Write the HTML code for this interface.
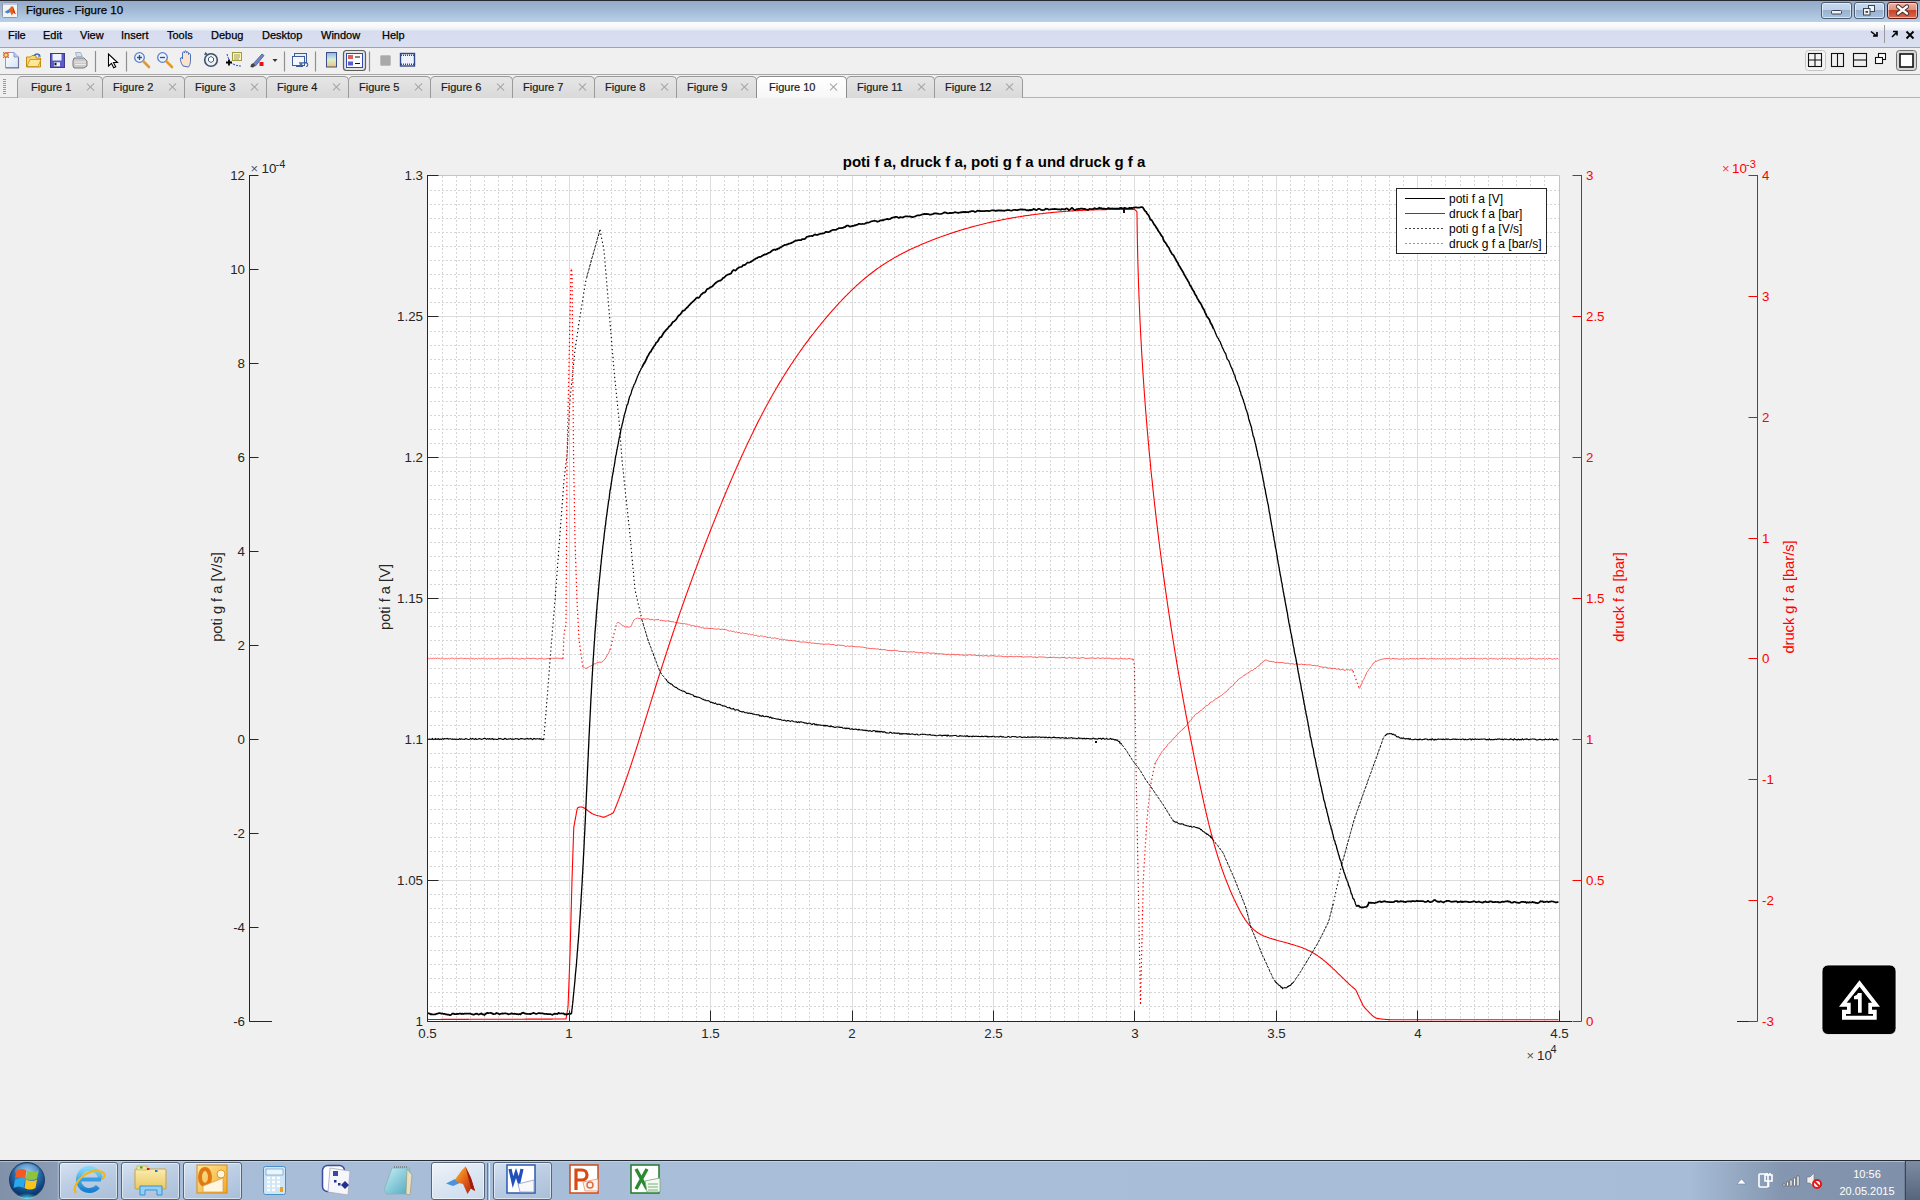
<!DOCTYPE html>
<html><head><meta charset="utf-8">
<style>
html,body{margin:0;padding:0}
body{width:1920px;height:1200px;overflow:hidden;background:#f0f0f0;position:relative;font-family:"Liberation Sans",sans-serif}
.abs{position:absolute}
#titlebar{left:0;top:0;width:1920px;height:22px;background:linear-gradient(#93abc9 0px,#a0b7d4 8px,#b2c9e4 17px,#bad1eb 22px);border-top:1px solid #252a30;box-sizing:border-box}
#menubar{left:0;top:22px;width:1920px;height:26px;background:linear-gradient(#fdfdfe 0px,#f5f7fb 5px,#e8ecf6 8px,#d6dcee 9px,#dbe0f1 25px);border-bottom:1px solid #a0a3ab;box-sizing:border-box}
#toolbar{left:0;top:48px;width:1920px;height:27px;background:#f0f0f0;border-bottom:1px solid #a7a7a7;box-sizing:border-box}
#tabbar{left:0;top:75px;width:1920px;height:23px;background:#f0f0f0;border-bottom:1px solid #b4b4b4;box-sizing:border-box}
.menu{position:absolute;top:7px;font-size:11px;color:#000;line-height:12px;-webkit-text-stroke:0.25px #000}
.tab{position:absolute;top:1px;height:22px;box-sizing:border-box;border:1px solid #9a9a9a;border-bottom:none;border-radius:5px 5px 0 0;background:linear-gradient(#e6e6e6,#d9d9d9);font-size:11px;color:#1a1a1a;line-height:12px;-webkit-text-stroke:0.2px #1a1a1a}
.tab.act{background:linear-gradient(#ffffff,#f7f7f7);top:1px;height:22px;z-index:2;border-color:#8d8d8d}
.tab span{position:absolute;top:4px;left:10px}
.tab.act span{top:4px;left:12px}
.tab b{position:absolute;top:6px;width:8px;height:8px}
.tab b:before,.tab b:after{content:"";position:absolute;left:3px;top:-1px;width:1.4px;height:10px;background:#a5a5a5;transform:rotate(45deg)}
.tab b:after{transform:rotate(-45deg)}
#taskbar{left:0;top:1160px;width:1920px;height:40px;background:linear-gradient(90deg,#8091a9 0px,#8a9bb3 57px,#a7bcd7 59px,#a9bfd9 900px,#a6bcd7 1690px,#8597b0 1780px,#7f91aa 1904px,#5b6a80 1905px);border-top:1px solid #262c36;box-sizing:border-box;box-shadow:inset 0 1px 0 rgba(210,225,240,.55)}
.tbtn{position:absolute;top:1px;height:38px;box-sizing:border-box;border:1px solid #56657b;border-radius:3px;background:linear-gradient(160deg,#d5e2f0 0%,#bccee4 45%,#a9bed8 100%);box-shadow:inset 0 0 0 1px rgba(255,255,255,.5)}
.tbtn.act{background:linear-gradient(160deg,#eef3f9 0%,#dbe6f2 50%,#cbdaeb 100%)}
.wbtn{position:absolute;top:2px;height:17px;box-sizing:border-box;border:1px solid #4d5b70;border-radius:3px;background:linear-gradient(#c7d9ee 0%,#bdd1e8 45%,#98b1cf 50%,#a9c2df 100%);box-shadow:inset 0 0 0 1px rgba(255,255,255,.55)}
</style></head><body>
<div id="titlebar" class="abs"></div>
<div class="abs" style="left:26px;top:3px;font-size:11.5px;color:#000;line-height:14px;-webkit-text-stroke:0.25px #000">Figures - Figure 10</div>
<div class="wbtn" style="left:1821px;width:31px"></div>
<div class="wbtn" style="left:1854px;width:31px"></div>
<div class="wbtn" style="left:1887px;width:31px;border-color:#5b1b1b;background:linear-gradient(#eab2a4 0%,#e0917c 45%,#c8432a 50%,#d9694f 100%)"></div>
<div id="menubar" class="abs">
<span class="menu" style="left:8px">File</span><span class="menu" style="left:43px">Edit</span><span class="menu" style="left:80px">View</span><span class="menu" style="left:121px">Insert</span><span class="menu" style="left:167px">Tools</span><span class="menu" style="left:211px">Debug</span><span class="menu" style="left:262px">Desktop</span><span class="menu" style="left:321px">Window</span><span class="menu" style="left:382px">Help</span>
</div>
<div id="toolbar" class="abs"></div>
<div id="tabbar" class="abs">
<div class="tab" style="left:17px;width:86px"><span style="left:13px">Figure 1</span><b style="left:69px"></b></div>
<div class="tab" style="left:102px;width:83px"><span>Figure 2</span><b style="left:66px"></b></div>
<div class="tab" style="left:184px;width:83px"><span>Figure 3</span><b style="left:66px"></b></div>
<div class="tab" style="left:266px;width:83px"><span>Figure 4</span><b style="left:66px"></b></div>
<div class="tab" style="left:348px;width:83px"><span>Figure 5</span><b style="left:66px"></b></div>
<div class="tab" style="left:430px;width:83px"><span>Figure 6</span><b style="left:66px"></b></div>
<div class="tab" style="left:512px;width:83px"><span>Figure 7</span><b style="left:66px"></b></div>
<div class="tab" style="left:594px;width:83px"><span>Figure 8</span><b style="left:66px"></b></div>
<div class="tab" style="left:676px;width:81px"><span>Figure 9</span><b style="left:64px"></b></div>
<div class="tab act" style="left:756px;width:91px"><span>Figure 10</span><b style="left:73px;top:6px"></b></div>
<div class="tab" style="left:846px;width:89px"><span>Figure 11</span><b style="left:71px"></b></div>
<div class="tab" style="left:934px;width:89px"><span>Figure 12</span><b style="left:71px"></b></div>
</div>
<svg class="abs" style="left:0;top:0" width="1920" height="100">
<defs>
<linearGradient id="mlg" x1="0" y1="0" x2="1" y2="1"><stop offset="0" stop-color="#3d7bd8"/><stop offset="0.5" stop-color="#e06a1c"/><stop offset="1" stop-color="#b32a10"/></linearGradient>
<linearGradient id="pg" x1="0" y1="0" x2="1" y2="1"><stop offset="0" stop-color="#ffffff"/><stop offset="1" stop-color="#d6e4f7"/></linearGradient>
<linearGradient id="cbg" x1="0" y1="0" x2="0" y2="1"><stop offset="0" stop-color="#8fb0f0"/><stop offset="0.5" stop-color="#d8f0d0"/><stop offset="1" stop-color="#f3c070"/></linearGradient>
</defs>
<!-- title icon -->
<rect x="2.5" y="2.5" width="15" height="15" rx="1" fill="#f4f4f4" stroke="#8a98ab"/>
<rect x="3" y="3" width="14" height="2" fill="#b9cbe2"/>
<path d="M4.5 12 L8.5 9.5 L10.5 12 L7.5 13.5 Z" fill="#3f86d6"/><path d="M8.5 9.8 L11.5 6.3 L13 6.6 L15.6 14.2 L13.6 12.8 L11.8 15.6 L10.2 12.2 Z" fill="#e3651c"/><path d="M13 6.6 L15.6 14.2 L13.6 12.8 Z" fill="#b82a12"/>
<!-- menu right -->
<path d="M1871 31.5 l5 4 M1877 32 v4 h-4" stroke="#000" stroke-width="1.6" fill="none"/>
<path d="M1884.5 25v18" stroke="#9a9a9a" stroke-width="1"/>
<path d="M1892 37 l5 -5 M1893 31.5 h4 v4" stroke="#000" stroke-width="1.6" fill="none"/>
<path d="M1906.5 31.5 l7 7 M1913.5 31.5 l-7 7" stroke="#000" stroke-width="1.8"/>
<!-- window buttons glyphs -->
<rect x="1831.5" y="10.5" width="10" height="3.5" rx="1" fill="#f2f2f2" stroke="#3b4454" stroke-width="1"/>
<rect x="1868.5" y="5.5" width="6" height="6" fill="#f2f2f2" stroke="#3b4454"/>
<rect x="1863.5" y="8.5" width="6.5" height="6.5" fill="#f2f2f2" stroke="#3b4454"/>
<rect x="1865.5" y="11" width="2.5" height="1.8" fill="#3b4454"/>
<path d="M1898 6.5 l9 7 M1907 6.5 l-9 7" stroke="#3a2a2a" stroke-width="4.2" stroke-linecap="round"/>
<path d="M1898 6.5 l9 7 M1907 6.5 l-9 7" stroke="#fafafa" stroke-width="2.4" stroke-linecap="round"/>
<!-- toolbar: new -->
<path d="M5.5 52.5 h8.5 l4.5 4.5 v10.5 h-13 z" fill="url(#pg)" stroke="#8c9ccc"/>
<path d="M18.5 57.5 v10.5 h-13" stroke="#6f7498" stroke-width="1.2" fill="none"/>
<path d="M14 52.5 v4.5 h4.5" fill="#b8c6ea" stroke="#8c9ccc"/>
<circle cx="6" cy="55" r="2.2" fill="#e8e070" stroke="#e0663a" stroke-width="1.3"/>
<path d="M3 52 l1 1 M9 52 l-1 1 M3 58 l1 -1 M9 58 l-1 -1" stroke="#e0663a" stroke-width="1"/>
<!-- open -->
<path d="M26.5 57 h4 l1.5 -1.5 h4 v2.5 h4.5 v9 h-14 z" fill="#f6d86e" stroke="#c48c12"/>
<path d="M27 66.5 l3 -7 h11 l-3 7 z" fill="#fde89a" stroke="#c48c12" stroke-width="0.8"/>
<path d="M34 55.5 q3 -3 6 0" stroke="#3b66b8" stroke-width="1.3" fill="none"/>
<path d="M39 54 l2 2.5 l-3 0.3 z" fill="#3b66b8"/>
<!-- save -->
<rect x="50.5" y="53.5" width="14" height="14" fill="#5b5bc8" stroke="#3a3a8e"/>
<rect x="52.5" y="54" width="9" height="6.5" fill="#eef2fb"/>
<rect x="54" y="62.3" width="6" height="4" fill="#f2f2f2"/>
<rect x="54.5" y="62.8" width="2" height="2.5" fill="#111"/>
<!-- print -->
<path d="M75.5 52.5 h5 l2 4 h-6 z" fill="#cfe1f6" stroke="#9aa6b5" stroke-width="0.8"/>
<path d="M74 58 h10 l3 3 v5 l-3 2 h-10 l-1 -2 v-5 z" fill="#c9c9c9" stroke="#7a7a7a"/>
<path d="M74 62 h12 M75 64.5 h11" stroke="#eaeaea" stroke-width="1"/>
<path d="M95.5 51 v21" stroke="#8f8f8f" stroke-width="1.2"/>
<!-- pointer -->
<path d="M108.5 54 v12 l3 -2.7 l2.2 4.5 l2 -1 l-2.2 -4.3 h4 z" fill="#fff" stroke="#000" stroke-width="1.1"/>
<path d="M126.5 51.5 v20" stroke="#8f8f8f" stroke-width="1.2"/>
<!-- zoom in -->
<circle cx="139.5" cy="57.5" r="4.8" fill="#eaf4ff" stroke="#5c7fc8" stroke-width="1.3"/>
<path d="M137 57.5 h5 M139.5 55 v5" stroke="#2b4e9a" stroke-width="1.3"/>
<path d="M143.5 61.5 l5.5 5.5" stroke="#e39a2a" stroke-width="2.6" stroke-linecap="round"/>
<!-- zoom out -->
<circle cx="162.5" cy="57.5" r="4.8" fill="#eaf4ff" stroke="#5c7fc8" stroke-width="1.3"/>
<path d="M160 57.5 h5" stroke="#2b4e9a" stroke-width="1.3"/>
<path d="M166.5 61.5 l5.5 5.5" stroke="#e39a2a" stroke-width="2.6" stroke-linecap="round"/>
<!-- hand -->
<path d="M183 66 c-2 -3 -3 -6 -2.5 -8 c0.5 -1 1.5 -0.5 2 1 v-6 c0 -1.5 2 -1.5 2 0 v-1 c0 -1.5 2 -1.5 2 0 v1 c0 -1.5 2 -1.5 2 0 v1.5 c0 -1.2 2 -1.2 2 0 v6 c0 3 -1 5 -2 6.5 z" fill="#fde3c8" stroke="#4a6fc0" stroke-width="1"/>
<!-- rotate -->
<circle cx="211" cy="60" r="6.3" fill="none" stroke="#39506e" stroke-width="1.6"/>
<path d="M204 55 l1.5 -3 l2.5 2.5 z" fill="#39506e"/>
<path d="M208.5 58 l2.5 -1.5 l2.5 1.5 v3 l-2.5 1.5 l-2.5 -1.5 z" fill="#fff" stroke="#39506e" stroke-width="0.9"/>
<!-- data cursor -->
<rect x="232.5" y="52.5" width="9" height="8" fill="#fbf5b0" stroke="#9e9a40"/>
<path d="M234 55 h6 M234 57 h6 M234 59 h5" stroke="#8a8a5a" stroke-width="0.8"/>
<path d="M227 54 q2 8 6 10 q4 2 8 2" stroke="#1f3fd0" stroke-width="1" fill="none" stroke-dasharray="2 1"/>
<path d="M226 62.5 h6 M229 59.5 v6" stroke="#000" stroke-width="1.8"/>
<!-- brush -->
<path d="M253 64 l9 -10 l2 1.5 l-8.5 10.5 z" fill="#6f86c8" stroke="#46589a" stroke-width="0.8"/>
<path d="M250.5 67 c0 -2 1 -4 3 -3.5 l1.5 1.5 c0 2 -2 3 -4.5 2 z" fill="#444"/>
<rect x="259.5" y="62" width="4" height="4" fill="#ee1111"/>
<path d="M272.5 59 h5 l-2.5 3 z" fill="#333"/>
<path d="M284.5 51.5 v20" stroke="#8f8f8f" stroke-width="1.2"/>
<!-- link -->
<rect x="294.5" y="53.5" width="12" height="9" fill="#e8eef9" stroke="#3c5d9a"/>
<rect x="292.5" y="56.5" width="12" height="9" fill="#f4f7fc" stroke="#3c5d9a"/>
<path d="M296 66.5 h4 a1.8 1.8 0 0 0 0 -3.6 h-1 M303 66.5 h-1 a1.8 1.8 0 0 1 0 -3.6 h4 a1.8 1.8 0 0 1 0 3.6" stroke="#3c5d9a" stroke-width="1.1" fill="none"/>
<path d="M315.5 51.5 v20" stroke="#8f8f8f" stroke-width="1.2"/>
<!-- colorbar -->
<rect x="326.5" y="52.5" width="10" height="14.5" fill="url(#cbg)" stroke="#3d4f8a"/>
<!-- legend pressed -->
<rect x="343.5" y="50.5" width="22" height="20" rx="3" fill="#e4e4e4" stroke="#5e5e5e" stroke-width="1.2"/>
<rect x="346.5" y="53.5" width="16" height="14" fill="#fbfbfd" stroke="#2f4aa8"/>
<rect x="348" y="55" width="5" height="4" fill="#e35c5c"/>
<rect x="348" y="61.5" width="5" height="4" fill="#5a5ad6"/>
<path d="M355 57 h5 M355 63.5 h5" stroke="#111" stroke-width="1.2"/>
<path d="M369.5 51.5 v20" stroke="#8f8f8f" stroke-width="1.2"/>
<!-- gray square -->
<rect x="380.5" y="55.5" width="10" height="10" rx="1" fill="#a9a9a9" stroke="#bdbdbd"/>
<!-- plot tools -->
<rect x="400.5" y="53.5" width="14" height="12.5" fill="#eef3fb" stroke="#32468a" stroke-width="1.4"/>
<path d="M401 55.2 h13 M401 64.3 h13" stroke="#32468a" stroke-width="1.4" stroke-dasharray="1 1"/>
<!-- right layout icons -->
<rect x="1805.5" y="50.5" width="20" height="20" rx="3" fill="#f4f4f4" stroke="#c4c4c4"/>
<rect x="1808.5" y="53.5" width="13" height="13" fill="none" stroke="#111" stroke-width="1.1"/>
<path d="M1815 53.5 v13 M1808.5 60 h13" stroke="#111" stroke-width="1.1"/>
<rect x="1831.5" y="53.5" width="12" height="13" fill="none" stroke="#111" stroke-width="1.1"/>
<path d="M1837.5 53.5 v13" stroke="#111" stroke-width="1.1"/>
<rect x="1853.5" y="53.5" width="13" height="13" fill="none" stroke="#111" stroke-width="1.1"/>
<path d="M1853.5 60 h13" stroke="#111" stroke-width="1.1"/>
<rect x="1878.5" y="53.5" width="7" height="6" fill="#fff" stroke="#111" stroke-width="1.1"/>
<rect x="1875.5" y="57.5" width="7" height="6" fill="#fff" stroke="#111" stroke-width="1.1"/>
<rect x="1896.5" y="50.5" width="20" height="20" rx="3" fill="#d8d8d8" stroke="#707070"/>
<rect x="1900" y="54" width="13" height="13" fill="#fff" stroke="#111" stroke-width="1.6"/>
<!-- tab grip -->
<path d="M3 79.5 h3 M3 81.5 h3 M3 83.5 h3 M3 85.5 h3 M3 87.5 h3 M3 89.5 h3 M3 91.5 h3 M3 93.5 h3" stroke="#9a9a9a" stroke-width="1"/>
</svg>

<svg width="1920" height="1200" style="position:absolute;left:0;top:0" font-family="Liberation Sans, sans-serif" font-size="13.33"><rect x="427" y="175" width="1133" height="847" fill="#fff"/><path d="M442.5 176V1021M456.5 176V1021M470.5 176V1021M484.5 176V1021M498.5 176V1021M512.5 176V1021M526.5 176V1021M541.5 176V1021M555.5 176V1021M583.5 176V1021M597.5 176V1021M611.5 176V1021M625.5 176V1021M640.5 176V1021M654.5 176V1021M668.5 176V1021M682.5 176V1021M696.5 176V1021M724.5 176V1021M738.5 176V1021M753.5 176V1021M767.5 176V1021M781.5 176V1021M795.5 176V1021M809.5 176V1021M823.5 176V1021M837.5 176V1021M866.5 176V1021M880.5 176V1021M894.5 176V1021M908.5 176V1021M922.5 176V1021M936.5 176V1021M951.5 176V1021M965.5 176V1021M979.5 176V1021M1007.5 176V1021M1021.5 176V1021M1035.5 176V1021M1050.5 176V1021M1064.5 176V1021M1078.5 176V1021M1092.5 176V1021M1106.5 176V1021M1120.5 176V1021M1149.5 176V1021M1163.5 176V1021M1177.5 176V1021M1191.5 176V1021M1205.5 176V1021M1219.5 176V1021M1233.5 176V1021M1248.5 176V1021M1262.5 176V1021M1290.5 176V1021M1304.5 176V1021M1318.5 176V1021M1332.5 176V1021M1347.5 176V1021M1361.5 176V1021M1375.5 176V1021M1389.5 176V1021M1403.5 176V1021M1431.5 176V1021M1445.5 176V1021M1460.5 176V1021M1474.5 176V1021M1488.5 176V1021M1502.5 176V1021M1516.5 176V1021M1530.5 176V1021M1544.5 176V1021M430 190.5H1559M430 204.5H1559M430 218.5H1559M430 232.5H1559M430 246.5H1559M430 260.5H1559M430 274.5H1559M430 288.5H1559M430 302.5H1559M430 331.5H1559M430 345.5H1559M430 359.5H1559M430 373.5H1559M430 387.5H1559M430 401.5H1559M430 415.5H1559M430 429.5H1559M430 443.5H1559M430 471.5H1559M430 485.5H1559M430 499.5H1559M430 514.5H1559M430 528.5H1559M430 542.5H1559M430 556.5H1559M430 570.5H1559M430 584.5H1559M430 612.5H1559M430 626.5H1559M430 640.5H1559M430 654.5H1559M430 668.5H1559M430 683.5H1559M430 697.5H1559M430 711.5H1559M430 725.5H1559M430 753.5H1559M430 767.5H1559M430 781.5H1559M430 795.5H1559M430 809.5H1559M430 823.5H1559M430 837.5H1559M430 851.5H1559M430 866.5H1559M430 894.5H1559M430 908.5H1559M430 922.5H1559M430 936.5H1559M430 950.5H1559M430 964.5H1559M430 978.5H1559M430 992.5H1559M430 1006.5H1559" stroke="#d6d6d6" stroke-width="1" stroke-dasharray="2 2" fill="none"/><path d="M569.5 176V1021M710.5 176V1021M852.5 176V1021M993.5 176V1021M1134.5 176V1021M1276.5 176V1021M1417.5 176V1021M428 316.5H1559M428 457.5H1559M428 598.5H1559M428 739.5H1559M428 880.5H1559" stroke="#dcdcdc" stroke-width="1" fill="none"/><path d="M427.5 175.5H1559.5V1021.5" stroke="#c4c4c4" stroke-width="1" fill="none"/><path d="M427.5 1019.5L428.5 1019.5L429.5 1019.5L430.5 1019.5L431.5 1019.5L432.5 1019.5L433.5 1019.5L434.5 1019.5L435.5 1019.5L436.5 1019.5L437.5 1019.5L438.5 1019.5L439.5 1019.5L440.5 1019.5L441.4 1019.4L442.4 1019.4L443.4 1019.4L444.4 1019.4L445.4 1019.4L446.4 1019.4L447.4 1019.4L448.4 1019.4L449.4 1019.4L450.4 1019.4L451.4 1019.4L452.4 1019.4L453.4 1019.4L454.4 1019.4L455.4 1019.4L456.4 1019.4L457.4 1019.4L458.4 1019.4L459.4 1019.4L460.4 1019.4L461.4 1019.4L462.4 1019.4L463.4 1019.4L464.4 1019.4L465.4 1019.4L466.4 1019.4L467.4 1019.4L468.4 1019.4L469.3 1019.3L470.3 1019.3L471.3 1019.3L472.3 1019.3L473.3 1019.3L474.3 1019.3L475.3 1019.3L476.3 1019.3L477.3 1019.3L478.3 1019.3L479.3 1019.3L480.3 1019.3L481.3 1019.3L482.3 1019.3L483.3 1019.3L484.3 1019.3L485.3 1019.3L486.3 1019.3L487.3 1019.3L488.3 1019.3L489.3 1019.3L490.3 1019.3L491.3 1019.3L492.3 1019.3L493.3 1019.3L494.3 1019.3L495.3 1019.3L496.3 1019.3L497.2 1019.2L498.2 1019.2L499.2 1019.2L500.2 1019.2L501.2 1019.2L502.2 1019.2L503.2 1019.2L504.2 1019.2L505.2 1019.2L506.2 1019.2L507.2 1019.2L508.2 1019.2L509.2 1019.2L510.2 1019.2L511.2 1019.2L512.2 1019.2L513.2 1019.2L514.2 1019.2L515.2 1019.2L516.2 1019.2L517.2 1019.2L518.2 1019.2L519.2 1019.2L520.2 1019.2L521.2 1019.2L522.2 1019.2L523.2 1019.2L524.2 1019.2L525.1 1019.1L526.1 1019.1L527.1 1019.1L528.1 1019.1L529.1 1019.1L530.1 1019.1L531.1 1019.1L532.1 1019.1L533.1 1019.1L534.1 1019.1L535.1 1019.1L536.1 1019.1L537.1 1019.1L538.1 1019.1L539.1 1019.1L540.1 1019.1L541.1 1019.1L542.1 1019.1L543.1 1019.1L544.1 1019.1L545.1 1019.1L546.1 1019.1L547.1 1019.1L548.1 1019.1L549.1 1019.1L550.1 1019.1L551.1 1019.1L552.1 1019.1L553.0 1019.0L554.0 1019.0L555.0 1019.0L556.0 1019.0L557.0 1019.0L558.0 1019.0L559.0 1019.0L560.0 1019.0L561.0 1019.0L562.0 1019.0L563.0 1019.0L564.0 1019.0L565.0 1019.0L566.0 1019.0L566.2 1018.0L566.3 1017.1L566.5 1016.1L566.7 1015.2L566.8 1014.2L567.0 1013.2L567.2 1012.3L567.3 1011.3L567.5 1010.4L567.7 1009.4L567.8 1008.5L567.9 1007.5L568.0 1006.5L568.1 1005.5L568.1 1004.5L568.2 1003.5L568.2 1002.5L568.2 1001.6L568.3 1000.6L568.3 999.6L568.3 998.6L568.4 997.6L568.4 996.6L568.5 995.6L568.5 994.6L568.5 993.6L568.6 992.6L568.6 991.7L568.6 990.7L568.7 989.7L568.7 988.7L568.8 987.7L568.8 986.7L568.8 985.7L568.9 984.7L568.9 983.7L568.9 982.7L569.0 981.7L569.0 980.8L569.1 979.8L569.1 978.8L569.1 977.8L569.2 976.8L569.2 975.8L569.2 974.8L569.3 973.8L569.3 972.8L569.4 971.8L569.4 970.8L569.4 969.9L569.5 968.9L569.5 967.9L569.5 966.9L569.6 965.9L569.6 964.9L569.7 963.9L569.7 962.9L569.7 961.9L569.8 960.9L569.8 960.0L569.8 959.0L569.9 958.0L569.9 957.0L570.0 956.0L570.0 955.0L570.0 954.0L570.1 953.0L570.1 952.0L570.1 951.0L570.1 950.0L570.2 949.0L570.2 948.0L570.2 947.0L570.2 946.0L570.3 945.0L570.3 944.0L570.3 943.0L570.3 942.0L570.4 941.0L570.4 940.0L570.4 939.0L570.5 938.0L570.5 937.0L570.5 936.0L570.5 935.0L570.6 934.0L570.6 933.0L570.6 932.0L570.6 931.0L570.7 930.0L570.7 929.0L570.7 928.0L570.7 927.0L570.8 926.0L570.8 925.0L570.8 924.0L570.9 923.0L570.9 922.0L570.9 921.0L570.9 920.0L571.0 919.0L571.0 918.0L571.0 917.0L571.0 916.0L571.1 915.0L571.1 914.0L571.1 913.0L571.1 912.0L571.2 911.0L571.2 910.0L571.2 909.0L571.3 908.0L571.3 907.0L571.3 906.0L571.3 905.0L571.4 904.0L571.4 903.0L571.4 902.0L571.4 901.0L571.5 900.0L571.5 899.0L571.5 898.0L571.5 897.0L571.6 896.0L571.6 895.0L571.6 894.0L571.7 893.0L571.7 892.0L571.7 891.0L571.7 890.0L571.8 889.0L571.8 888.0L571.8 887.0L571.8 886.0L571.9 885.0L571.9 884.0L571.9 883.0L571.9 882.0L572.0 881.0L572.0 880.0L572.0 879.0L572.1 878.0L572.1 877.0L572.1 876.0L572.2 875.0L572.2 874.1L572.2 873.1L572.3 872.1L572.3 871.1L572.3 870.1L572.4 869.1L572.4 868.1L572.4 867.1L572.5 866.1L572.5 865.1L572.5 864.2L572.6 863.2L572.6 862.2L572.6 861.2L572.7 860.2L572.7 859.2L572.7 858.2L572.8 857.2L572.8 856.2L572.8 855.2L572.9 854.2L572.9 853.3L572.9 852.3L573.0 851.3L573.0 850.3L573.0 849.3L573.1 848.3L573.1 847.3L573.1 846.3L573.2 845.3L573.2 844.3L573.2 843.3L573.3 842.4L573.3 841.4L573.3 840.4L573.4 839.4L573.4 838.4L573.4 837.4L573.5 836.4L573.5 835.4L573.5 834.4L573.6 833.4L573.6 832.5L573.6 831.5L573.7 830.5L573.7 829.5L573.7 828.5L573.8 827.5L574.0 826.5L574.1 825.5L574.3 824.6L574.5 823.6L574.6 822.6L574.8 821.6L575.0 820.7L575.2 819.7L575.4 818.7L575.5 817.7L575.7 816.8L575.9 815.8L576.1 814.8L576.2 813.8L576.4 812.9L576.6 811.9L576.8 810.9L577.0 809.9L577.2 809.0L577.5 808.2L577.9 807.6L578.6 807.2L579.4 807.1L580.3 807.0L581.2 807.0L582.1 807.1L582.9 807.3L583.8 807.7L584.6 808.2L585.4 808.8L586.2 809.3L587.0 809.9L587.7 810.5L588.5 811.1L589.3 811.7L590.1 812.2L590.9 812.8L591.7 813.4L592.6 813.8L593.5 814.2L594.4 814.6L595.4 814.9L596.3 815.2L597.3 815.5L598.2 815.8L599.2 816.0L600.2 816.3L601.1 816.6L602.1 816.9L603.0 817.1L604.0 817.1L604.9 816.9L605.8 816.6L606.7 816.1L607.6 815.7L608.5 815.2L609.4 814.8L610.3 814.4L611.2 813.9L612.1 813.5L613.0 813.0L613.8 811.8L614.2 810.6L614.8 809.4L615.2 808.2L615.8 807.0L616.2 805.8L616.8 804.5L617.2 803.2L617.8 802.0L618.2 800.7L618.8 799.4L619.2 798.1L619.8 796.8L620.2 795.5L620.8 794.1L621.2 792.8L621.8 791.4L622.2 790.1L622.8 788.7L623.2 787.3L623.8 785.9L624.2 784.5L624.8 783.1L625.2 781.7L625.8 780.3L626.2 778.9L626.8 777.4L627.2 776.0L627.8 774.5L628.2 773.1L628.8 771.6L629.2 770.1L629.8 768.6L630.2 767.2L630.8 765.7L631.2 764.2L631.8 762.7L632.2 761.1L632.8 759.6L633.2 758.1L633.8 756.6L634.2 755.0L634.8 753.5L635.2 751.9L635.8 750.4L636.2 748.8L636.8 747.3L637.2 745.7L637.8 744.1L638.2 742.6L638.8 741.0L639.2 739.4L639.8 737.8L640.2 736.2L640.8 734.6L641.2 733.0L641.8 731.4L642.2 729.8L642.8 728.2L643.2 726.6L643.8 725.0L644.2 723.4L644.8 721.8L645.2 720.2L645.8 718.6L646.2 717.0L646.8 715.4L647.2 713.8L647.8 712.1L648.2 710.5L648.8 708.9L649.2 707.3L649.8 705.7L650.2 704.1L650.8 702.4L651.2 700.8L651.8 699.2L652.2 697.6L652.8 696.0L653.2 694.4L653.8 692.8L654.2 691.2L654.8 689.5L655.2 687.9L655.8 686.3L656.2 684.7L656.8 683.1L657.2 681.5L657.8 680.0L658.2 678.4L658.8 676.8L659.2 675.2L659.8 673.6L660.2 672.0L660.8 670.5L661.2 668.9L661.8 667.3L662.2 665.8L662.8 664.2L663.2 662.7L663.8 661.1L664.2 659.6L664.8 658.0L665.2 656.5L665.8 655.0L666.2 653.4L666.8 651.9L667.2 650.4L667.8 648.8L668.2 647.3L668.8 645.8L669.2 644.3L669.8 642.8L670.2 641.3L670.8 639.8L671.2 638.3L671.8 636.8L672.2 635.3L672.8 633.8L673.2 632.3L673.8 630.9L674.2 629.4L674.8 627.9L675.2 626.4L675.8 625.0L676.2 623.5L676.8 622.1L677.2 620.6L677.8 619.1L678.2 617.7L678.8 616.3L679.2 614.8L679.8 613.4L680.2 611.9L680.8 610.5L681.2 609.1L681.8 607.6L682.2 606.2L682.8 604.8L683.2 603.4L683.8 602.0L684.2 600.6L684.8 599.1L685.2 597.7L685.8 596.3L686.2 594.9L686.8 593.5L687.2 592.1L687.8 590.8L688.2 589.4L688.8 588.0L689.2 586.6L689.8 585.2L690.2 583.8L690.8 582.5L691.2 581.1L691.8 579.7L692.2 578.4L692.8 577.0L693.2 575.6L693.8 574.3L694.2 572.9L694.8 571.6L695.2 570.2L695.8 568.9L696.2 567.6L696.8 566.2L697.2 564.9L697.8 563.5L698.2 562.2L698.8 560.9L699.2 559.6L699.8 558.2L700.2 556.9L700.8 555.6L701.2 554.3L701.8 553.0L702.2 551.7L702.8 550.3L703.2 549.0L703.8 547.7L704.2 546.4L704.8 545.1L705.2 543.8L705.8 542.5L706.2 541.3L706.8 540.0L707.2 538.7L707.8 537.4L708.2 536.1L708.8 534.8L709.2 533.6L709.8 532.3L710.2 531.0L710.8 529.7L711.2 528.5L711.8 527.2L712.2 525.9L712.8 524.7L713.2 523.4L713.8 522.2L714.2 520.9L714.8 519.7L715.2 518.4L715.8 517.2L716.2 515.9L716.8 514.7L717.2 513.5L717.8 512.2L718.2 511.0L718.8 509.8L719.2 508.5L719.8 507.3L720.2 506.1L720.8 504.9L721.2 503.6L721.8 502.4L722.2 501.2L722.8 500.0L723.2 498.8L723.8 497.6L724.2 496.4L724.8 495.2L725.2 494.0L725.8 492.8L726.2 491.6L726.8 490.4L727.2 489.2L727.8 488.0L728.2 486.9L728.8 485.7L729.2 484.5L729.8 483.3L730.2 482.2L730.8 481.0L731.2 479.8L731.8 478.7L732.2 477.5L732.8 476.4L733.2 475.2L733.8 474.1L734.2 472.9L734.8 471.8L735.2 470.6L735.8 469.5L736.2 468.4L736.8 467.2L737.2 466.1L737.8 465.0L738.2 463.9L738.8 462.7L739.2 461.6L739.8 460.5L740.2 459.4L740.8 458.3L741.2 457.2L741.8 456.1L742.2 455.0L742.8 453.9L743.2 452.8L743.8 451.7L744.2 450.6L744.8 449.5L745.2 448.5L745.8 447.4L746.2 446.3L746.8 445.3L747.2 444.2L747.8 443.1L748.2 442.1L748.8 441.0L749.2 440.0L749.8 438.9L750.2 437.9L750.8 436.8L751.2 435.8L751.8 434.7L752.2 433.7L752.8 432.7L753.2 431.7L753.8 430.6L754.2 429.6L754.8 428.6L755.2 427.6L755.8 426.6L756.2 425.6L756.8 424.6L757.2 423.6L757.8 422.6L758.2 421.6L758.8 420.6L759.2 419.6L759.8 418.7L760.2 417.7L760.8 416.7L761.2 415.7L761.8 414.8L762.2 413.8L762.8 412.9L763.2 411.9L763.8 411.0L764.2 410.0L764.8 409.1L765.2 408.1L765.8 407.2L766.2 406.3L766.8 405.3L767.2 404.4L767.8 403.5L768.2 402.6L768.8 401.7L769.2 400.8L769.8 399.9L770.2 399.0L770.8 398.1L771.2 397.2L771.8 396.3L772.2 395.4L772.8 394.5L773.2 393.6L773.8 392.8L774.2 391.9L774.8 391.0L775.5 389.7L776.2 388.4L777.0 387.2L777.8 385.9L778.5 384.6L779.2 383.4L780.0 382.1L780.8 380.9L781.5 379.7L782.2 378.4L783.0 377.2L783.8 376.0L784.5 374.8L785.2 373.6L786.0 372.4L786.8 371.3L787.5 370.1L788.2 368.9L789.0 367.8L789.8 366.6L790.5 365.5L791.2 364.3L792.0 363.2L792.8 362.1L793.5 360.9L794.2 359.8L795.0 358.7L795.8 357.6L796.5 356.5L797.2 355.5L798.0 354.4L798.8 353.3L799.5 352.2L800.2 351.2L801.0 350.1L801.8 349.1L802.5 348.0L803.2 347.0L804.0 345.9L804.8 344.9L805.5 343.9L806.2 342.9L807.0 341.9L807.8 340.9L808.5 339.9L809.2 338.9L810.0 337.9L810.8 336.9L811.5 335.9L812.2 334.9L813.0 334.0L813.8 333.0L814.5 332.0L815.2 331.1L816.0 330.1L816.8 329.2L817.5 328.3L818.2 327.3L819.0 326.4L819.8 325.5L820.5 324.5L821.2 323.6L822.0 322.7L822.8 321.8L823.5 320.9L824.2 320.0L825.0 319.1L825.8 318.2L826.5 317.3L827.2 316.4L828.0 315.5L828.8 314.7L829.5 313.8L830.2 312.9L831.0 312.1L831.8 311.2L832.5 310.4L833.2 309.5L834.0 308.7L834.8 307.8L835.5 307.0L836.2 306.2L837.0 305.3L837.8 304.5L838.5 303.7L839.2 302.9L840.0 302.1L840.8 301.3L841.5 300.5L842.2 299.7L843.0 298.9L843.8 298.1L844.5 297.4L845.2 296.6L846.0 295.8L846.8 295.1L847.5 294.3L848.2 293.6L849.0 292.8L849.8 292.1L850.5 291.4L851.2 290.6L852.0 289.9L852.8 289.2L853.5 288.5L854.2 287.8L855.0 287.1L855.8 286.4L856.5 285.7L857.2 285.0L858.0 284.3L858.8 283.6L859.5 283.0L860.2 282.3L861.2 281.4L862.2 280.6L863.2 279.7L864.2 278.9L865.2 278.0L866.2 277.2L867.2 276.4L868.2 275.6L869.2 274.8L870.2 274.0L871.2 273.2L872.2 272.5L873.2 271.7L874.2 271.0L875.2 270.2L876.2 269.5L877.2 268.8L878.2 268.1L879.2 267.4L880.2 266.7L881.2 266.0L882.2 265.4L883.2 264.7L884.2 264.0L885.2 263.4L886.2 262.7L887.2 262.1L888.2 261.5L889.2 260.9L890.2 260.3L891.2 259.7L892.2 259.1L893.2 258.5L894.2 257.9L895.2 257.3L896.2 256.8L897.2 256.2L898.2 255.7L899.2 255.1L900.2 254.6L901.2 254.0L902.2 253.5L903.2 253.0L904.2 252.5L905.2 252.0L906.2 251.5L907.2 251.0L908.2 250.5L909.2 250.0L910.2 249.5L911.2 249.1L912.2 248.6L913.2 248.1L914.2 247.7L915.2 247.2L916.2 246.8L917.2 246.3L918.2 245.9L919.2 245.4L920.2 245.0L921.2 244.6L922.2 244.1L923.2 243.7L924.2 243.3L925.2 242.9L926.2 242.5L927.2 242.1L928.2 241.7L929.2 241.3L930.2 240.9L931.2 240.5L932.2 240.1L933.2 239.7L934.2 239.3L935.2 238.9L936.2 238.5L937.2 238.2L938.2 237.8L939.2 237.4L940.2 237.0L941.2 236.7L942.2 236.3L943.2 236.0L944.2 235.6L945.2 235.3L946.2 234.9L947.2 234.6L948.2 234.2L949.2 233.9L950.2 233.5L951.2 233.2L952.2 232.9L953.2 232.5L954.2 232.2L955.2 231.9L956.2 231.6L957.2 231.3L958.2 230.9L959.2 230.6L960.2 230.3L961.2 230.0L962.2 229.7L963.2 229.4L964.2 229.1L965.2 228.8L966.2 228.5L967.2 228.2L968.2 228.0L969.2 227.7L970.2 227.4L971.2 227.1L972.2 226.8L973.2 226.6L974.2 226.3L975.2 226.0L976.2 225.8L977.2 225.5L978.2 225.2L979.2 225.0L980.2 224.7L981.2 224.5L982.2 224.2L983.2 224.0L984.2 223.7L985.2 223.5L986.2 223.3L987.2 223.0L988.2 222.8L989.2 222.6L990.2 222.3L991.2 222.1L992.2 221.9L993.2 221.7L994.2 221.4L995.2 221.2L996.2 221.0L997.2 220.8L998.2 220.6L999.2 220.4L1000.2 220.2L1001.2 220.0L1002.2 219.8L1003.2 219.6L1004.2 219.4L1005.2 219.2L1006.2 219.0L1007.2 218.8L1008.2 218.6L1009.2 218.4L1010.2 218.3L1011.2 218.1L1012.2 217.9L1013.2 217.7L1014.2 217.5L1015.2 217.4L1016.2 217.2L1017.2 217.0L1018.2 216.9L1019.2 216.7L1020.2 216.6L1021.2 216.4L1022.2 216.2L1023.2 216.1L1024.2 215.9L1025.2 215.8L1026.2 215.6L1027.2 215.5L1028.2 215.4L1029.2 215.2L1030.2 215.1L1031.2 214.9L1032.2 214.8L1033.2 214.7L1034.2 214.5L1035.2 214.4L1036.2 214.3L1037.2 214.2L1038.2 214.0L1039.2 213.9L1040.2 213.8L1041.2 213.7L1042.2 213.6L1043.2 213.4L1044.2 213.3L1045.2 213.2L1046.2 213.1L1047.2 213.0L1048.2 212.9L1049.2 212.8L1050.2 212.7L1051.2 212.6L1052.2 212.5L1053.2 212.4L1054.2 212.3L1055.2 212.2L1056.2 212.1L1057.2 212.0L1058.2 212.0L1059.2 211.9L1060.2 211.8L1061.2 211.7L1062.2 211.6L1063.2 211.5L1064.2 211.5L1065.2 211.4L1066.2 211.3L1067.2 211.3L1068.2 211.2L1069.2 211.1L1070.2 211.0L1071.2 211.0L1072.2 210.9L1073.2 210.9L1074.2 210.8L1075.2 210.7L1076.2 210.7L1077.2 210.6L1078.2 210.6L1079.2 210.5L1080.2 210.5L1081.2 210.4L1082.2 210.4L1083.2 210.3L1084.2 210.3L1085.2 210.2L1086.2 210.2L1087.2 210.1L1088.2 210.1L1089.2 210.0L1090.2 210.0L1091.2 210.0L1092.2 209.9L1093.2 209.9L1094.2 209.9L1095.2 209.8L1096.2 209.8L1097.2 209.8L1098.2 209.7L1099.2 209.7L1100.2 209.7L1101.2 209.7L1102.2 209.6L1103.2 209.6L1104.2 209.6L1105.2 209.6L1106.2 209.6L1107.2 209.5L1108.2 209.5L1109.2 209.5L1110.2 209.5L1111.2 209.5L1112.2 209.5L1113.2 209.5L1114.2 209.4L1115.2 209.4L1116.2 209.4L1117.2 209.4L1118.2 209.4L1119.2 209.4L1120.2 209.4L1121.2 209.4L1122.2 209.4L1123.2 209.4L1124.2 209.4L1125.2 209.4L1126.2 209.4L1127.2 209.4L1128.2 209.4L1129.2 209.4L1130.2 209.4L1131.2 209.4L1132.2 209.4L1133.2 209.4L1134.2 209.4L1134.5 209.0L1135.1 209.8L1135.8 210.5L1136.4 211.2L1137.0 212.0L1137.0 213.0L1137.0 214.0L1137.0 215.0L1137.0 216.0L1137.0 217.0L1137.1 218.0L1137.1 219.0L1137.1 220.0L1137.1 221.0L1137.1 222.0L1137.1 223.0L1137.1 224.0L1137.1 225.0L1137.2 226.0L1137.2 227.0L1137.2 228.0L1137.2 229.0L1137.2 230.0L1137.2 231.0L1137.2 232.0L1137.3 233.0L1137.3 234.0L1137.3 235.0L1137.3 236.0L1137.3 237.0L1137.3 238.0L1137.4 239.0L1137.4 240.0L1137.4 241.0L1137.4 242.0L1137.4 243.0L1137.5 244.0L1137.5 245.0L1137.5 246.0L1137.5 247.0L1137.5 248.0L1137.6 249.0L1137.6 250.0L1137.6 251.0L1137.6 252.0L1137.7 253.0L1137.7 254.0L1137.7 255.0L1137.7 256.0L1137.7 257.0L1137.8 258.0L1137.8 259.0L1137.8 260.0L1137.8 261.0L1137.9 262.0L1137.9 263.0L1137.9 264.0L1138.0 265.0L1138.0 266.0L1138.0 267.0L1138.0 268.0L1138.1 269.0L1138.1 270.0L1138.1 271.0L1138.2 272.0L1138.2 273.0L1138.2 274.0L1138.2 275.0L1138.3 276.0L1138.3 277.0L1138.3 278.0L1138.4 279.0L1138.4 280.0L1138.4 281.0L1138.5 282.0L1138.5 283.0L1138.5 284.0L1138.6 285.0L1138.6 286.0L1138.6 287.0L1138.7 288.0L1138.7 289.0L1138.8 290.0L1138.8 291.0L1138.8 292.0L1138.9 293.0L1138.9 294.0L1138.9 295.0L1139.0 296.0L1139.0 297.0L1139.1 298.0L1139.1 299.0L1139.1 300.0L1139.2 301.0L1139.2 302.0L1139.3 303.0L1139.3 304.0L1139.3 305.0L1139.4 306.0L1139.4 307.0L1139.5 308.0L1139.5 309.0L1139.5 310.0L1139.6 311.0L1139.6 312.0L1139.7 313.0L1139.7 314.0L1139.8 315.0L1139.8 316.0L1139.9 317.0L1139.9 318.0L1139.9 319.0L1140.0 320.0L1140.0 321.0L1140.1 321.9L1140.1 322.9L1140.2 323.9L1140.2 324.9L1140.3 325.9L1140.3 326.9L1140.4 327.9L1140.4 328.9L1140.5 329.9L1140.5 330.9L1140.6 331.9L1140.6 332.9L1140.7 333.9L1140.7 334.9L1140.8 335.9L1140.8 336.9L1140.9 337.9L1140.9 338.9L1141.0 339.9L1141.1 340.9L1141.1 341.9L1141.2 342.9L1141.2 343.9L1141.3 344.9L1141.3 345.9L1141.4 346.9L1141.4 347.9L1141.5 348.9L1141.6 349.9L1141.6 350.9L1141.7 351.9L1141.7 352.9L1141.8 353.9L1141.8 354.9L1141.9 355.9L1142.0 356.9L1142.0 357.9L1142.1 358.9L1142.1 359.9L1142.2 360.9L1142.3 361.9L1142.3 362.9L1142.4 363.9L1142.5 364.9L1142.5 365.9L1142.6 366.9L1142.6 367.9L1142.7 368.9L1142.8 369.9L1142.8 370.9L1142.9 371.9L1143.0 372.9L1143.0 373.9L1143.1 374.8L1143.2 375.8L1143.2 376.8L1143.3 377.8L1143.4 378.8L1143.4 379.8L1143.5 380.8L1143.6 381.8L1143.6 382.8L1143.7 383.8L1143.8 384.8L1143.8 385.8L1143.9 386.8L1144.0 387.8L1144.1 388.8L1144.1 389.8L1144.2 390.8L1144.3 391.8L1144.3 392.8L1144.4 393.8L1144.5 394.8L1144.6 395.8L1144.6 396.8L1144.7 397.8L1144.8 398.8L1144.9 399.8L1144.9 400.8L1145.0 401.8L1145.1 402.8L1145.2 403.8L1145.2 404.8L1145.3 405.8L1145.4 406.8L1145.5 407.8L1145.5 408.7L1145.6 409.7L1145.7 410.7L1145.8 411.7L1145.9 412.7L1145.9 413.7L1146.0 414.7L1146.1 415.7L1146.2 416.7L1146.3 417.7L1146.3 418.7L1146.4 419.7L1146.5 420.7L1146.6 421.7L1146.7 422.7L1146.8 423.7L1146.8 424.7L1146.9 425.7L1147.0 426.7L1147.1 427.7L1147.2 428.7L1147.3 429.7L1147.3 430.7L1147.4 431.7L1147.5 432.7L1147.6 433.7L1147.7 434.6L1147.8 435.6L1147.9 436.6L1148.0 437.6L1148.0 438.6L1148.1 439.6L1148.2 440.6L1148.3 441.6L1148.4 442.6L1148.5 443.6L1148.6 444.6L1148.7 445.6L1148.8 446.6L1148.8 447.6L1148.9 448.6L1149.0 449.6L1149.1 450.6L1149.2 451.6L1149.3 452.6L1149.4 453.6L1149.5 454.6L1149.6 455.6L1149.7 456.5L1149.8 457.5L1149.9 458.5L1150.0 459.5L1150.1 460.5L1150.2 461.5L1150.3 462.5L1150.4 463.5L1150.5 464.5L1150.6 465.5L1150.6 466.5L1150.7 467.5L1150.8 468.5L1150.9 469.5L1151.0 470.5L1151.1 471.5L1151.2 472.5L1151.3 473.5L1151.4 474.5L1151.5 475.4L1151.6 476.4L1151.7 477.4L1151.9 478.4L1152.0 479.4L1152.1 480.4L1152.2 481.4L1152.3 482.4L1152.4 483.4L1152.5 484.4L1152.6 485.4L1152.7 486.4L1152.8 487.4L1152.9 488.4L1153.0 489.4L1153.1 490.4L1153.2 491.4L1153.3 492.3L1153.4 493.3L1153.5 494.3L1153.6 495.3L1153.7 496.3L1153.9 497.3L1154.0 498.3L1154.1 499.3L1154.2 500.3L1154.3 501.3L1154.4 502.3L1154.5 503.3L1154.6 504.3L1154.7 505.3L1154.8 506.3L1155.0 507.2L1155.1 508.2L1155.2 509.2L1155.3 510.2L1155.4 511.2L1155.5 512.2L1155.6 513.2L1155.8 514.2L1155.9 515.2L1156.0 516.2L1156.1 517.2L1156.2 518.2L1156.3 519.2L1156.4 520.2L1156.6 521.1L1156.7 522.1L1156.8 523.1L1156.9 524.1L1157.0 525.1L1157.2 526.1L1157.3 527.1L1157.4 528.1L1157.5 529.1L1157.6 530.1L1157.7 531.1L1157.9 532.1L1158.0 533.1L1158.1 534.1L1158.2 535.0L1158.4 536.0L1158.5 537.0L1158.6 538.0L1158.7 539.0L1158.8 540.0L1159.0 541.0L1159.1 542.0L1159.2 543.0L1159.3 544.0L1159.5 545.0L1159.6 546.0L1159.7 546.9L1159.8 547.9L1160.0 548.9L1160.1 549.9L1160.2 550.9L1160.4 551.9L1160.5 552.9L1160.6 553.9L1160.7 554.9L1160.9 555.9L1161.0 556.9L1161.1 557.8L1161.3 558.8L1161.4 559.8L1161.5 560.8L1161.6 561.8L1161.8 562.8L1161.9 563.8L1162.0 564.8L1162.2 565.8L1162.3 566.8L1162.4 567.8L1162.6 568.7L1162.7 569.7L1162.8 570.7L1163.0 571.7L1163.1 572.7L1163.2 573.7L1163.4 574.7L1163.5 575.7L1163.6 576.7L1163.8 577.7L1163.9 578.7L1164.1 579.6L1164.2 580.6L1164.3 581.6L1164.5 582.6L1164.6 583.6L1164.7 584.6L1164.9 585.6L1165.0 586.6L1165.2 587.6L1165.3 588.5L1165.4 589.5L1165.6 590.5L1165.7 591.5L1165.9 592.5L1166.0 593.5L1166.2 594.5L1166.3 595.5L1166.4 596.5L1166.6 597.5L1166.7 598.4L1166.9 599.4L1167.0 600.4L1167.2 601.4L1167.3 602.4L1167.4 603.4L1167.6 604.4L1167.7 605.4L1167.9 606.4L1168.0 607.3L1168.2 608.3L1168.3 609.3L1168.5 610.3L1168.6 611.3L1168.8 612.3L1168.9 613.3L1169.1 614.3L1169.2 615.3L1169.4 616.2L1169.5 617.2L1169.7 618.2L1169.8 619.2L1170.0 620.2L1170.1 621.2L1170.3 622.2L1170.4 623.2L1170.6 624.1L1170.7 625.1L1170.9 626.1L1171.0 627.1L1171.2 628.1L1171.3 629.1L1171.5 630.1L1171.7 631.1L1171.8 632.0L1172.0 633.0L1172.1 634.0L1172.3 635.0L1172.4 636.0L1172.6 637.0L1172.7 638.0L1172.9 639.0L1173.1 639.9L1173.2 640.9L1173.4 641.9L1173.5 642.9L1173.7 643.9L1173.9 644.9L1174.0 645.9L1174.2 646.9L1174.3 647.8L1174.5 648.8L1174.7 649.8L1174.8 650.8L1175.0 651.8L1175.1 652.8L1175.3 653.8L1175.5 654.7L1175.6 655.7L1175.8 656.7L1176.0 657.7L1176.1 658.7L1176.3 659.7L1176.4 660.7L1176.6 661.6L1176.8 662.6L1176.9 663.6L1177.1 664.6L1177.3 665.6L1177.4 666.6L1177.6 667.6L1177.8 668.5L1177.9 669.5L1178.1 670.5L1178.3 671.5L1178.5 672.5L1178.6 673.5L1178.8 674.5L1179.0 675.4L1179.1 676.4L1179.3 677.4L1179.5 678.4L1179.6 679.4L1179.8 680.4L1180.0 681.3L1180.2 682.3L1180.3 683.3L1180.5 684.3L1180.7 685.3L1180.9 686.3L1181.0 687.3L1181.2 688.2L1181.4 689.2L1181.6 690.2L1181.7 691.2L1181.9 692.2L1182.1 693.2L1182.3 694.1L1182.4 695.1L1182.6 696.1L1182.8 697.1L1183.0 698.1L1183.1 699.1L1183.3 700.0L1183.5 701.0L1183.7 702.0L1183.9 703.0L1184.0 704.0L1184.2 705.0L1184.4 705.9L1184.6 706.9L1184.8 707.9L1184.9 708.9L1185.1 709.9L1185.3 710.9L1185.5 711.8L1185.7 712.8L1185.8 713.8L1186.0 714.8L1186.2 715.8L1186.4 716.8L1186.6 717.7L1186.8 718.7L1187.0 719.7L1187.1 720.7L1187.3 721.7L1187.5 722.7L1187.7 723.6L1187.9 724.6L1188.1 725.6L1188.3 726.6L1188.4 727.6L1188.6 728.5L1188.8 729.5L1189.0 730.5L1189.2 731.5L1189.4 732.5L1189.6 733.5L1189.8 734.4L1190.0 735.4L1190.2 736.4L1190.3 737.4L1190.5 738.4L1190.7 739.3L1190.9 740.3L1191.1 741.3L1191.3 742.3L1191.5 743.3L1191.7 744.2L1191.9 745.2L1192.1 746.2L1192.3 747.2L1192.5 748.2L1192.7 749.1L1192.9 750.1L1193.1 751.1L1193.2 752.1L1193.4 753.1L1193.6 754.0L1193.8 755.0L1194.0 756.0L1194.2 757.0L1194.4 758.0L1194.6 758.9L1194.8 759.9L1195.0 760.9L1195.2 761.9L1195.4 762.9L1195.6 763.8L1195.8 764.8L1196.0 765.8L1196.2 766.8L1196.4 767.8L1196.6 768.7L1196.8 769.7L1197.0 770.7L1197.2 771.7L1197.4 772.7L1197.6 773.6L1197.8 774.6L1198.1 775.6L1198.3 776.6L1198.5 777.6L1198.7 778.5L1198.9 779.5L1199.1 780.5L1199.3 781.5L1199.5 782.4L1199.7 783.4L1199.9 784.4L1200.1 785.4L1200.3 786.4L1200.5 787.3L1200.7 788.3L1200.9 789.3L1201.2 790.3L1201.4 791.2L1201.6 792.2L1201.8 793.2L1202.0 794.2L1202.2 795.2L1202.4 796.1L1202.6 797.1L1202.8 798.1L1203.1 799.1L1203.3 800.0L1203.5 801.0L1203.7 802.0L1203.9 803.0L1204.1 803.9L1204.4 804.9L1204.6 805.9L1204.8 806.9L1205.0 807.8L1205.2 808.8L1205.5 809.8L1205.7 810.8L1205.9 811.7L1206.1 812.7L1206.4 813.7L1206.6 814.7L1206.8 815.6L1207.0 816.6L1207.3 817.6L1207.5 818.5L1207.7 819.5L1208.0 820.5L1208.2 821.5L1208.4 822.4L1208.7 823.4L1208.9 824.4L1209.2 825.3L1209.4 826.3L1209.7 827.3L1209.9 828.3L1210.1 829.2L1210.4 830.2L1210.6 831.2L1210.9 832.1L1211.1 833.1L1211.4 834.1L1211.7 835.0L1211.9 836.0L1212.2 837.0L1212.4 837.9L1212.7 838.9L1213.0 839.8L1213.2 840.8L1213.5 841.8L1213.8 842.7L1214.0 843.7L1214.3 844.7L1214.6 845.6L1214.9 846.6L1215.1 847.5L1215.4 848.5L1215.7 849.5L1216.0 850.4L1216.3 851.4L1216.6 852.3L1216.9 853.3L1217.1 854.2L1217.4 855.2L1217.7 856.2L1218.0 857.1L1218.3 858.1L1218.6 859.0L1219.0 860.0L1219.3 860.9L1219.6 861.9L1219.9 862.8L1220.2 863.8L1220.5 864.7L1220.8 865.7L1221.2 866.6L1221.5 867.6L1221.8 868.5L1222.1 869.5L1222.5 870.4L1222.8 871.4L1223.2 872.3L1223.5 873.2L1223.8 874.2L1224.2 875.1L1224.5 876.1L1224.9 877.0L1225.2 877.9L1225.6 878.9L1226.0 879.8L1226.3 880.8L1226.7 881.7L1227.1 882.6L1227.4 883.6L1227.8 884.5L1228.2 885.4L1228.6 886.4L1229.0 887.3L1229.3 888.2L1229.7 889.2L1230.1 890.1L1230.5 891.0L1230.9 892.0L1231.3 892.9L1231.7 893.8L1232.1 894.7L1232.6 895.7L1233.0 896.6L1233.4 897.5L1233.8 898.4L1234.2 899.4L1234.7 900.3L1235.1 901.2L1235.5 902.1L1236.0 903.0L1236.4 903.9L1236.9 904.9L1237.3 905.8L1237.8 906.7L1238.2 907.6L1238.7 908.5L1239.2 909.4L1239.6 910.3L1240.1 911.2L1240.6 912.1L1241.1 913.0L1241.6 913.8L1242.1 914.7L1242.6 915.6L1243.1 916.4L1243.7 917.3L1244.2 918.1L1244.7 918.9L1245.3 919.8L1245.9 920.6L1246.4 921.4L1247.0 922.2L1247.6 922.9L1248.2 923.7L1248.8 924.4L1249.4 925.2L1250.1 925.9L1250.7 926.6L1251.4 927.3L1252.0 928.0L1252.7 928.6L1253.4 929.3L1254.1 929.9L1254.9 930.5L1255.6 931.1L1256.3 931.7L1257.1 932.2L1257.9 932.8L1258.7 933.3L1259.5 933.8L1260.3 934.2L1261.1 934.7L1262.0 935.1L1262.8 935.5L1263.7 935.9L1264.6 936.3L1265.5 936.6L1266.4 937.0L1267.3 937.3L1268.3 937.6L1269.2 937.9L1270.1 938.2L1271.1 938.5L1272.0 938.8L1273.0 939.1L1273.9 939.4L1274.9 939.6L1275.9 939.9L1276.8 940.2L1277.8 940.5L1278.8 940.7L1279.7 941.0L1280.7 941.2L1281.7 941.5L1282.7 941.8L1283.6 942.0L1284.6 942.3L1285.6 942.6L1286.6 942.8L1287.5 943.1L1288.5 943.4L1289.5 943.6L1290.5 943.9L1291.4 944.2L1292.4 944.5L1293.4 944.8L1294.3 945.1L1295.3 945.4L1296.2 945.7L1297.2 946.0L1298.2 946.3L1299.1 946.6L1300.1 946.9L1301.0 947.3L1301.9 947.6L1302.9 948.0L1303.8 948.4L1304.7 948.7L1305.6 949.1L1306.5 949.5L1307.5 949.9L1308.4 950.4L1309.2 950.8L1310.1 951.3L1311.0 951.7L1311.9 952.2L1312.8 952.7L1313.6 953.2L1314.5 953.7L1315.3 954.2L1316.1 954.8L1317.0 955.3L1317.8 955.9L1318.6 956.4L1319.4 957.0L1320.3 957.6L1321.1 958.2L1321.9 958.8L1322.7 959.4L1323.4 960.1L1324.2 960.7L1325.0 961.4L1325.8 962.0L1326.6 962.7L1327.3 963.3L1328.1 964.0L1328.8 964.7L1329.6 965.3L1330.4 966.0L1331.1 966.7L1331.9 967.4L1332.6 968.1L1333.3 968.8L1334.1 969.5L1334.8 970.2L1335.6 970.9L1336.3 971.6L1337.0 972.3L1337.7 973.1L1338.5 973.8L1339.2 974.5L1339.9 975.2L1340.7 975.9L1341.4 976.6L1342.1 977.3L1342.8 978.0L1343.5 978.7L1344.3 979.4L1345.0 980.1L1345.7 980.8L1346.4 981.5L1347.2 982.2L1347.9 982.9L1348.6 983.6L1349.3 984.3L1350.1 984.9L1350.8 985.6L1351.5 986.2L1352.3 986.9L1353.0 987.5L1353.7 988.2L1354.5 988.8L1355.2 989.4L1355.9 990.0L1356.3 990.9L1356.8 991.9L1357.2 992.8L1357.6 993.7L1358.0 994.7L1358.5 995.6L1358.9 996.5L1359.3 997.5L1359.8 998.4L1360.2 999.3L1360.6 1000.3L1361.0 1001.2L1361.5 1002.1L1361.9 1003.1L1362.4 1004.0L1362.8 1004.9L1363.3 1005.8L1363.9 1006.6L1364.5 1007.4L1365.1 1008.2L1365.8 1008.9L1366.5 1009.7L1367.2 1010.4L1368.0 1011.1L1368.7 1011.9L1369.4 1012.6L1370.1 1013.3L1370.9 1014.0L1371.6 1014.8L1372.3 1015.5L1373.1 1016.1L1373.8 1016.8L1374.6 1017.3L1375.5 1017.8L1376.4 1018.2L1377.3 1018.4L1378.2 1018.6L1379.2 1018.8L1380.2 1018.9L1381.2 1019.0L1382.2 1019.1L1383.2 1019.2L1384.2 1019.3L1385.2 1019.4L1386.2 1019.5L1387.2 1019.5L1388.2 1019.6L1389.2 1019.6L1390.2 1019.7L1391.2 1019.7L1392.2 1019.7L1393.2 1019.7L1394.2 1019.7L1395.2 1019.7L1396.2 1019.7L1397.2 1019.7L1398.2 1019.7L1399.2 1019.7L1400.2 1019.7L1401.2 1019.7L1402.2 1019.7L1403.2 1019.7L1404.2 1019.7L1405.2 1019.7L1406.2 1019.7L1407.2 1019.7L1408.2 1019.7L1409.2 1019.7L1410.2 1019.7L1411.2 1019.7L1412.2 1019.7L1413.2 1019.7L1414.2 1019.7L1415.2 1019.7L1416.2 1019.7L1417.3 1019.7L1418.3 1019.7L1419.3 1019.7L1420.3 1019.7L1421.3 1019.7L1422.3 1019.7L1423.3 1019.7L1424.3 1019.7L1425.3 1019.7L1426.3 1019.7L1427.3 1019.7L1428.3 1019.7L1429.3 1019.7L1430.3 1019.7L1431.3 1019.7L1432.3 1019.7L1433.3 1019.7L1434.3 1019.7L1435.3 1019.7L1436.3 1019.7L1437.3 1019.7L1438.3 1019.7L1439.3 1019.7L1440.3 1019.7L1441.3 1019.7L1442.3 1019.7L1443.3 1019.7L1444.3 1019.7L1445.3 1019.7L1446.3 1019.7L1447.3 1019.7L1448.3 1019.7L1449.3 1019.7L1450.3 1019.7L1451.3 1019.7L1452.3 1019.7L1453.3 1019.7L1454.3 1019.7L1455.3 1019.7L1456.3 1019.7L1457.3 1019.7L1458.3 1019.7L1459.3 1019.7L1460.3 1019.7L1461.3 1019.7L1462.3 1019.7L1463.3 1019.7L1464.3 1019.7L1465.3 1019.7L1466.3 1019.7L1467.3 1019.7L1468.3 1019.7L1469.3 1019.7L1470.3 1019.7L1471.3 1019.7L1472.3 1019.7L1473.4 1019.7L1474.4 1019.7L1475.4 1019.7L1476.4 1019.7L1477.4 1019.7L1478.4 1019.7L1479.4 1019.7L1480.4 1019.7L1481.4 1019.7L1482.4 1019.7L1483.4 1019.7L1484.4 1019.7L1485.4 1019.7L1486.4 1019.7L1487.4 1019.7L1488.4 1019.7L1489.4 1019.7L1490.4 1019.7L1491.4 1019.7L1492.4 1019.7L1493.4 1019.7L1494.4 1019.7L1495.4 1019.7L1496.4 1019.7L1497.4 1019.7L1498.4 1019.7L1499.4 1019.7L1500.4 1019.7L1501.4 1019.7L1502.4 1019.7L1503.4 1019.7L1504.4 1019.7L1505.4 1019.7L1506.4 1019.7L1507.4 1019.7L1508.4 1019.7L1509.4 1019.7L1510.4 1019.7L1511.4 1019.7L1512.4 1019.7L1513.4 1019.7L1514.4 1019.7L1515.4 1019.7L1516.4 1019.7L1517.4 1019.7L1518.4 1019.7L1519.4 1019.7L1520.4 1019.7L1521.4 1019.7L1522.4 1019.7L1523.4 1019.7L1524.4 1019.7L1525.4 1019.7L1526.4 1019.7L1527.4 1019.7L1528.4 1019.7L1529.4 1019.7L1530.5 1019.7L1531.5 1019.7L1532.5 1019.7L1533.5 1019.7L1534.5 1019.7L1535.5 1019.7L1536.5 1019.7L1537.5 1019.7L1538.5 1019.7L1539.5 1019.7L1540.5 1019.7L1541.5 1019.7L1542.5 1019.7L1543.5 1019.7L1544.5 1019.7L1545.5 1019.7L1546.5 1019.7L1547.5 1019.7L1548.5 1019.7L1549.5 1019.7L1550.5 1019.7L1551.5 1019.7L1552.5 1019.7L1553.5 1019.7L1554.5 1019.7L1555.5 1019.7L1556.5 1019.7L1557.5 1019.7L1558.5 1019.7" stroke="#ff0000" stroke-width="1.1" fill="none"/><path d="M427.5 658.4L428.5 658.3L429.5 658.8L430.5 658.2L431.5 658.6L432.5 658.5L433.5 658.2L434.5 658.6L435.5 658.1L436.5 658.5L437.5 658.2L438.5 658.2L439.5 658.5L440.5 658.9L441.4 658.2L442.4 658.3L443.4 658.7L444.4 659.0L445.4 658.7L446.4 658.5L447.4 659.1L448.4 658.1L449.4 659.0L450.4 658.4L451.4 658.2L452.4 658.2L453.4 658.4L454.4 658.9L455.4 658.3L456.4 658.7L457.4 658.7L458.4 658.5L459.4 658.6L460.4 658.2L461.4 658.2L462.4 658.3L463.4 658.8L464.4 658.5L465.4 658.4L466.4 658.7L467.4 658.6L468.3 658.4L469.3 658.9L470.3 658.8L471.3 658.3L472.3 658.7L473.3 658.6L474.3 659.0L475.3 658.8L476.3 658.4L477.3 659.1L478.3 658.2L479.3 658.5L480.3 658.9L481.3 658.3L482.3 658.6L483.3 658.1L484.3 658.8L485.3 658.9L486.3 658.7L487.3 659.0L488.3 658.4L489.3 658.8L490.3 658.7L491.3 658.7L492.3 658.6L493.3 658.9L494.3 659.0L495.3 658.6L496.2 658.8L497.2 658.2L498.2 658.8L499.2 658.7L500.2 659.1L501.2 658.9L502.2 658.4L503.2 658.5L504.2 658.8L505.2 658.1L506.2 658.6L507.2 658.3L508.2 658.2L509.2 658.2L510.2 658.9L511.2 658.2L512.2 658.3L513.2 658.5L514.2 659.0L515.2 658.2L516.2 658.5L517.2 658.6L518.2 659.0L519.2 658.9L520.2 659.0L521.2 658.4L522.2 658.5L523.1 658.5L524.1 659.0L525.1 659.1L526.1 658.3L527.1 658.3L528.1 658.3L529.1 658.3L530.1 658.6L531.1 658.7L532.1 658.4L533.1 658.1L534.1 658.5L535.1 658.5L536.1 658.7L537.1 659.1L538.1 658.8L539.1 658.6L540.1 658.7L541.1 658.8L542.1 658.2L543.1 659.0L544.1 658.9L545.1 659.0L546.1 658.9L547.1 658.5L548.1 658.5L549.1 658.2L550.0 658.7L551.0 658.2L552.0 658.2L553.0 658.3L554.0 658.3L555.0 658.4L556.0 658.2L557.0 658.1L558.0 658.3L559.0 658.2L560.0 658.5L561.0 658.1L562.0 659.0L563.0 658.7M571.0 268.6L571.5 269.8M583.0 666.6L583.5 667.3L584.2 667.4L585.0 668.3L586.0 668.5L587.0 667.8L587.9 667.7L588.8 666.9L589.7 666.4L590.6 666.1L591.4 665.5L592.3 665.5L593.2 664.3L594.1 663.7L595.0 664.2L596.0 663.4L597.0 662.7L598.0 662.8L599.0 662.0L600.0 662.2L601.0 662.4L602.0 661.9L602.9 661.4L603.7 660.4L604.4 659.9L604.9 658.9L605.4 658.7L605.8 657.6L606.3 657.0L606.8 655.8L607.2 654.8L607.7 654.5L608.2 653.9L608.6 652.9L609.1 652.0L609.5 651.1L609.9 650.2M616.5 623.8L616.9 623.3L617.4 622.7L618.0 622.3L618.8 622.6L619.6 623.3L620.5 623.8L621.4 624.7L622.3 625.4L623.2 625.4L624.1 626.3L625.0 626.8L626.0 627.1L627.0 626.9L628.0 627.0L628.9 627.1L629.7 627.0L630.3 626.5L630.9 626.2L631.4 625.7L631.8 624.7L632.3 623.4L632.7 622.7L633.2 621.9L633.6 620.3L634.1 620.0L634.7 619.5L635.3 618.9L636.1 618.5L637.0 618.2L638.0 618.0L639.0 618.7L640.0 618.3L641.0 618.8L642.0 619.1L643.0 618.6L644.0 618.7L645.0 619.4L646.0 619.2L647.0 618.7L648.0 618.8L649.0 618.9L650.0 619.7L651.0 619.7L652.0 619.1L653.0 619.8L654.0 620.1L655.0 619.8L656.0 619.6L657.0 619.8L658.0 619.5L659.0 619.5L660.0 620.5L661.0 620.3L662.0 620.3L663.0 620.9L664.0 620.5L665.0 621.1L666.0 621.2L667.0 620.8L668.0 621.0L669.0 621.1L670.0 621.2L671.0 621.7L672.0 621.6L673.0 621.9L674.0 621.7L675.0 622.7L676.0 622.3L677.0 622.5L678.0 622.8L679.0 623.3L680.0 622.9L681.0 623.6L681.9 623.4L682.9 623.6L683.8 623.8L684.8 623.5L685.8 624.1L686.7 624.1L687.7 624.1L688.6 625.1L689.6 624.7L690.6 625.2L691.5 625.6L692.5 625.7L693.4 625.6L694.4 626.0L695.4 626.3L696.3 626.7L697.3 626.2L698.2 626.9L699.2 626.7L700.2 627.0L701.1 627.7L702.1 627.6L703.0 627.8L704.0 628.2L705.0 628.4L706.0 628.1L707.0 628.3L708.0 628.3L709.0 628.3L710.0 628.6L711.0 628.4L712.0 628.5L713.0 628.5L714.0 629.1L715.0 628.9L716.0 629.1L717.0 629.3L718.0 628.6L719.0 629.0L720.0 629.5L721.0 629.5L722.0 629.0L723.0 629.2L723.9 629.7L724.9 629.5L725.9 629.8L726.9 629.8L727.9 630.6L728.9 630.9L729.8 631.2L730.8 630.7L731.8 631.4L732.8 631.5L733.8 631.2L734.8 632.1L735.8 632.4L736.7 631.8L737.7 632.7L738.7 632.4L739.7 632.6L740.7 633.3L741.7 633.3L742.7 632.8L743.6 633.3L744.6 633.6L745.6 633.6L746.6 633.6L747.6 633.9L748.6 634.5L749.5 634.0L750.5 634.7L751.5 634.8L752.5 634.5L753.5 635.0L754.5 635.4L755.5 635.4L756.5 635.1L757.4 636.2L758.4 636.2L759.4 636.5L760.4 635.8L761.4 636.1L762.4 636.0L763.4 636.9L764.4 636.5L765.4 636.5L766.4 637.0L767.3 637.6L768.3 637.7L769.3 637.2L770.3 637.3L771.3 638.2L772.3 638.0L773.3 638.3L774.3 637.8L775.3 637.9L776.2 638.7L777.2 638.6L778.2 638.4L779.2 639.4L780.2 639.2L781.2 639.5L782.2 639.0L783.2 639.9L784.2 639.2L785.2 640.2L786.1 639.9L787.1 639.9L788.1 640.3L789.1 640.8L790.1 640.3L791.1 640.3L792.1 640.9L793.1 640.7L794.1 640.7L795.1 640.9L796.0 641.0L797.0 641.3L798.0 641.5L799.0 641.6L800.0 642.2L801.0 641.9L802.0 642.2L803.0 641.9L804.0 642.2L805.0 641.9L806.0 642.3L807.0 642.1L808.0 642.9L809.0 642.8L810.0 642.5L811.0 642.9L812.0 643.5L813.0 642.7L814.0 643.5L815.0 643.2L816.0 643.4L817.0 643.8L818.0 643.4L819.0 643.6L820.0 643.9L821.0 644.3L822.0 643.7L823.0 644.3L824.0 644.2L825.0 644.3L826.0 644.1L827.0 644.1L828.0 643.9L829.0 644.1L830.0 644.1L831.0 644.9L832.0 644.5L833.0 644.5L834.0 644.5L835.0 645.3L836.0 645.4L837.0 645.3L838.0 645.0L839.0 645.1L840.0 645.2L841.0 645.4L842.0 645.2L843.0 645.6L844.0 645.5L845.0 646.3L846.0 646.4L847.0 646.0L848.0 645.8L849.0 646.6L850.0 646.1L851.0 646.2L852.0 646.0L853.0 646.4L854.0 646.6L855.0 646.8L856.0 646.6L857.0 647.0L858.0 646.6L859.0 646.9L860.0 646.8L861.0 647.2L862.0 647.0L863.0 647.1L864.0 647.5L865.0 647.5L866.0 647.9L867.0 648.0L868.0 648.3L869.0 648.3L870.0 648.5L871.0 648.7L872.0 648.3L873.0 648.4L874.0 649.1L875.0 648.4L876.0 649.1L877.0 649.1L878.0 648.6L879.0 649.5L880.0 649.6L881.0 649.5L882.0 649.7L883.0 649.9L884.0 649.3L885.0 649.8L886.0 649.9L887.0 650.3L888.0 650.4L889.0 650.5L890.0 650.3L891.0 650.7L892.0 650.6L893.0 650.7L894.0 650.4L895.0 650.3L896.0 650.5L897.0 650.8L898.0 650.7L899.0 651.5L900.0 651.3L901.0 651.4L902.0 651.5L903.0 651.6L904.0 651.5L905.0 651.1L906.0 651.9L907.0 652.0L908.0 651.8L909.0 651.9L910.0 652.1L911.0 651.5L912.0 652.3L913.0 651.8L914.0 651.7L915.0 652.0L916.0 652.5L917.0 652.1L918.0 652.7L919.0 653.0L920.0 652.5L921.0 652.5L922.0 652.7L923.0 652.9L924.0 653.1L925.0 653.0L926.0 653.1L927.0 652.6L928.0 652.7L929.0 652.9L930.0 653.4L931.0 653.1L932.0 653.4L933.0 652.9L934.0 653.0L935.0 653.3L936.0 653.8L937.0 653.8L938.0 653.9L939.0 653.6L940.0 653.9L941.0 653.9L942.0 653.9L943.0 653.7L944.0 654.5L945.0 653.9L946.0 654.7L947.0 654.7L948.0 653.9L949.0 654.4L950.0 654.8L951.0 655.0L952.0 654.5L953.0 654.4L954.0 654.3L955.0 655.1L956.0 654.4L957.0 654.8L958.0 654.4L959.0 654.8L960.0 655.3L961.0 654.5L962.0 655.2L963.0 655.0L964.0 655.4L965.0 655.2L966.0 654.8L967.0 655.5L968.0 655.1L969.0 654.7L970.0 654.7L971.0 655.2L972.0 655.2L973.0 655.1L974.0 655.0L975.0 655.2L976.0 655.2L977.0 655.8L978.0 655.0L979.0 655.8L980.0 655.9L981.0 655.2L982.0 656.0L983.0 655.9L984.0 656.1L985.0 655.5L986.0 655.6L987.0 655.7L988.0 656.3L989.0 656.0L990.0 655.8L991.0 655.9L992.0 655.7L993.0 655.6L994.0 655.6L995.0 656.4L996.0 655.9L997.0 656.6L998.0 655.9L999.0 656.0L1000.0 656.3L1001.0 656.0L1002.0 656.2L1003.0 656.8L1004.0 656.7L1005.0 656.7L1006.0 656.5L1007.0 656.8L1008.0 656.9L1009.0 656.5L1010.0 656.7L1011.0 656.1L1012.0 656.8L1013.0 656.5L1014.0 656.9L1015.0 656.8L1016.0 656.4L1017.0 656.2L1018.0 657.1L1019.0 656.4L1020.0 656.7L1021.0 656.6L1022.0 656.6L1023.0 657.1L1024.0 657.3L1025.0 656.6L1026.0 657.1L1027.0 656.7L1028.0 657.0L1029.0 656.9L1030.0 656.7L1031.0 656.7L1032.0 656.8L1033.0 657.5L1034.0 657.1L1035.0 656.8L1036.0 657.6L1037.0 657.7L1038.0 657.1L1039.0 656.9L1040.0 656.9L1041.0 656.9L1042.0 657.1L1043.0 656.9L1044.0 657.1L1045.0 657.1L1046.0 657.5L1047.0 657.8L1048.0 657.7L1049.0 657.4L1050.0 657.4L1051.0 657.5L1052.0 657.4L1053.0 657.4L1054.0 657.1L1055.0 657.4L1056.0 658.1L1057.0 657.2L1058.0 657.6L1059.0 657.8L1060.0 658.0L1061.0 657.4L1062.0 657.5L1063.0 657.4L1064.0 657.6L1065.0 657.7L1066.0 658.2L1067.0 658.1L1068.0 658.1L1069.0 657.3L1070.0 657.3L1071.0 658.0L1072.0 658.2L1073.0 657.8L1074.0 657.9L1075.0 657.4L1076.0 657.8L1077.0 658.3L1078.0 658.2L1079.0 658.3L1080.0 658.4L1081.0 657.7L1082.0 657.6L1083.0 657.6L1084.0 658.0L1085.0 658.2L1086.0 658.5L1087.0 658.3L1088.0 658.2L1089.0 658.3L1090.0 658.1L1091.0 658.2L1092.0 657.7L1093.0 658.4L1094.0 657.9L1095.0 658.6L1096.0 658.3L1097.0 658.0L1098.0 657.8L1099.0 658.0L1100.0 658.4L1101.0 658.5L1102.0 657.9L1103.0 657.9L1104.0 658.4L1105.0 658.4L1106.0 658.3L1107.0 658.1L1108.0 658.5L1109.0 658.0L1110.0 658.3L1111.0 658.5L1112.0 659.0L1113.0 658.7L1114.0 659.0L1115.0 658.6L1116.0 658.3L1117.0 658.4L1118.0 659.1L1119.0 658.9L1120.0 658.5L1121.0 658.2L1122.0 658.7L1123.0 658.9L1124.0 658.7L1125.0 658.6L1126.0 659.0L1127.0 659.3L1128.0 658.6L1129.0 658.4L1130.0 658.8L1131.0 658.9L1132.0 659.2L1133.0 658.7M1155.2 763.7L1155.6 762.7L1156.0 761.7L1156.5 760.5L1157.0 760.5L1157.5 759.0L1158.0 758.6L1158.5 757.2L1159.0 756.4L1159.5 756.1L1160.0 754.8L1160.5 754.6L1161.0 753.4L1161.5 752.2L1162.1 751.5L1162.7 750.8L1163.3 750.3L1164.0 749.8L1164.7 748.2L1165.3 747.7L1166.0 746.7L1166.7 746.7L1167.3 745.1L1168.0 744.2L1168.7 743.5L1169.3 743.0L1170.0 742.7L1170.7 741.9L1171.3 741.0L1172.0 740.5L1172.7 739.7L1173.4 738.4L1174.1 737.6L1174.8 737.6L1175.5 736.7L1176.2 735.3L1176.9 735.3L1177.6 734.3L1178.3 733.6L1179.0 732.8L1179.7 732.0L1180.4 731.1L1181.1 730.7L1181.8 730.1L1182.5 730.0L1183.2 728.4L1183.9 728.6L1184.6 727.1L1185.3 726.5L1186.0 726.3L1186.6 725.5L1187.2 724.4L1187.8 723.2L1188.5 722.9L1189.1 722.0L1189.7 721.8L1190.3 720.3L1190.9 719.7L1191.5 719.5L1192.2 717.8L1192.8 717.5L1193.4 717.1L1194.1 716.4L1194.8 715.0L1195.5 714.3L1196.3 713.7L1197.0 713.9L1197.8 712.7L1198.6 712.5L1199.3 712.1L1200.1 710.9L1200.9 710.2L1201.6 710.3L1202.4 709.3L1203.1 708.3L1203.9 708.2L1204.7 707.1L1205.4 706.5L1206.2 705.6L1207.0 705.7L1207.7 705.3L1208.5 704.4L1209.3 704.1L1210.0 702.5L1210.9 702.2L1211.7 701.8L1212.5 701.7L1213.4 701.1L1214.2 700.0L1215.1 699.3L1215.9 698.9L1216.7 698.4L1217.6 698.2L1218.4 696.9L1219.3 696.9L1220.1 696.3L1220.9 695.8L1221.8 695.2L1222.6 694.4L1223.5 693.6L1224.3 693.0L1225.1 692.4L1225.9 692.2L1226.7 690.9L1227.4 690.3L1228.1 690.2L1228.8 688.9L1229.5 688.1L1230.2 687.3L1230.9 687.2L1231.6 686.2L1232.3 686.2L1233.0 685.4L1233.7 684.8L1234.4 683.4L1235.1 682.5L1235.8 681.8L1236.5 681.5L1237.2 681.0L1237.9 680.0L1238.6 679.1L1239.3 678.7L1240.1 678.2L1240.9 677.7L1241.7 677.2L1242.5 676.8L1243.4 676.1L1244.2 675.0L1245.1 675.2L1245.9 674.1L1246.7 673.9L1247.6 673.1L1248.4 673.0L1249.3 671.9L1250.1 671.4L1250.9 670.9L1251.8 670.3L1252.6 670.5L1253.5 669.7L1254.3 668.9L1255.1 668.4L1255.9 668.4L1256.7 667.3L1257.5 666.4L1258.2 666.3L1259.0 665.5L1259.8 665.2L1260.5 663.6L1261.2 663.3L1262.0 663.0L1262.8 662.3L1263.5 661.8L1264.3 660.4L1265.1 660.3L1266.1 660.0L1267.0 660.2L1268.0 661.1L1269.0 661.0L1270.0 661.5L1271.0 661.2L1272.0 661.9L1273.0 661.7L1274.0 661.7L1275.0 662.4L1276.0 662.7L1277.0 661.9L1278.0 662.5L1279.0 662.7L1280.0 662.4L1281.0 662.6L1282.0 662.5L1283.0 662.7L1284.0 662.9L1285.0 663.3L1286.0 663.5L1287.0 663.1L1288.0 663.1L1289.0 663.5L1290.0 664.0L1291.0 663.6L1292.0 663.8L1293.0 663.7L1294.0 664.4L1295.0 664.2L1296.0 663.8L1297.0 663.9L1298.0 664.2L1299.0 664.4L1300.0 664.5L1301.0 664.0L1302.0 664.2L1303.0 664.7L1304.0 664.5L1305.0 664.4L1306.0 664.5L1307.0 665.2L1308.0 664.6L1309.0 664.9L1310.0 664.8L1311.0 664.9L1312.0 665.4L1313.0 665.7L1314.0 665.3L1315.0 665.3L1316.0 666.0L1317.0 665.7L1318.0 665.7L1319.0 666.7L1320.0 666.5L1321.0 667.1L1322.0 666.8L1323.0 667.5L1324.0 667.3L1325.0 667.1L1326.0 667.1L1327.0 667.8L1328.0 668.0L1329.0 668.4L1330.0 667.7L1331.0 668.4L1332.0 668.2L1333.0 668.5L1334.0 668.3L1335.0 668.5L1336.0 668.9L1337.0 669.4L1338.0 668.7L1339.0 669.2L1340.0 669.7L1341.0 670.0L1342.0 669.3L1343.0 669.4L1344.0 670.3L1345.0 670.4L1345.9 669.9L1346.9 669.4L1347.8 670.2L1348.7 669.6L1349.7 670.1L1350.6 669.8L1351.4 670.1L1352.2 669.7L1352.7 671.0L1353.1 671.2M1359.2 688.7L1359.7 688.2L1360.1 687.2L1360.6 685.7L1361.0 684.8L1361.4 684.0L1361.9 683.2L1362.3 682.2L1362.7 681.0L1363.2 680.2L1363.6 679.8L1364.0 679.0L1364.5 677.2L1364.9 676.8L1365.3 676.1L1365.8 674.5L1366.2 674.4L1366.6 672.7L1367.1 672.3L1367.6 671.4L1368.2 670.6L1368.8 669.4L1369.4 668.7L1370.0 668.0L1370.6 667.0L1371.3 666.4L1371.9 665.4L1372.5 664.5L1373.1 663.3L1373.8 663.1L1374.5 662.2L1375.2 661.3L1376.1 661.4L1377.0 661.1L1378.0 660.5L1379.0 659.9L1380.0 660.0L1381.0 659.4L1382.0 659.1L1383.0 659.2L1384.0 658.6L1385.0 658.8L1386.0 658.8L1387.0 658.3L1388.0 658.9L1389.0 658.3L1390.0 659.0L1391.0 659.0L1392.0 658.8L1393.0 658.3L1394.0 658.8L1395.0 658.6L1396.0 659.2L1397.0 658.4L1398.0 659.1L1399.0 659.2L1400.0 659.0L1401.0 659.1L1402.0 658.4L1402.9 659.2L1403.9 658.7L1404.9 659.2L1405.9 659.2L1406.9 658.4L1407.9 659.0L1408.9 659.2L1409.9 658.3L1410.9 658.6L1411.9 659.0L1412.9 658.4L1413.9 659.1L1414.9 658.5L1415.9 659.1L1416.9 658.4L1417.9 658.8L1418.9 659.2L1419.9 658.5L1420.9 658.5L1421.9 658.8L1422.9 658.6L1423.9 658.3L1424.9 658.4L1425.9 658.4L1426.9 659.2L1427.9 658.9L1428.9 659.1L1429.9 658.4L1430.9 659.0L1431.9 658.4L1432.9 658.8L1433.9 658.9L1434.9 658.6L1435.9 659.1L1436.9 658.8L1437.8 658.8L1438.8 659.1L1439.8 658.4L1440.8 659.2L1441.8 658.9L1442.8 658.6L1443.8 659.0L1444.8 658.5L1445.8 659.2L1446.8 658.8L1447.8 658.6L1448.8 659.0L1449.8 658.7L1450.8 658.4L1451.8 659.0L1452.8 658.3L1453.8 659.1L1454.8 658.5L1455.8 658.9L1456.8 659.2L1457.8 658.8L1458.8 658.9L1459.8 658.6L1460.8 658.3L1461.8 658.3L1462.8 658.4L1463.8 658.9L1464.8 658.7L1465.8 658.8L1466.8 659.1L1467.8 658.4L1468.8 658.5L1469.8 658.9L1470.8 658.3L1471.8 658.3L1472.7 658.6L1473.7 658.4L1474.7 658.6L1475.7 658.5L1476.7 658.8L1477.7 658.8L1478.7 658.5L1479.7 658.9L1480.7 658.7L1481.7 658.4L1482.7 659.2L1483.7 658.5L1484.7 658.4L1485.7 658.3L1486.7 658.9L1487.7 659.1L1488.7 659.0L1489.7 658.7L1490.7 658.5L1491.7 658.3L1492.7 658.9L1493.7 658.8L1494.7 658.6L1495.7 658.9L1496.7 658.7L1497.7 659.2L1498.7 659.0L1499.7 658.5L1500.7 659.2L1501.7 658.3L1502.7 658.8L1503.7 658.7L1504.7 658.5L1505.7 658.3L1506.6 659.0L1507.6 658.3L1508.6 658.8L1509.6 659.2L1510.6 658.4L1511.6 658.4L1512.6 658.9L1513.6 658.8L1514.6 658.9L1515.6 659.1L1516.6 658.4L1517.6 658.6L1518.6 658.6L1519.6 658.3L1520.6 659.1L1521.6 659.0L1522.6 659.0L1523.6 658.3L1524.6 659.1L1525.6 659.0L1526.6 658.7L1527.6 659.0L1528.6 658.7L1529.6 658.5L1530.6 658.4L1531.6 658.5L1532.6 658.3L1533.6 658.6L1534.6 659.0L1535.6 658.9L1536.6 659.1L1537.6 659.0L1538.6 658.5L1539.6 658.8L1540.6 658.7L1541.5 659.0L1542.5 658.8L1543.5 658.5L1544.5 658.9L1545.5 659.2L1546.5 658.5L1547.5 659.1L1548.5 658.3L1549.5 658.5L1550.5 658.5L1551.5 659.0L1552.5 659.2L1553.5 659.0L1554.5 658.6L1555.5 659.1L1556.5 658.6L1557.5 658.5L1558.5 659.2" stroke="#ff0000" stroke-width="1" stroke-opacity="0.6" fill="none"/><path d="M563.0 658.7L563.0 657.7L563.1 656.7L563.1 655.9L563.2 654.6L563.2 653.8L563.2 652.8L563.3 651.9L563.3 650.7L563.4 649.9L563.4 648.8L563.4 647.7L563.5 646.6L563.5 645.9L563.6 644.6L563.6 644.0L563.6 642.7L563.7 641.6L563.7 640.7L563.8 640.1L563.8 638.8L563.8 637.8L563.9 636.7L563.9 635.7L564.0 635.1L564.1 634.1L564.2 633.1L564.4 632.1L564.6 630.8L564.8 630.0L565.0 628.9L565.2 628.2L565.4 627.2L565.6 626.2L565.8 624.8L565.9 624.2L566.0 623.2L566.0 622.2L566.0 620.8L566.0 619.9L566.0 618.8L566.0 617.8L566.0 617.2L566.0 616.2L566.1 615.1L566.1 614.2L566.1 613.1L566.1 611.9L566.1 610.8L566.1 609.8L566.1 609.1L566.1 607.9L566.1 606.9L566.1 606.0L566.1 604.8L566.1 603.9L566.1 602.9L566.1 602.1L566.1 600.9L566.1 599.9L566.2 599.2L566.2 598.0L566.2 597.2L566.2 596.1L566.2 594.8L566.2 594.0L566.2 593.0L566.2 592.1L566.2 590.9L566.2 590.1L566.2 589.0L566.2 587.9L566.2 587.2L566.2 585.8L566.2 585.2L566.2 583.8L566.2 582.8L566.3 581.9L566.3 581.1L566.3 580.2L566.3 578.8L566.3 578.0L566.3 577.0L566.3 576.1L566.3 574.8L566.3 574.0L566.3 572.9L566.3 572.2L566.3 570.9L566.3 570.2L566.3 568.9L566.3 567.9L566.3 567.1L566.4 566.0L566.4 564.8L566.4 564.1L566.4 562.8L566.4 562.1L566.4 561.1L566.4 560.1L566.4 559.1L566.4 557.9L566.4 557.0L566.4 555.9L566.4 555.2L566.4 553.8L566.4 553.2L566.4 551.8L566.4 550.9L566.5 549.9L566.5 549.2L566.5 548.0L566.5 546.9L566.5 546.2L566.5 544.9L566.5 544.0L566.5 543.0L566.5 542.1L566.5 541.1L566.5 540.1L566.5 538.9L566.5 537.9L566.5 536.8L566.5 536.2L566.5 535.1L566.5 534.1L566.6 532.8L566.6 532.0L566.6 531.1L566.6 530.0L566.6 528.8L566.6 528.0L566.6 527.2L566.6 525.9L566.6 524.8L566.6 523.9L566.6 523.1L566.6 522.2L566.6 520.8L566.6 519.8L566.6 518.9L566.6 517.9L566.7 517.0L566.7 515.8L566.7 514.9L566.7 513.8L566.7 513.2L566.7 512.1L566.7 510.8L566.7 510.2L566.7 508.8L566.7 507.9L566.7 507.2L566.7 506.1L566.7 505.1L566.7 504.0L566.7 502.8L566.7 502.1L566.8 500.8L566.8 499.9L566.8 498.9L566.8 497.8L566.8 496.9L566.8 496.1L566.8 495.1L566.8 494.0L566.8 493.1L566.8 492.0L566.8 490.8L566.8 490.1L566.8 489.0L566.8 488.1L566.8 487.2L566.8 486.0L566.8 485.0L566.9 484.1L566.9 483.0L566.9 481.9L566.9 481.1L566.9 480.2L566.9 479.1L566.9 478.1L566.9 477.2L566.9 476.1L566.9 475.1L566.9 474.0L566.9 472.9L566.9 472.1L566.9 470.8L566.9 470.0L566.9 469.1L567.0 468.1L567.0 467.1L567.0 465.9L567.0 465.0L567.0 464.0L567.0 463.1L567.0 462.0L567.0 461.1L567.0 460.2L567.0 458.8L567.0 458.1L567.1 457.1L567.1 455.9L567.1 455.0L567.1 454.2L567.1 452.8L567.2 452.0L567.2 450.8L567.2 450.1L567.2 449.2L567.3 448.0L567.3 446.8L567.3 446.0L567.3 445.0L567.3 444.1L567.4 443.0L567.4 442.1L567.4 441.2L567.4 440.0L567.4 439.0L567.5 438.2L567.5 436.9L567.5 436.1L567.5 434.9L567.5 434.1L567.6 432.8L567.6 432.2L567.6 430.9L567.6 429.8L567.6 428.9L567.7 427.9L567.7 426.8L567.7 426.0L567.7 425.0L567.8 424.1L567.8 422.9L567.8 421.9L567.8 420.9L567.8 420.1L567.9 419.2L567.9 418.0L567.9 416.9L567.9 416.2L567.9 414.9L568.0 413.9L568.0 412.8L568.0 412.1L568.0 411.2L568.0 410.1L568.1 409.0L568.1 408.0L568.1 406.9L568.1 406.2L568.2 404.9L568.2 404.1L568.2 403.2L568.2 402.2L568.2 401.0L568.3 399.9L568.3 399.0L568.3 397.8L568.3 397.2L568.3 395.9L568.4 395.2L568.4 393.9L568.4 392.9L568.4 391.9L568.4 391.0L568.5 389.8L568.5 388.8L568.5 388.1L568.5 386.9L568.5 385.9L568.6 384.9L568.6 384.0L568.6 383.0L568.6 382.1L568.7 381.1L568.7 379.9L568.7 379.2L568.7 378.2L568.7 376.8L568.8 376.2L568.8 375.2L568.8 374.1L568.8 372.8L568.8 372.2L568.9 371.1L568.9 369.8L568.9 368.8L568.9 368.2L568.9 367.1L569.0 365.9L569.0 364.8L569.0 363.8L569.0 362.9L569.1 362.1L569.1 360.9L569.1 359.8L569.1 359.2L569.1 358.1L569.2 356.8L569.2 356.2L569.2 355.1L569.2 354.1L569.2 353.1L569.3 352.2L569.3 351.1L569.3 350.2L569.3 348.8L569.3 348.1L569.4 347.0L569.4 346.1L569.4 345.0L569.4 344.2L569.5 343.0L569.5 341.9L569.5 340.9L569.5 339.8L569.5 339.0L569.6 337.8L569.6 337.0L569.6 335.8L569.6 335.0L569.6 334.0L569.7 333.0L569.7 332.2L569.7 330.8L569.7 330.2L569.7 329.0L569.8 328.0L569.8 327.1L569.8 326.2L569.8 324.9L569.8 324.0L569.9 323.2L569.9 321.8L569.9 321.1L569.9 320.1L570.0 318.8L570.0 318.1L570.0 317.1L570.0 316.2L570.0 314.9L570.1 314.2L570.1 313.0L570.1 312.0L570.1 311.2L570.1 309.8L570.2 309.1L570.2 308.1L570.2 306.9L570.2 306.2L570.2 304.9L570.3 304.0L570.3 303.0L570.3 302.1L570.3 300.9L570.4 300.0L570.4 299.0L570.4 298.0L570.4 297.2L570.4 295.9L570.5 295.2L570.5 294.0L570.5 293.0L570.5 291.9L570.5 291.0L570.6 290.2L570.6 289.1L570.6 288.1L570.6 286.9L570.6 285.9L570.7 284.9L570.7 284.0L570.7 283.1L570.7 282.1L570.7 280.8L570.8 280.1L570.8 279.2L570.8 278.0L570.8 276.8L570.9 275.9L570.9 274.8L570.9 273.8L570.9 273.2L570.9 272.1L571.0 271.1L571.0 270.1L571.0 269.2M571.5 270.1L571.8 271.1L572.0 272.1L572.0 273.1L572.0 274.0L572.0 275.1L572.1 275.9L572.1 277.1L572.1 278.0L572.1 279.1L572.1 279.8L572.1 280.8L572.1 281.8L572.1 283.1L572.1 284.2L572.1 285.1L572.1 285.9L572.1 287.2L572.2 288.1L572.2 289.0L572.2 289.9L572.2 290.9L572.2 292.0L572.2 292.9L572.2 294.0L572.2 295.1L572.2 296.2L572.2 296.8L572.2 298.0L572.2 298.8L572.3 299.8L572.3 301.2L572.3 302.0L572.3 303.2L572.3 304.0L572.3 304.8L572.3 305.9L572.3 307.0L572.3 308.2L572.3 309.2L572.3 310.0L572.3 311.0L572.4 311.8L572.4 313.1L572.4 313.9L572.4 314.8L572.4 315.8L572.4 316.8L572.4 318.1L572.4 318.8L572.4 320.2L572.4 320.8L572.4 322.2L572.4 322.8L572.5 323.8L572.5 325.1L572.5 325.9L572.5 327.1L572.5 327.8L572.5 328.8L572.5 330.1L572.5 331.1L572.5 332.2L572.5 333.1L572.5 333.8L572.5 335.1L572.6 336.1L572.6 337.0L572.6 338.2L572.6 338.9L572.6 340.2L572.6 341.1L572.6 341.8L572.6 342.8L572.6 344.1L572.6 345.2L572.6 345.8L572.6 346.9L572.7 348.1L572.7 348.8L572.7 350.2L572.7 351.0L572.7 351.8L572.7 352.9L572.7 354.0L572.7 355.0L572.7 356.1L572.7 356.8L572.7 358.1L572.7 358.9L572.8 360.1L572.8 361.1L572.8 362.0L572.8 362.9L572.8 364.1L572.8 365.2L572.8 366.1L572.8 367.0L572.8 367.9L572.8 368.8L572.8 370.2L572.9 371.1L572.9 372.2L572.9 372.9L572.9 374.1L572.9 375.2L572.9 376.2L572.9 377.1L572.9 377.9L572.9 379.0L572.9 380.2L572.9 380.9L572.9 382.1L573.0 383.1L573.0 384.2L573.0 385.2L573.0 385.9L573.0 386.8L573.0 387.9L573.0 389.0L573.0 390.0L573.0 391.2L573.0 392.2L573.0 392.8L573.0 394.2L573.1 395.2L573.1 396.2L573.1 397.0L573.1 397.9L573.1 399.2L573.1 400.2L573.1 401.1L573.1 402.2L573.1 402.9L573.1 403.8L573.1 405.0L573.1 406.1L573.2 406.9L573.2 408.1L573.2 409.2L573.2 409.9L573.2 411.1L573.2 412.1L573.2 413.0L573.2 413.9L573.2 414.9L573.2 416.1L573.2 417.1L573.2 418.0L573.3 418.8L573.3 420.2L573.3 421.1L573.3 421.9L573.3 423.0L573.3 424.2L573.3 425.2L573.3 426.0L573.3 427.0L573.3 428.0L573.3 428.8L573.3 429.8L573.4 430.8L573.4 432.1L573.4 432.9L573.4 434.0L573.4 435.0L573.4 436.0L573.4 436.8L573.4 437.8L573.4 439.2L573.4 439.9L573.4 440.8L573.4 442.1L573.5 443.1L573.5 443.8L573.5 445.0L573.5 445.9L573.5 447.0L573.5 447.8L573.5 448.8L573.5 450.2L573.5 451.2L573.5 452.0L573.5 453.0L573.5 453.9L573.6 455.1L573.6 456.0L573.6 457.2L573.6 458.1L573.6 459.2L573.6 460.2L573.6 460.9L573.6 461.8L573.7 462.9L573.7 463.8L573.7 464.8L573.7 465.8L573.7 467.0L573.7 468.2L573.8 469.0L573.8 470.2L573.8 471.2L573.8 471.8L573.8 473.0L573.8 473.9L573.9 474.8L573.9 476.2L573.9 476.9L573.9 478.0L573.9 479.1L574.0 480.2L574.0 481.1L574.0 481.9L574.0 483.0L574.0 483.8L574.0 485.2L574.1 486.2L574.1 486.9L574.1 487.8L574.1 488.9L574.1 489.9L574.1 491.2L574.2 492.2L574.2 493.2L574.2 493.8L574.2 495.1L574.2 496.1L574.2 497.1L574.3 498.2L574.3 498.8L574.3 499.8L574.3 501.1L574.3 502.2L574.4 503.1L574.4 503.9L574.4 505.0L574.4 506.1L574.4 506.8L574.4 507.9L574.5 508.9L574.5 509.8L574.5 511.0L574.5 511.8L574.5 512.9L574.5 513.8L574.6 515.1L574.6 515.8L574.6 517.1L574.6 517.8L574.6 518.8L574.6 520.2L574.7 520.9L574.7 522.2L574.7 523.2L574.7 524.2L574.7 524.8L574.8 526.0L574.8 526.8L574.8 528.2L574.8 529.2L574.8 530.1L574.8 531.0L574.9 531.9L574.9 533.2L574.9 534.0L574.9 535.1L574.9 535.8L574.9 536.9L575.0 537.8L575.0 539.1L575.0 540.0L575.0 540.8L575.1 542.2L575.1 542.9L575.1 544.0L575.2 544.8L575.2 545.9L575.2 547.2L575.3 547.9L575.3 548.8L575.3 550.0L575.4 550.9L575.4 552.2L575.4 552.8L575.5 554.2L575.5 554.8L575.5 556.2L575.6 557.1L575.6 557.9L575.6 559.0L575.7 559.9L575.7 560.9L575.7 561.9L575.8 562.9L575.8 564.2L575.8 565.2L575.9 566.2L575.9 566.8L575.9 567.9L576.0 569.2L576.0 569.8L576.0 571.1L576.1 571.9L576.1 573.2L576.1 573.8L576.2 575.2L576.2 575.9L576.2 576.8L576.3 577.8L576.3 579.2L576.3 580.0L576.4 580.8L576.4 582.0L576.4 583.2L576.5 583.9L576.5 585.0L576.5 585.8L576.6 586.8L576.6 588.1L576.6 589.1L576.7 589.8L576.7 590.8L576.7 591.8L576.8 593.1L576.8 594.0L576.8 594.9L576.9 595.9L576.9 597.1L576.9 598.1L577.0 599.2L577.0 600.0L577.1 600.9L577.1 601.8L577.2 603.1L577.2 604.0L577.2 605.1L577.3 605.8L577.3 607.2L577.4 607.9L577.5 609.2L577.5 610.2L577.5 611.0L577.6 611.8L577.7 613.2L577.7 614.0L577.8 615.2L577.8 615.9L577.9 616.8L577.9 618.2L578.0 618.9L578.0 619.8L578.0 620.9L578.1 622.0L578.1 622.8L578.2 624.0L578.3 625.0L578.3 626.0L578.4 626.8L578.4 628.1L578.5 629.2L578.5 630.2L578.5 630.9L578.6 632.1L578.6 632.9L578.7 634.1L578.8 634.8L578.8 636.2L578.9 637.2L578.9 638.0L579.0 639.0L579.1 640.0L579.2 641.0L579.3 641.8L579.4 643.2L579.6 643.9L579.7 644.8L579.9 645.8L580.0 646.9L580.1 648.2L580.3 648.8L580.4 649.8L580.6 651.1L580.7 651.8L580.9 652.8L581.0 654.0L581.1 655.0L581.3 656.0L581.4 657.1L581.6 657.8L581.7 659.2L581.9 660.1L582.0 660.8L582.1 661.8L582.3 663.0L582.4 664.0L582.6 664.9L582.8 665.8L583.0 666.7M609.9 649.7L610.2 649.0L610.5 648.2L610.7 646.8L611.0 646.0L611.3 645.1L611.5 643.8L611.7 643.2L612.0 642.2L612.2 640.9L612.5 640.0L612.8 639.2L613.0 638.0L613.2 636.9L613.5 636.2L613.8 635.1L614.0 633.9L614.2 632.9L614.5 631.9L614.8 631.0L615.0 630.2L615.2 629.2L615.5 628.2L615.8 627.2L616.0 626.2L616.3 624.8L616.5 624.1M1133.0 659.2L1133.3 660.2L1133.6 660.9L1133.8 662.0L1134.1 663.1L1134.2 663.9L1134.4 665.0L1134.4 665.8L1134.4 667.0L1134.5 668.0L1134.5 668.8L1134.5 669.8L1134.5 671.2L1134.5 672.1L1134.5 673.2L1134.6 674.1L1134.6 675.2L1134.6 676.2L1134.6 677.2L1134.6 677.8L1134.6 679.1L1134.7 679.9L1134.7 681.1L1134.7 681.9L1134.7 683.0L1134.7 684.2L1134.7 685.1L1134.7 685.9L1134.8 687.0L1134.8 688.0L1134.8 689.2L1134.8 689.9L1134.8 690.9L1134.8 692.1L1134.9 692.8L1134.9 694.0L1134.9 695.2L1134.9 696.0L1134.9 696.9L1134.9 698.0L1134.9 699.0L1135.0 699.8L1135.0 700.8L1135.0 701.8L1135.0 702.9L1135.0 704.0L1135.0 704.9L1135.1 705.9L1135.1 706.8L1135.1 708.0L1135.1 709.2L1135.1 710.1L1135.1 711.0L1135.2 712.1L1135.2 712.9L1135.2 714.1L1135.2 715.0L1135.2 716.0L1135.2 717.1L1135.2 718.0L1135.3 718.9L1135.3 719.9L1135.3 720.9L1135.3 722.0L1135.3 722.9L1135.3 724.0L1135.4 724.8L1135.4 725.9L1135.4 727.2L1135.4 727.9L1135.4 729.0L1135.4 730.0L1135.4 730.9L1135.5 732.2L1135.5 732.9L1135.5 734.1L1135.5 734.8L1135.5 735.8L1135.5 737.2L1135.6 738.0L1135.6 738.8L1135.6 739.9L1135.6 741.0L1135.6 742.1L1135.6 742.8L1135.7 743.9L1135.7 745.2L1135.7 746.1L1135.7 746.8L1135.7 747.9L1135.7 748.9L1135.7 750.1L1135.8 751.1L1135.8 752.2L1135.8 753.2L1135.8 754.0L1135.8 755.1L1135.8 756.1L1135.9 757.1L1135.9 758.0L1135.9 759.1L1135.9 760.1L1135.9 761.2L1135.9 761.8L1136.0 763.2L1136.0 763.7L1136.0 765.1L1136.0 766.0L1136.0 767.0L1136.1 768.2L1136.1 769.0L1136.1 770.0L1136.1 771.1L1136.1 772.2L1136.1 773.0L1136.2 773.9L1136.2 775.0L1136.2 776.0L1136.2 777.1L1136.2 777.9L1136.3 778.9L1136.3 780.0L1136.3 780.9L1136.3 781.9L1136.3 783.1L1136.4 784.2L1136.4 785.0L1136.4 786.0L1136.4 786.8L1136.4 787.9L1136.4 788.8L1136.5 790.0L1136.5 791.0L1136.5 791.8L1136.5 793.2L1136.5 793.9L1136.6 795.1L1136.6 796.1L1136.6 797.2L1136.6 797.8L1136.6 798.9L1136.7 800.2L1136.7 800.7L1136.7 801.7L1136.7 803.0L1136.7 804.0L1136.7 805.2L1136.8 806.1L1136.8 807.0L1136.8 808.2L1136.8 809.0L1136.8 810.0L1136.9 811.1L1136.9 811.9L1136.9 812.9L1136.9 814.0L1136.9 814.9L1137.0 816.2L1137.0 817.0L1137.0 818.0L1137.0 818.8L1137.0 819.9L1137.0 820.9L1137.1 822.0L1137.1 823.0L1137.1 824.1L1137.1 825.2L1137.1 825.9L1137.2 826.9L1137.2 828.0L1137.2 829.2L1137.2 829.9L1137.2 831.0L1137.3 832.1L1137.3 832.8L1137.3 833.8L1137.3 835.2L1137.3 836.1L1137.3 836.9L1137.4 837.7L1137.4 839.1L1137.4 840.0L1137.4 841.1L1137.4 842.2L1137.5 843.1L1137.5 843.9L1137.5 844.8L1137.5 845.8L1137.5 846.9L1137.6 847.9L1137.6 848.8L1137.6 849.8L1137.6 851.0L1137.6 852.0L1137.6 852.9L1137.7 854.2L1137.7 855.0L1137.7 855.7L1137.7 856.9L1137.7 858.1L1137.8 858.8L1137.8 860.0L1137.8 860.7L1137.8 861.8L1137.8 863.1L1137.9 864.0L1137.9 865.0L1137.9 865.8L1137.9 866.9L1137.9 867.9L1137.9 868.8L1138.0 870.0L1138.0 870.9L1138.0 872.2L1138.0 872.9L1138.0 873.9L1138.1 874.7L1138.1 875.7L1138.1 877.0L1138.1 877.7L1138.1 878.7L1138.2 879.7L1138.2 880.9L1138.2 882.1L1138.2 883.0L1138.2 884.1L1138.2 884.7L1138.3 885.7L1138.3 887.0L1138.3 887.8L1138.3 889.0L1138.3 889.8L1138.4 890.7L1138.4 891.8L1138.4 892.7L1138.4 894.1L1138.4 894.9L1138.5 895.8L1138.5 896.9L1138.5 897.8L1138.5 898.7L1138.5 900.1L1138.5 900.9L1138.6 902.1L1138.6 902.9L1138.6 903.9L1138.6 904.8L1138.6 905.7L1138.7 907.1L1138.7 908.1L1138.7 908.8L1138.7 910.1L1138.7 911.0L1138.8 911.8L1138.8 912.9L1138.8 914.1L1138.8 914.9L1138.8 916.1L1138.8 916.7L1138.9 917.8L1138.9 919.0L1138.9 919.7L1138.9 920.8L1138.9 922.1L1139.0 922.9L1139.0 924.0L1139.0 924.7L1139.0 925.7L1139.0 926.8L1139.1 927.7L1139.1 929.1L1139.1 929.8L1139.1 930.9L1139.1 931.7L1139.1 932.9L1139.2 933.8L1139.2 934.8L1139.2 935.6L1139.2 936.7L1139.2 938.0L1139.3 938.8L1139.3 939.7L1139.3 940.7L1139.3 941.7L1139.3 942.7L1139.4 943.6L1139.4 944.9L1139.4 945.8L1139.4 946.7L1139.4 947.9L1139.4 948.6L1139.5 949.7L1139.5 951.0L1139.5 951.7L1139.5 952.8L1139.5 954.0L1139.6 955.0L1139.6 955.7L1139.6 956.8L1139.6 957.9L1139.6 958.8L1139.7 960.1L1139.7 960.7L1139.7 962.1L1139.7 962.8L1139.7 963.7L1139.7 964.8L1139.8 965.6L1139.8 966.9L1139.8 967.7L1139.8 969.0L1139.8 969.9L1139.9 970.8L1139.9 971.7L1139.9 972.9L1139.9 973.7L1139.9 975.0L1140.0 975.6L1140.0 976.8L1140.0 977.8L1140.0 978.7L1140.0 980.0L1140.0 980.8L1140.1 981.9L1140.1 982.9L1140.1 983.7L1140.1 984.8L1140.1 985.6L1140.2 986.7L1140.2 988.0L1140.2 988.7L1140.2 989.9L1140.2 990.6L1140.3 991.8L1140.3 992.7L1140.3 993.8L1140.3 994.7L1140.3 995.6L1140.3 996.7L1140.4 997.7L1140.4 998.6L1140.4 999.9L1140.4 1000.7L1140.4 1001.8L1140.5 1003.0L1140.5 1003.9L1140.5 1005.0L1140.5 1004.0L1140.5 1002.6L1140.6 1001.7L1140.6 1000.6L1140.6 999.9L1140.6 998.9L1140.7 997.7L1140.7 996.8L1140.7 995.9L1140.7 994.9L1140.7 993.7L1140.8 993.0L1140.8 991.7L1140.8 990.9L1140.8 989.7L1140.9 988.6L1140.9 988.0L1140.9 986.9L1140.9 985.9L1140.9 984.6L1141.0 983.6L1141.0 982.7L1141.0 981.7L1141.0 980.7L1141.1 979.8L1141.1 978.6L1141.1 977.7L1141.1 976.9L1141.1 975.7L1141.2 975.0L1141.2 973.9L1141.2 973.0L1141.2 971.7L1141.3 970.8L1141.3 969.9L1141.3 968.8L1141.3 967.6L1141.4 967.0L1141.4 966.0L1141.4 964.8L1141.4 963.6L1141.4 963.0L1141.5 961.9L1141.5 960.6L1141.5 959.7L1141.5 958.7L1141.6 958.0L1141.6 956.7L1141.6 956.1L1141.6 955.0L1141.6 953.7L1141.7 953.0L1141.7 951.8L1141.7 951.0L1141.7 950.1L1141.8 948.8L1141.8 947.7L1141.8 947.1L1141.8 945.9L1141.8 945.1L1141.9 944.0L1141.9 943.0L1141.9 942.1L1141.9 941.0L1142.0 939.9L1142.0 938.7L1142.0 938.0L1142.0 936.9L1142.0 935.9L1142.1 935.1L1142.1 933.7L1142.1 933.0L1142.1 931.7L1142.2 931.0L1142.2 930.1L1142.2 928.8L1142.2 927.9L1142.2 927.2L1142.3 926.0L1142.3 924.9L1142.3 923.8L1142.3 922.7L1142.4 921.9L1142.4 920.9L1142.4 919.8L1142.4 918.8L1142.4 917.8L1142.5 917.0L1142.5 916.0L1142.5 914.8L1142.5 913.8L1142.6 913.0L1142.6 911.9L1142.6 911.2L1142.6 909.9L1142.7 908.9L1142.7 908.1L1142.7 906.8L1142.7 906.0L1142.7 904.9L1142.8 904.1L1142.8 903.0L1142.8 902.1L1142.8 900.8L1142.9 900.1L1142.9 899.0L1142.9 898.0L1142.9 897.1L1142.9 896.1L1143.0 894.8L1143.0 893.9L1143.0 892.9L1143.0 891.8L1143.1 890.8L1143.1 889.9L1143.1 888.8L1143.1 888.1L1143.1 887.0L1143.2 885.8L1143.2 884.9L1143.2 884.0L1143.2 882.9L1143.3 881.8L1143.3 880.8L1143.3 879.8L1143.4 879.2L1143.4 878.1L1143.5 876.8L1143.5 876.1L1143.6 875.2L1143.7 874.0L1143.7 872.8L1143.8 872.0L1143.8 870.9L1143.9 869.8L1144.0 869.0L1144.0 867.7L1144.1 867.1L1144.1 866.0L1144.2 865.0L1144.3 864.1L1144.3 863.0L1144.4 861.8L1144.4 860.8L1144.5 859.7L1144.6 858.7L1144.6 858.0L1144.7 857.1L1144.7 855.8L1144.8 854.7L1144.9 853.9L1144.9 853.0L1145.0 852.1L1145.0 850.7L1145.1 850.0L1145.2 849.0L1145.2 848.0L1145.3 846.7L1145.4 845.7L1145.4 845.0L1145.5 843.7L1145.5 842.7L1145.6 841.8L1145.7 840.7L1145.7 840.0L1145.8 838.7L1145.8 837.6L1145.9 836.8L1146.0 835.8L1146.0 834.9L1146.1 833.9L1146.1 833.0L1146.2 832.0L1146.3 830.7L1146.3 829.7L1146.4 828.6L1146.4 827.6L1146.5 826.8L1146.6 825.5L1146.6 824.8L1146.7 823.5L1146.7 822.7L1146.8 821.9L1146.9 820.5L1147.0 819.5L1147.1 818.7L1147.2 817.5L1147.3 816.8L1147.4 815.5L1147.5 814.9L1147.6 813.9L1147.7 812.8L1147.8 811.7L1147.9 810.6L1148.0 809.8L1148.1 808.7L1148.2 807.7L1148.3 806.6L1148.4 805.7L1148.5 804.8L1148.6 803.9L1148.7 802.9L1148.8 801.5L1148.9 800.6L1149.0 799.7L1149.1 798.7L1149.2 797.6L1149.3 796.5L1149.4 795.5L1149.5 794.6L1149.6 793.7L1149.7 792.9L1149.8 791.9L1149.9 790.9L1150.0 789.9L1150.1 788.9L1150.2 787.8L1150.4 786.9L1150.5 785.5L1150.7 784.8L1150.9 783.8L1151.1 782.7L1151.3 781.9L1151.5 781.1L1151.7 779.9L1151.9 779.0L1152.1 777.8L1152.3 776.9L1152.5 776.2L1152.6 774.8L1152.8 773.9L1153.0 773.1L1153.2 772.0L1153.4 770.9L1153.6 770.2L1153.8 769.1L1154.0 768.2L1154.2 767.2L1154.4 766.2L1154.6 765.3L1154.9 764.3L1155.2 763.2M1353.1 671.3L1353.5 672.6L1353.8 673.4L1354.2 674.1L1354.5 675.5L1354.9 676.1L1355.2 677.0L1355.5 678.2L1355.9 679.0L1356.2 680.1L1356.5 681.1L1356.9 681.9L1357.2 683.0L1357.6 683.7L1357.9 684.9L1358.2 685.9L1358.6 686.6L1358.9 687.7L1359.2 688.5" stroke="#ff0000" stroke-width="1.2" stroke-dasharray="1.3 2.7" fill="none"/><path d="M427.5 738.9L428.5 739.4L429.5 739.1L430.5 739.3L431.5 739.3L432.5 738.5L433.5 739.6L434.5 739.3L435.5 738.5L436.5 739.4L437.5 738.9L438.5 738.6L439.5 739.6L440.5 739.1L441.5 739.3L442.5 738.6L443.5 739.3L444.5 738.5L445.5 738.7L446.5 738.8L447.5 738.4L448.5 739.1L449.5 738.7L450.5 738.8L451.6 739.2L452.6 738.9L453.6 739.5L454.6 739.1L455.6 739.4L456.6 739.1L457.6 739.5L458.6 739.4L459.6 738.6L460.6 739.3L461.6 738.8L462.6 739.3L463.6 739.2L464.6 739.4L465.6 738.5L466.6 738.8L467.6 739.3L468.6 739.5L469.6 739.3L470.6 738.5L471.6 739.1L472.6 738.5L473.6 739.1L474.6 739.4L475.6 738.5L476.6 739.5L477.6 739.2L478.6 738.7L479.6 738.6L480.6 738.9L481.6 739.4L482.6 739.1L483.6 738.5L484.6 738.4L485.6 738.5L486.6 739.4L487.6 738.6L488.6 739.1L489.6 738.7L490.6 739.2L491.6 738.9L492.6 738.6L493.6 739.5L494.6 739.0L495.6 739.2L496.6 739.4L497.7 739.5L498.7 738.4L499.7 738.8L500.7 738.6L501.7 739.0L502.7 739.4L503.7 739.4L504.7 738.4L505.7 738.6L506.7 739.4L507.7 739.2L508.7 738.9L509.7 739.0L510.7 738.6L511.7 739.4L512.7 738.9L513.7 739.4L514.7 739.1L515.7 738.5L516.7 738.8L517.7 738.7L518.7 739.5L519.7 739.1L520.7 738.5L521.7 738.6L522.7 738.8L523.7 739.0L524.7 739.1L525.7 738.9L526.7 738.8L527.7 738.4L528.7 739.1L529.7 738.8L530.7 738.4L531.7 739.0L532.7 739.6L533.7 738.5L534.7 738.6L535.7 739.2L536.7 738.7L537.7 738.7L538.7 739.0L539.7 738.7L540.7 739.1L541.7 739.0L542.7 739.5L543.8 739.6M666.2 679.1L666.8 680.5L667.5 681.5L668.2 682.3L668.9 682.8L669.8 683.3L670.6 683.9L671.4 684.1L672.3 684.6L673.1 685.8L674.0 686.4L674.9 687.1L675.7 687.4L676.6 687.5L677.4 688.6L678.3 689.1L679.2 689.4L680.1 690.0L681.0 690.2L681.9 690.8L682.8 691.1L683.7 691.1L684.7 691.8L685.6 692.2L686.5 693.4L687.5 693.2L688.4 693.4L689.3 693.7L690.3 694.1L691.2 694.6L692.1 694.8L693.1 695.0L694.0 696.4L694.9 696.3L695.9 696.6L696.8 697.1L697.7 697.1L698.7 697.3L699.6 697.5L700.5 698.1L701.5 698.4L702.4 699.3L703.3 699.4L704.3 700.2L705.2 699.8L706.1 700.8L707.1 700.8L708.0 700.5L708.9 700.9L709.8 701.7L710.8 702.5L711.7 702.1L712.6 702.9L713.5 702.8L714.5 703.6L715.4 702.9L716.3 703.8L717.2 704.6L718.2 704.1L719.1 704.4L720.0 704.4L721.0 704.9L721.9 705.3L722.9 706.1L723.8 705.8L724.8 706.3L725.8 706.4L726.7 707.1L727.7 707.7L728.7 707.8L729.6 707.5L730.6 708.5L731.5 709.0L732.5 708.9L733.5 708.5L734.4 709.7L735.4 710.1L736.3 709.7L737.3 709.8L738.3 710.1L739.2 710.8L740.2 711.5L741.2 711.5L742.1 712.1L743.1 711.6L744.0 712.0L745.0 712.7L746.0 712.8L747.0 712.8L748.0 713.3L748.9 713.1L749.9 713.0L750.9 713.6L751.9 713.3L752.9 714.2L753.9 714.1L754.9 714.5L755.9 714.8L756.8 714.6L757.8 715.0L758.8 714.7L759.8 716.0L760.8 715.7L761.8 716.4L762.8 715.5L763.8 716.4L764.7 716.7L765.7 716.4L766.7 716.4L767.7 716.6L768.7 716.8L769.7 717.8L770.7 717.1L771.6 718.2L772.6 717.9L773.6 718.3L774.6 718.5L775.6 718.7L776.6 719.0L777.6 719.1L778.6 719.0L779.5 719.7L780.5 719.3L781.5 720.0L782.5 720.3L783.5 720.4L784.5 720.0L785.5 720.7L786.4 721.1L787.4 720.6L788.4 720.5L789.4 720.9L790.4 721.6L791.4 720.7L792.4 720.7L793.4 721.4L794.3 721.8L795.3 722.0L796.3 721.7L797.3 722.6L798.3 721.8L799.3 722.5L800.3 721.9L801.2 721.9L802.2 722.2L803.2 722.2L804.2 722.9L805.2 723.1L806.2 722.8L807.2 723.8L808.2 723.3L809.1 723.1L810.1 723.3L811.1 724.1L812.1 724.5L813.1 723.7L814.1 723.6L815.1 724.7L816.1 724.2L817.0 725.2L818.0 724.7L819.0 725.0L820.0 724.8L821.0 725.5L822.0 725.2L823.0 725.2L824.0 726.0L825.0 725.2L826.0 726.0L827.0 725.4L828.0 726.2L829.0 726.0L830.0 726.7L831.0 725.8L832.0 726.6L833.0 726.5L834.0 727.3L835.0 727.4L836.0 727.2L837.0 726.8L838.0 727.0L839.0 727.1L840.0 727.4L841.0 727.3L842.0 727.4L843.0 728.2L844.0 728.2L845.0 727.9L846.0 728.8L847.0 728.0L848.0 728.6L849.0 728.2L850.0 729.2L851.0 729.3L852.0 728.7L853.0 729.4L854.0 729.5L855.0 729.0L856.0 729.1L857.0 729.4L858.0 730.0L859.0 729.2L860.0 730.0L861.0 730.0L862.0 729.9L863.0 730.1L864.0 730.6L865.0 729.9L866.0 730.8L867.0 730.3L868.0 730.9L869.0 731.1L870.0 730.4L871.0 731.3L872.0 731.5L873.0 730.8L874.0 730.6L875.0 730.8L876.0 731.9L877.0 730.9L878.0 732.0L879.0 731.2L880.0 732.0L881.0 731.4L882.0 731.6L883.0 732.3L884.0 731.7L885.0 732.1L886.0 732.9L887.0 732.7L888.0 733.0L889.0 733.2L890.0 732.2L891.0 732.5L892.0 733.3L893.0 733.3L894.0 732.6L895.0 733.3L896.0 733.0L897.0 733.4L898.0 733.1L899.0 733.1L900.0 734.3L901.0 733.5L902.0 734.3L903.0 733.4L904.0 733.9L905.0 733.5L906.0 733.9L907.0 733.6L908.0 734.3L909.0 733.7L910.0 734.4L911.0 734.2L912.0 733.8L913.0 734.1L914.0 734.3L915.0 734.9L916.0 734.2L917.0 734.1L918.0 735.0L919.0 735.0L920.0 734.8L921.0 734.3L922.0 734.2L923.0 734.4L924.0 734.2L925.0 734.2L926.0 734.8L927.0 734.7L928.0 734.9L929.0 734.7L930.0 734.4L931.0 735.2L932.0 735.2L933.0 735.1L934.0 735.2L935.0 735.4L936.0 735.8L937.0 735.7L938.0 735.5L939.0 735.2L940.0 735.1L941.0 735.3L942.0 736.0L943.0 735.3L944.0 735.4L945.0 735.4L946.0 735.2L947.0 736.2L948.0 735.1L949.0 735.8L950.0 736.2L951.0 735.5L952.0 735.9L953.0 735.7L954.0 735.5L955.0 735.5L956.0 735.4L957.0 736.3L958.0 736.3L959.0 736.4L960.0 735.4L961.0 736.2L962.0 735.8L963.0 736.2L964.0 736.1L965.0 735.8L966.0 736.6L967.0 735.5L968.0 736.4L969.0 736.6L970.0 736.2L971.0 736.3L972.0 736.8L973.0 735.9L974.0 736.4L975.0 736.5L976.0 736.1L977.0 736.5L978.0 736.2L979.0 736.4L980.0 736.5L981.0 736.6L982.0 736.2L983.0 736.6L984.0 736.5L985.0 736.1L986.0 736.6L987.0 736.2L988.0 737.0L989.0 736.5L990.0 736.8L991.0 736.6L992.0 736.6L993.0 736.3L994.0 736.2L995.0 737.2L996.0 736.7L997.0 736.7L998.0 736.7L999.0 737.1L1000.0 736.4L1001.0 736.4L1002.0 737.2L1003.0 736.7L1004.0 737.0L1005.0 737.2L1006.0 737.3L1007.0 737.3L1008.0 736.3L1009.0 736.7L1010.0 737.3L1011.0 737.3L1012.0 736.5L1013.0 736.5L1014.0 736.7L1015.0 736.5L1016.0 736.8L1017.0 737.4L1018.0 737.0L1019.0 737.0L1020.0 736.6L1021.0 736.9L1022.0 737.7L1023.0 737.3L1024.0 737.0L1025.0 737.1L1026.0 737.5L1027.0 737.5L1028.0 736.7L1029.0 737.4L1030.0 737.0L1031.0 737.2L1032.0 736.9L1033.0 737.1L1034.0 737.1L1035.0 737.1L1036.0 736.7L1037.0 736.9L1038.0 737.4L1039.0 736.8L1040.0 737.0L1041.0 737.6L1042.0 737.1L1043.0 737.2L1044.0 737.1L1045.0 737.8L1046.0 736.9L1047.0 737.6L1048.0 737.9L1049.0 737.1L1050.0 737.4L1051.0 737.9L1052.0 737.7L1053.0 737.4L1054.0 737.1L1055.0 737.6L1056.0 737.5L1056.9 737.9L1057.9 737.5L1058.9 737.6L1059.9 737.9L1060.9 738.2L1061.9 737.6L1062.9 737.7L1063.9 738.0L1064.9 738.4L1065.9 737.5L1066.9 738.5L1067.9 738.2L1068.9 737.8L1069.8 738.2L1070.8 737.8L1071.8 737.6L1072.8 738.4L1073.8 738.0L1074.8 738.2L1075.8 738.2L1076.8 738.7L1077.8 738.5L1078.8 737.7L1079.8 738.4L1080.8 738.3L1081.8 738.3L1082.8 738.8L1083.7 738.3L1084.7 738.4L1085.7 738.9L1086.7 738.4L1087.7 738.5L1088.7 738.5L1089.7 738.9L1090.7 738.8L1091.7 738.9L1092.7 738.5L1093.7 738.1L1094.7 738.9L1095.7 738.7L1096.6 739.0L1097.6 739.1L1098.6 738.3L1099.6 738.5L1100.6 738.3L1101.6 739.2L1102.6 738.4L1103.6 738.4L1104.6 739.2L1105.6 739.0L1106.6 738.4L1107.6 739.2L1108.6 739.3L1109.5 739.0L1110.5 738.5L1111.5 739.3L1112.5 739.0L1113.5 739.2L1114.5 739.8L1115.5 739.6L1116.2 740.2L1117.0 739.9L1117.7 740.7L1118.5 741.5L1119.2 741.4L1119.9 743.2L1120.5 743.1L1121.2 743.7L1121.8 744.5M1172.7 819.6L1173.3 821.1L1174.0 821.3L1174.8 821.8L1175.6 822.1L1176.5 822.0L1177.4 822.6L1178.4 823.6L1179.3 823.8L1180.2 824.1L1181.2 823.7L1182.1 823.9L1183.0 824.0L1184.0 824.9L1184.9 825.0L1185.8 825.4L1186.8 825.7L1187.8 826.0L1188.8 826.0L1189.8 826.7L1190.8 826.2L1191.8 827.2L1192.8 827.0L1193.9 826.6L1194.9 827.1L1195.9 827.5L1196.9 827.6L1197.9 828.1L1198.8 828.1L1199.7 828.5L1200.6 829.6L1201.4 829.6L1202.2 830.7L1203.0 831.4L1203.8 831.7L1204.6 832.1L1205.4 833.3L1206.2 833.3L1207.0 834.5L1207.8 834.1L1208.6 835.1L1209.4 836.0L1210.1 835.9L1210.9 837.6L1211.5 837.3L1212.2 838.7M1274.8 980.5L1275.5 982.1L1276.2 982.4L1276.9 983.4L1277.6 983.7L1278.3 984.6L1279.0 985.3L1279.7 985.5L1280.4 986.1L1281.2 987.5L1281.9 987.2L1282.6 988.6L1283.4 987.9L1284.2 987.8L1285.0 987.6L1285.9 988.0L1286.7 987.8L1287.6 986.6L1288.4 986.4L1289.3 985.5L1290.1 985.7L1290.9 985.0L1291.7 983.7L1292.5 983.0L1293.1 983.1M1384.8 735.3L1385.5 735.6L1386.4 734.4L1387.3 733.9L1388.3 734.0L1389.3 733.6L1390.3 733.8L1391.4 733.5L1392.4 734.5L1393.4 734.1L1394.4 735.1L1395.3 734.8L1396.1 736.1L1397.0 737.0L1397.8 736.9L1398.6 736.9L1399.5 737.7L1400.5 738.2L1401.4 737.9L1402.4 738.4L1403.3 737.9L1404.3 738.5L1405.3 738.9L1406.3 738.6L1407.2 739.0L1408.2 738.4L1409.2 739.4L1410.1 738.6L1411.1 739.6L1412.1 739.8L1413.0 739.8L1414.0 739.4L1415.0 739.1L1416.0 739.2L1417.0 739.7L1418.0 739.4L1419.0 739.9L1420.0 738.9L1421.0 739.4L1422.0 739.8L1423.0 739.5L1424.0 739.4L1425.0 738.9L1426.0 739.0L1427.0 739.1L1428.0 739.9L1429.1 739.8L1430.1 739.1L1431.1 739.9L1432.1 738.8L1433.1 739.5L1434.1 740.0L1435.1 739.2L1436.1 739.9L1437.1 739.6L1438.1 738.9L1439.1 739.2L1440.1 739.3L1441.1 739.1L1442.1 739.7L1443.1 739.0L1444.1 739.7L1445.1 739.2L1446.1 738.9L1447.1 739.5L1448.1 738.9L1449.1 739.5L1450.1 739.7L1451.1 739.5L1452.1 739.4L1453.1 738.8L1454.1 739.4L1455.1 738.9L1456.1 739.6L1457.1 739.0L1458.2 739.5L1459.2 739.2L1460.2 739.2L1461.2 739.6L1462.2 739.0L1463.2 739.0L1464.2 739.9L1465.2 739.2L1466.2 739.8L1467.2 739.8L1468.2 739.4L1469.2 739.0L1470.2 738.9L1471.2 739.9L1472.2 738.9L1473.2 739.4L1474.2 739.4L1475.2 738.9L1476.2 739.4L1477.2 739.0L1478.2 739.4L1479.2 739.4L1480.2 739.2L1481.2 739.0L1482.2 739.3L1483.2 739.0L1484.2 739.0L1485.2 739.1L1486.2 739.8L1487.3 739.4L1488.3 739.9L1489.3 738.8L1490.3 739.9L1491.3 739.4L1492.3 739.7L1493.3 739.5L1494.3 739.6L1495.3 739.1L1496.3 739.7L1497.3 739.0L1498.3 739.1L1499.3 738.8L1500.3 739.3L1501.3 739.4L1502.3 739.2L1503.3 739.9L1504.3 738.9L1505.3 739.5L1506.3 739.1L1507.3 739.5L1508.3 739.7L1509.3 739.7L1510.3 738.9L1511.3 739.1L1512.3 739.5L1513.3 740.0L1514.3 738.8L1515.4 739.5L1516.4 739.6L1517.4 739.8L1518.4 739.2L1519.4 739.8L1520.4 739.4L1521.4 739.9L1522.4 738.8L1523.4 739.9L1524.4 739.3L1525.4 739.3L1526.4 738.9L1527.4 739.1L1528.4 739.7L1529.4 739.6L1530.4 739.0L1531.4 739.2L1532.4 739.0L1533.4 739.0L1534.4 739.1L1535.4 739.2L1536.4 740.0L1537.4 740.0L1538.4 739.7L1539.4 739.4L1540.4 739.4L1541.4 739.7L1542.4 739.9L1543.4 739.7L1544.5 739.6L1545.5 739.0L1546.5 739.6L1547.5 739.8L1548.5 739.7L1549.5 738.9L1550.5 739.7L1551.5 739.2L1552.5 739.0L1553.5 740.0L1554.5 739.6L1555.5 739.7L1556.5 739.0L1557.5 739.8L1558.5 739.9" stroke="#000" stroke-width="1.1" fill="none"/><path d="M586.5 278.3L586.8 277.3L587.0 276.4L587.3 275.4L587.6 274.3L587.8 273.3L588.1 272.5L588.3 271.6L588.6 270.7L588.9 269.4L589.1 268.8L589.4 267.6L589.7 266.9L589.9 265.4L590.2 265.0L590.4 263.9L590.7 262.6L591.0 262.0L591.2 260.7L591.5 259.7L591.7 258.9L592.0 257.8L592.3 257.0L592.6 256.3L592.8 255.2L593.1 254.3L593.4 253.1L593.7 252.4L593.9 251.4L594.2 250.4L594.5 249.6L594.8 248.5L595.0 247.3L595.3 246.2L595.6 245.5L595.9 244.7L596.1 243.4L596.4 242.6L596.7 241.8L597.0 240.8L597.2 239.4L597.5 238.7L597.8 237.4L598.1 236.5L598.3 236.0L598.6 234.8L598.9 233.9L599.2 232.9L599.4 231.8L599.7 230.8L600.0 229.9M641.8 619.2L642.0 620.1L642.3 620.8L642.6 621.7L642.9 622.7L643.1 623.9L643.4 624.7L643.7 625.8L644.0 626.9L644.3 627.4L644.6 628.7L644.9 629.2L645.1 630.7L645.4 631.2L645.7 632.2L646.0 633.6L646.3 634.2L646.6 635.1L646.9 636.4L647.1 637.2L647.4 638.3L647.7 639.0L648.1 640.0L648.4 641.2L648.7 641.9L649.1 643.1L649.4 643.6L649.8 644.9L650.1 645.4L650.5 646.6L650.8 647.2L651.2 648.3L651.5 649.7L651.9 650.3L652.2 651.5L652.6 652.1L652.9 653.1L653.3 653.9L653.6 655.1L654.0 656.2L654.4 656.9L654.7 657.8L655.1 659.1L655.4 660.0L655.8 660.8L656.1 661.4L656.5 662.7L656.8 663.5L657.2 664.7L657.5 665.3L657.9 666.4L658.2 667.4L658.6 668.2L659.0 669.2L659.3 670.2L659.7 671.2L660.2 671.9L660.7 672.6L661.3 673.8L661.9 674.0L662.5 675.3L663.1 676.0L663.7 676.6L664.3 677.4L664.9 678.3L665.5 679.2L666.2 679.8M1121.8 744.9L1122.4 745.2L1123.0 746.1L1123.6 746.8L1124.2 748.0L1124.8 748.7L1125.4 749.1L1126.0 750.1L1126.5 750.9L1127.1 751.4L1127.6 752.5L1128.2 753.5L1128.7 754.3L1129.2 754.9L1129.8 756.1L1130.3 756.6L1130.8 757.6L1131.4 758.4L1131.9 759.6L1132.5 760.2L1133.1 761.2L1133.7 761.9L1134.3 762.6L1134.9 763.7L1135.5 764.4L1136.2 765.2L1136.8 765.8L1137.5 766.5L1138.1 767.6L1138.7 768.6L1139.3 769.4L1139.9 769.9L1140.4 770.7L1141.0 771.7L1141.5 772.8L1142.0 773.3L1142.5 774.5L1143.0 775.0L1143.5 775.9L1144.0 776.6L1144.5 777.6L1145.0 778.5L1145.5 779.7L1146.1 780.5L1146.6 780.8L1147.2 781.6L1147.8 782.8L1148.3 783.1L1148.9 783.9L1149.4 784.7L1150.0 785.3L1150.6 786.2L1151.1 787.1L1151.7 787.9L1152.3 789.1L1152.9 789.5L1153.4 790.3L1154.0 791.6L1154.6 792.1L1155.1 793.2L1155.7 793.9L1156.3 794.8L1156.9 795.4L1157.4 796.1L1158.0 797.3L1158.6 798.0L1159.1 798.9L1159.7 799.8L1160.3 800.7L1160.9 801.2L1161.4 802.1L1162.0 803.3L1162.5 803.9L1163.1 804.6L1163.6 805.6L1164.1 806.3L1164.7 807.4L1165.2 807.8L1165.7 809.1L1166.3 809.8L1166.8 810.6L1167.3 811.8L1167.9 812.2L1168.4 813.0L1168.9 813.8L1169.4 814.9L1170.0 815.9L1170.5 816.7L1171.0 817.4L1171.6 818.5L1172.1 818.9L1172.7 819.8M1212.2 838.7L1212.8 839.7L1213.5 840.2L1214.1 841.1L1214.7 841.9L1215.3 842.5L1215.9 843.6L1216.5 844.3L1217.2 844.8L1217.8 845.6L1218.4 846.7L1219.0 847.2L1219.6 847.9L1220.2 849.1L1220.8 849.7L1221.4 850.5L1222.0 851.4L1222.5 852.3L1223.0 852.7L1223.5 853.8L1223.9 854.5L1224.3 855.6L1224.7 856.6L1225.1 857.7L1225.5 858.5L1225.9 859.4L1226.3 860.2L1226.7 861.2L1227.1 862.0L1227.5 863.2L1227.9 864.1L1228.3 865.1L1228.8 865.6L1229.2 866.8L1229.6 867.8L1230.0 868.5L1230.4 869.7L1230.8 870.6L1231.2 871.4L1231.6 872.4L1232.0 873.2L1232.4 874.3L1232.8 874.7L1233.2 876.0L1233.6 876.9L1234.0 877.8L1234.3 878.5L1234.7 879.3L1235.1 880.5L1235.5 881.6L1235.8 882.2L1236.2 883.0L1236.5 884.0L1236.9 884.8L1237.3 886.1L1237.6 887.2L1238.0 888.0L1238.4 888.6L1238.7 889.8L1239.1 890.3L1239.5 891.7L1239.8 892.3L1240.2 893.0L1240.5 894.3L1240.9 894.9L1241.3 895.9L1241.6 896.7L1242.0 897.9L1242.4 898.9L1242.7 899.9L1243.1 900.4L1243.5 901.8L1243.8 902.3L1244.2 903.2L1244.5 904.4L1244.9 905.2L1245.3 906.1L1245.6 907.1L1245.9 907.9L1246.2 909.2L1246.5 909.8L1246.7 911.2L1247.0 912.1L1247.2 912.9L1247.5 913.6L1247.7 915.1L1248.0 915.6L1248.2 916.9L1248.5 917.8L1248.7 918.6L1249.0 919.9L1249.2 920.9L1249.5 921.8L1249.7 922.7L1250.0 923.8L1250.2 924.8L1250.5 925.5L1250.8 926.9L1251.1 927.9L1251.5 928.7L1251.9 929.8L1252.2 930.3L1252.6 931.7L1253.0 932.0L1253.4 933.2L1253.8 933.9L1254.2 935.1L1254.6 936.1L1255.0 937.1L1255.3 937.9L1255.7 938.7L1256.1 939.6L1256.5 940.6L1256.9 941.5L1257.3 942.4L1257.7 943.6L1258.0 944.4L1258.4 945.3L1258.8 946.1L1259.2 947.4L1259.6 948.0L1260.0 949.0L1260.4 950.1L1260.8 951.1L1261.1 952.2L1261.5 953.0L1261.9 954.0L1262.3 954.9L1262.7 955.7L1263.1 956.7L1263.6 957.2L1264.0 958.2L1264.4 959.0L1264.8 960.4L1265.2 961.2L1265.6 962.1L1266.1 962.8L1266.5 963.8L1266.9 964.6L1267.3 965.8L1267.7 966.9L1268.2 967.4L1268.6 968.1L1269.0 969.1L1269.4 970.2L1269.8 971.4L1270.2 972.3L1270.7 973.0L1271.1 973.7L1271.5 974.6L1271.9 975.5L1272.3 976.8L1272.8 977.5L1273.2 978.7L1273.7 979.5L1274.2 980.3L1274.8 980.9M1293.1 983.0L1293.7 981.9L1294.3 981.1L1294.8 980.5L1295.4 979.6L1295.9 978.6L1296.5 977.8L1297.0 976.9L1297.5 976.6L1298.1 975.6L1298.6 974.9L1299.1 974.1L1299.7 973.0L1300.2 972.3L1300.8 971.3L1301.3 970.7L1301.8 969.9L1302.4 968.6L1302.9 967.7L1303.4 967.0L1303.9 966.3L1304.4 965.3L1305.0 964.3L1305.5 963.9L1306.0 963.0L1306.5 962.0L1307.0 960.8L1307.6 960.5L1308.1 959.4L1308.6 958.3L1309.1 957.6L1309.6 956.9L1310.1 956.2L1310.7 955.1L1311.2 954.3L1311.7 953.2L1312.2 952.4L1312.7 951.9L1313.2 950.7L1313.8 949.7L1314.3 949.1L1314.8 948.0L1315.3 947.2L1315.8 946.5L1316.3 945.7L1316.8 944.9L1317.4 944.0L1317.9 943.0L1318.3 941.9L1318.8 941.4L1319.3 940.1L1319.7 939.5L1320.2 938.5L1320.6 937.8L1321.1 936.9L1321.5 935.7L1322.0 935.1L1322.4 934.2L1322.9 933.2L1323.3 932.1L1323.8 931.6L1324.2 930.6L1324.7 929.3L1325.1 928.5L1325.6 928.1L1326.0 926.7L1326.5 925.9L1326.9 925.3L1327.3 924.4L1327.8 923.4L1328.2 922.5L1328.5 921.2L1328.9 920.2L1329.2 919.8L1329.4 918.7L1329.7 917.3L1329.9 916.3L1330.2 915.4L1330.4 914.9L1330.7 913.4L1330.9 912.7L1331.2 911.9L1331.4 910.7L1331.7 909.9L1331.9 908.5L1332.2 907.5L1332.4 906.4L1332.7 905.9L1332.9 904.5M1341.7 865.0L1342.0 863.9L1342.2 862.6L1342.5 862.0L1342.8 860.6L1343.0 859.9L1343.3 858.7L1343.6 858.1L1343.8 857.2L1344.1 856.2L1344.4 854.7L1344.7 854.3L1344.9 853.1L1345.2 852.3L1345.5 851.1L1345.7 850.2L1346.0 849.3L1346.3 848.4L1346.5 847.0L1346.8 846.0L1347.1 845.4L1347.3 844.2L1347.6 843.3L1347.9 842.1L1348.2 841.6L1348.4 840.2L1348.7 839.7L1349.0 838.7L1349.2 837.5L1349.5 836.4L1349.8 835.7L1350.0 834.5L1350.3 833.7L1350.6 832.5L1350.8 832.0L1351.1 830.8L1351.4 829.7L1351.6 828.6L1351.9 828.0L1352.2 827.1L1352.5 826.2L1352.7 824.7L1353.0 823.9L1353.3 822.9L1353.5 822.2L1353.8 820.9L1354.1 820.2L1354.4 819.5L1354.7 818.4L1355.0 817.0L1355.3 816.0L1355.6 815.1L1356.0 814.5L1356.3 813.5L1356.6 812.5L1357.0 811.5L1357.3 810.5L1357.7 809.7L1358.0 808.8L1358.3 808.0L1358.7 806.9L1359.0 806.0L1359.4 805.1L1359.7 804.1L1360.0 803.1L1360.4 801.7L1360.7 801.2L1361.0 800.3L1361.4 799.1L1361.7 798.4L1362.1 797.0L1362.4 796.6L1362.7 795.3L1363.1 794.5L1363.4 793.3L1363.8 792.4L1364.1 791.4L1364.4 790.5L1364.8 789.4L1365.1 788.6L1365.5 788.0L1365.8 786.9L1366.1 786.1L1366.5 785.0L1366.8 784.1L1367.2 783.3L1367.5 782.2L1367.8 780.9L1368.2 780.0L1368.5 779.1L1368.9 777.9L1369.2 777.1L1369.6 776.6L1369.9 775.6L1370.2 774.3L1370.6 773.6L1370.9 772.7L1371.3 771.8L1371.6 770.8L1372.0 769.7L1372.3 768.5L1372.7 768.0L1373.0 766.7L1373.3 766.0L1373.7 764.9L1374.0 764.0L1374.4 763.3L1374.7 761.9L1375.1 761.2L1375.4 760.3L1375.7 759.3L1376.1 758.6L1376.4 757.3L1376.8 756.7L1377.1 755.6L1377.5 754.8L1377.8 753.3L1378.1 752.5L1378.5 751.6L1378.8 751.0L1379.2 749.5L1379.5 748.7L1379.9 748.0L1380.2 747.2L1380.5 745.8L1380.9 745.0L1381.2 744.2L1381.6 743.2L1381.9 742.3L1382.2 741.4L1382.6 740.1L1382.9 739.2L1383.3 738.1L1383.7 737.6L1384.2 736.4L1384.8 735.7" stroke="#000" stroke-width="1" stroke-dasharray="3 1" fill="none"/><path d="M543.8 739.3L543.8 738.1L543.9 737.1L544.0 736.1L544.1 735.1L544.2 734.1L544.3 732.9L544.3 731.7L544.4 730.7L544.5 729.7L544.6 728.9L544.7 727.8L544.8 726.8L544.8 726.0L544.9 725.3L545.0 724.1L545.1 722.9L545.2 722.2L545.2 720.8L545.3 719.8L545.4 718.9L545.5 717.9L545.6 717.1L545.7 716.0L545.8 715.1L545.8 713.8L545.9 713.3L546.0 711.9L546.1 711.2L546.2 709.7L546.3 709.2L546.3 707.8L546.4 707.2L546.5 706.2L546.6 705.1L546.7 703.9L546.7 702.7L546.8 701.8L546.9 701.2L547.0 699.8L547.1 699.1L547.1 698.1L547.2 697.1L547.3 695.8L547.4 694.8L547.5 693.8L547.5 693.3L547.6 691.9L547.7 691.1L547.8 690.0L547.8 688.8L547.9 687.7L548.0 686.7L548.1 686.2L548.1 684.8L548.2 684.3L548.3 682.9L548.4 682.1L548.4 680.8L548.5 680.2L548.6 678.9L548.7 677.9L548.7 677.0L548.8 675.8L548.9 674.8L549.0 674.2L549.0 672.9L549.1 671.9L549.2 671.2L549.2 669.8L549.3 668.8L549.4 667.8L549.5 666.9L549.6 665.9L549.6 665.1L549.7 664.0L549.8 663.2L549.9 661.7L549.9 661.1L550.0 660.2L550.1 658.8L550.2 657.7L550.3 657.0L550.3 655.8L550.4 655.0L550.5 654.1L550.6 652.8L550.7 651.8L550.8 651.0L550.8 649.8L550.9 648.8L551.0 648.0L551.1 646.8L551.2 645.7L551.2 644.9L551.3 644.0L551.4 643.3L551.5 642.0L551.6 640.7L551.7 639.8L551.8 639.1L551.8 638.0L551.9 637.2L552.0 636.3L552.1 635.2L552.2 633.8L552.3 633.3L552.3 632.0L552.4 630.8L552.5 629.8L552.6 629.2L552.7 627.8L552.8 626.7L552.8 625.9L552.9 625.3L553.0 624.0L553.1 623.1L553.2 621.7L553.2 621.0L553.3 619.9L553.4 618.8L553.5 618.1L553.6 616.9L553.7 615.8L553.8 615.3L553.8 614.0L553.9 612.8L554.0 611.7L554.1 611.1L554.2 610.0L554.3 608.7L554.3 608.0L554.4 607.1L554.5 606.0L554.6 604.8L554.7 604.0L554.7 603.1L554.8 602.1L554.9 600.8L555.0 600.2L555.1 599.3L555.1 598.1L555.2 597.2L555.3 595.9L555.4 595.2L555.5 593.8L555.5 592.8L555.6 592.1L555.7 591.2L555.8 589.7L555.8 588.8L555.9 587.7L556.0 587.0L556.1 585.8L556.1 584.8L556.2 584.1L556.3 583.0L556.4 582.3L556.4 580.9L556.5 580.1L556.6 578.7L556.6 578.3L556.7 576.8L556.8 576.0L556.9 575.0L557.0 574.3L557.0 573.0L557.1 572.3L557.2 571.1L557.3 569.8L557.3 569.2L557.4 567.8L557.5 567.3L557.6 566.0L557.6 564.8L557.7 564.3L557.8 562.9L557.9 561.9L557.9 560.9L558.0 560.1L558.1 558.7L558.2 557.9L558.2 556.8L558.3 556.2L558.4 554.7L558.5 554.1L558.5 552.9L558.6 552.0L558.7 551.0L558.8 550.1L558.8 548.8L558.9 547.8L559.0 546.8L559.1 546.3L559.1 544.8L559.2 543.8L559.3 543.0L559.4 542.0L559.4 541.2L559.5 539.7L559.6 538.8L559.7 537.8L559.7 537.1L559.8 536.0L559.9 534.9L560.0 534.2L560.0 533.1L560.1 532.2L560.2 531.3L560.3 529.9L560.3 529.3L560.4 527.9L560.5 526.7L560.6 526.2L560.6 524.8L560.7 523.7L560.8 522.9L560.9 521.9L560.9 521.3L561.0 520.2L561.1 519.0L561.2 518.0L561.2 517.2L561.3 516.2L561.4 515.1L561.5 514.0L561.5 512.8L561.6 511.8L561.7 511.1L561.8 510.1L561.8 509.2L561.9 508.2L562.0 507.3L562.1 505.8L562.1 504.7L562.2 504.2L562.3 503.0L562.4 501.8L562.4 501.1L562.5 499.9L562.6 498.8L562.7 497.9L562.7 497.0L562.8 496.1L562.9 494.7L563.0 494.1L563.0 493.1L563.1 492.0L563.2 491.1L563.3 490.2L563.3 488.7L563.4 488.0L563.5 487.1L563.6 486.1L563.6 485.1L563.7 483.8L563.8 483.3L563.9 482.2L563.9 480.8L564.0 480.0L564.1 479.3L564.2 477.8L564.4 476.9L564.5 476.3L564.6 475.2L564.7 473.8L564.8 473.1L565.0 471.9L565.1 471.1L565.2 470.2L565.3 468.8L565.4 467.8L565.6 466.8L565.7 465.9L565.8 464.7L565.9 463.8L566.0 462.9L566.2 462.0L566.3 460.7L566.4 460.0L566.5 459.3L566.6 458.0L566.7 456.9L566.9 456.1L566.9 455.0L567.0 453.8L567.1 453.0L567.2 451.7L567.2 451.1L567.3 449.8L567.3 448.9L567.4 448.3L567.4 447.2L567.5 446.2L567.5 445.1L567.6 444.1L567.7 443.1L567.7 442.3L567.8 440.8L567.8 440.2L567.9 438.9L567.9 437.9L568.0 437.2L568.0 436.1L568.1 435.2L568.1 434.2L568.2 433.1L568.3 431.8L568.3 430.7L568.4 430.0L568.4 429.1L568.5 427.9L568.5 426.7L568.6 425.7L568.6 424.8L568.7 424.1L568.7 422.7L568.8 421.8L568.9 420.9L568.9 420.1L569.0 419.3L569.0 417.7L569.1 416.8L569.1 416.3L569.2 415.3L569.2 413.8L569.3 412.9L569.3 412.0L569.4 410.9L569.5 410.0L569.5 409.0L569.6 407.9L569.6 406.7L569.7 405.8L569.7 404.8L569.8 403.8L569.8 403.1L569.9 402.1L570.0 400.9L570.0 400.2L570.1 399.1L570.2 397.9L570.3 397.0L570.4 395.8L570.5 395.3L570.6 394.0L570.7 392.7L570.8 391.8L570.9 391.1L571.0 389.9L571.1 389.1L571.2 387.8L571.3 387.2L571.4 386.2L571.5 384.8L571.6 384.1L571.7 382.8L571.8 382.1L571.9 381.2L572.0 380.2L572.1 378.8L572.2 377.8L572.3 377.1L572.4 376.0L572.5 374.8L572.6 373.8L572.7 373.0L572.8 371.8L572.9 371.1L573.0 369.8L573.1 368.9L573.2 368.0L573.3 367.0L573.4 366.1L573.5 364.7L573.6 364.1L573.7 362.8L573.8 361.9L573.9 361.1L574.0 360.1L574.1 359.1L574.2 358.2L574.3 356.8L574.4 355.9L574.5 355.1L574.6 353.9L574.7 352.8L574.8 351.8L574.9 351.2L575.0 350.2L575.2 349.1L575.3 348.3L575.4 347.2L575.6 345.9L575.7 344.9L575.9 344.1L576.0 342.7L576.2 342.1L576.3 340.8L576.5 339.7L576.6 339.0L576.8 337.8L576.9 337.3L577.1 336.2L577.2 335.0L577.4 333.8L577.5 332.8L577.6 332.0L577.8 331.0L577.9 329.9L578.1 329.1L578.2 328.0L578.4 327.2L578.5 325.8L578.7 324.7L578.8 323.9L579.0 323.0L579.1 321.9L579.3 321.1L579.4 319.8L579.6 318.9L579.7 318.0L579.9 317.1L580.0 316.2L580.2 314.9L580.3 314.0L580.5 313.3L580.7 312.3L580.8 311.1L581.0 309.8L581.2 309.0L581.3 308.1L581.5 306.9L581.7 305.7L581.8 305.3L582.0 304.2L582.2 302.8L582.3 302.0L582.5 301.1L582.7 299.9L582.8 298.7L583.0 298.2L583.2 297.2L583.3 296.0L583.5 294.8L583.7 293.9L583.8 292.8L584.0 292.3L584.2 290.7L584.3 289.9L584.5 289.2L584.7 287.8L584.8 286.8L585.0 285.7L585.2 284.8L585.3 284.0L585.5 283.2L585.7 281.8L585.9 280.8L586.1 280.2L586.3 279.0L586.5 278.0M600.0 229.8L600.2 230.8L600.4 232.3L600.6 232.8L600.8 233.9L601.0 235.1L601.2 236.2L601.4 237.2L601.6 238.0L601.8 239.3L602.0 240.1L602.2 240.9L602.4 242.0L602.6 243.1L602.8 244.1L603.0 244.8L603.2 245.8L603.4 247.3L603.6 247.8L603.8 249.2L603.9 249.9L604.0 250.8L604.1 251.9L604.2 253.0L604.3 254.3L604.4 254.8L604.5 256.2L604.6 256.9L604.7 257.8L604.8 259.1L604.8 259.9L604.9 260.8L605.0 262.0L605.1 263.2L605.2 264.2L605.3 265.0L605.3 265.7L605.4 267.2L605.5 268.1L605.6 269.2L605.7 270.3L605.8 270.9L605.8 272.2L605.9 273.2L606.0 273.9L606.1 274.9L606.2 275.9L606.2 276.9L606.3 277.9L606.4 278.8L606.5 279.8L606.6 281.2L606.7 281.9L606.8 283.1L606.8 284.2L606.9 285.2L607.0 285.8L607.1 287.3L607.2 288.2L607.3 289.3L607.3 290.1L607.4 291.2L607.5 292.2L607.6 292.9L607.7 294.1L607.8 294.9L607.8 296.2L607.9 296.8L608.0 298.0L608.1 298.9L608.2 300.2L608.3 300.9L608.3 302.2L608.4 303.2L608.5 304.2L608.6 304.8L608.7 306.3L608.8 307.1L608.8 308.1L608.9 309.1L609.0 309.7L609.1 311.2L609.2 312.0L609.2 313.0L609.3 313.9L609.4 315.2L609.5 316.2L609.6 317.2L609.7 317.8L609.8 318.9L609.8 319.8L609.9 320.8L610.0 321.9L610.1 322.7L610.2 324.2L610.2 324.8L610.3 325.7L610.4 326.7L610.5 328.1L610.6 328.8L610.7 330.0L610.8 330.9L610.8 332.2L610.9 333.3L611.0 333.9L611.1 335.1L611.2 336.2L611.3 337.0L611.3 338.2L611.4 339.1L611.5 339.9L611.6 341.2L611.7 342.0L611.8 342.8L611.8 344.1L611.9 345.2L612.0 346.0L612.1 347.0L612.2 347.9L612.2 349.2L612.3 350.1L612.4 350.8L612.5 351.9L612.6 352.9L612.7 354.3L612.8 355.1L612.8 355.8L612.9 357.2L613.0 357.7L613.1 359.1L613.2 360.0L613.2 361.1L613.3 362.0L613.4 362.8L613.5 364.0L613.6 365.2L613.7 366.2L613.8 366.9L613.8 367.8L613.9 369.1L614.0 370.2L614.1 370.8L614.2 372.2L614.3 373.3L614.4 374.0L614.5 374.9L614.6 376.1L614.7 377.3L614.8 377.8L614.9 378.9L615.0 379.9L615.1 381.1L615.2 381.8L615.3 383.0L615.4 384.0L615.5 385.1L615.6 385.8L615.7 387.3L615.8 388.3L615.9 389.0L616.0 390.2L616.1 390.8L616.2 392.2L616.3 393.0L616.4 394.2L616.5 395.2L616.6 395.9L616.7 397.3L616.8 397.8L616.9 398.7L617.0 400.0L617.1 401.2L617.2 402.2L617.3 403.3L617.4 404.0L617.5 405.3L617.6 406.0L617.7 406.8L617.8 408.1L617.9 409.2L618.0 410.0L618.1 411.1L618.2 411.9L618.3 412.9L618.4 414.0L618.5 415.0L618.6 416.0L618.7 416.8L618.8 417.7L618.9 418.9L619.0 420.1L619.1 421.1L619.1 421.8L619.2 422.9L619.3 424.0L619.4 424.8L619.5 426.1L619.5 427.2L619.6 427.8L619.7 429.1L619.8 430.1L619.8 431.1L619.9 432.1L620.0 433.1L620.0 433.9L620.1 435.2L620.2 436.3L620.3 436.7L620.4 438.3L620.4 439.0L620.5 439.8L620.6 440.7L620.7 442.2L620.7 443.1L620.8 443.8L620.9 445.0L621.0 446.1L621.0 447.3L621.1 447.9L621.2 449.2L621.3 449.8L621.3 450.8L621.4 451.8L621.5 452.9L621.6 454.1L621.6 454.9L621.7 455.8L621.8 456.8L621.9 457.8L621.9 458.8L622.0 459.9L622.1 461.0L622.2 461.8L622.3 463.0L622.4 464.0L622.5 465.3L622.6 466.0L622.7 467.3L622.9 468.0L623.0 468.8L623.1 470.1L623.2 470.8L623.3 471.8L623.4 472.7L623.5 474.1L623.6 475.3L623.7 475.9L623.8 476.9L623.9 478.0L624.0 478.9L624.1 480.1L624.2 480.9L624.3 481.8L624.5 483.2L624.6 484.0L624.7 484.7L624.8 486.2L624.9 487.1L625.0 487.9L625.1 489.1L625.2 490.3L625.3 490.9L625.4 492.0L625.5 492.9L625.6 494.0L625.7 495.1L625.8 496.1L625.9 497.3L626.1 497.8L626.2 498.9L626.3 500.2L626.4 501.2L626.5 502.1L626.6 503.1L626.7 503.9L626.8 505.3L626.9 506.0L627.0 506.9L627.1 507.8L627.2 508.8L627.3 510.2L627.4 511.2L627.5 511.7L627.7 512.9L627.8 514.0L627.9 515.0L628.0 515.9L628.1 517.2L628.2 517.9L628.3 519.0L628.4 520.3L628.5 521.1L628.6 522.0L628.7 522.9L628.8 523.9L628.9 525.1L629.0 526.2L629.1 526.9L629.3 527.9L629.4 528.9L629.5 529.9L629.6 531.2L629.7 532.0L629.8 532.9L629.9 533.9L630.0 535.2L630.1 535.8L630.2 537.1L630.3 537.7L630.4 538.8L630.5 539.7L630.5 541.2L630.6 541.8L630.7 542.8L630.8 543.7L630.9 544.9L631.0 546.1L631.1 547.1L631.2 548.2L631.3 549.3L631.4 550.0L631.5 551.3L631.5 551.8L631.6 553.3L631.7 554.0L631.8 554.8L631.9 556.1L632.0 557.2L632.1 557.9L632.2 558.8L632.3 560.2L632.4 561.2L632.5 562.1L632.5 563.3L632.6 563.7L632.7 564.7L632.8 565.8L632.9 566.7L633.0 568.1L633.1 569.1L633.2 569.8L633.3 570.8L633.4 571.8L633.5 573.1L633.5 574.1L633.6 575.3L633.7 575.9L633.8 577.3L633.9 578.0L634.0 578.9L634.1 579.9L634.2 580.8L634.3 582.3L634.4 583.3L634.5 584.1L634.5 584.8L634.6 585.8L634.7 586.8L634.8 587.9L635.0 589.1L635.1 589.7L635.3 591.0L635.5 592.0L635.7 592.6L635.9 593.8L636.1 595.0L636.4 595.9L636.6 596.7L636.8 598.0L637.0 598.8L637.3 599.6L637.5 600.6L637.7 601.9L637.9 602.8L638.2 603.8L638.4 604.6L638.6 605.3L638.8 606.3L639.1 607.3L639.3 608.5L639.5 609.1L639.7 610.5L640.0 611.5L640.2 612.3L640.4 612.9L640.6 614.4L640.9 615.1L641.1 616.2L641.3 617.1L641.6 618.2L641.8 619.0M1332.9 905.0L1333.2 904.0L1333.4 903.0L1333.6 901.9L1333.9 900.7L1334.1 899.8L1334.3 898.7L1334.5 898.1L1334.7 897.1L1335.0 896.1L1335.2 895.1L1335.4 894.3L1335.6 893.1L1335.8 891.9L1336.0 891.2L1336.2 889.9L1336.4 889.2L1336.6 887.9L1336.9 887.4L1337.1 886.2L1337.3 885.1L1337.5 884.5L1337.7 883.0L1337.9 882.5L1338.1 881.4L1338.3 880.1L1338.5 879.5L1338.7 878.4L1339.0 877.6L1339.2 876.5L1339.4 875.4L1339.6 874.7L1339.8 873.2L1340.0 872.7L1340.2 871.3L1340.4 870.4L1340.6 869.3L1340.9 868.8L1341.1 867.6L1341.3 866.8L1341.5 865.5L1341.7 864.8" stroke="#000" stroke-width="1.1" stroke-dasharray="1.3 2.7" fill="none"/><rect x="1095" y="741" width="2" height="2" fill="#111"/><rect x="1123" y="209" width="2" height="4" fill="#111"/><path d="M427.5 1013.2L428.5 1013.3L429.5 1013.5L430.5 1014.3L431.5 1014.2L432.5 1014.4L433.5 1014.5L434.5 1014.3L435.5 1014.3L436.5 1013.8L437.5 1013.7L438.5 1013.2L439.5 1013.2L440.5 1013.3L441.5 1013.7L442.5 1013.5L443.5 1014.0L444.5 1013.8L445.5 1014.3L446.5 1014.3L447.5 1014.6L448.5 1014.6L449.5 1015.0L450.5 1015.0L451.5 1014.4L452.5 1013.5L453.5 1013.5L454.5 1014.2L455.5 1014.2L456.5 1014.1L457.5 1013.8L458.5 1013.9L459.5 1013.7L460.5 1013.6L461.5 1014.0L462.5 1013.7L463.5 1014.0L464.5 1013.7L465.5 1013.7L466.5 1013.5L467.5 1013.5L468.5 1013.6L469.5 1013.7L470.5 1013.7L471.5 1014.2L472.5 1014.4L473.5 1014.6L474.5 1014.4L475.5 1013.8L476.5 1013.7L477.5 1013.9L478.5 1014.6L479.5 1014.2L480.5 1013.9L481.5 1013.4L482.5 1014.4L483.5 1014.4L484.5 1015.0L485.5 1013.9L486.5 1013.4L487.5 1012.9L488.5 1013.1L489.5 1013.0L490.5 1012.9L491.5 1013.1L492.5 1013.6L493.5 1014.1L494.5 1014.0L495.5 1013.8L496.5 1013.0L497.5 1013.3L498.5 1013.7L499.5 1014.4L500.5 1013.8L501.5 1013.6L502.5 1013.3L503.5 1013.7L504.5 1013.3L505.5 1013.3L506.5 1013.5L507.5 1013.9L508.5 1014.3L509.5 1014.0L510.5 1013.8L511.5 1013.4L512.5 1013.8L513.5 1013.8L514.5 1013.7L515.5 1013.8L516.5 1014.2L517.5 1014.1L518.5 1014.3L519.5 1014.0L520.5 1014.4L521.5 1013.4L522.5 1012.9L523.5 1012.7L524.5 1013.4L525.5 1013.7L526.5 1014.0L527.5 1013.9L528.5 1014.0L529.5 1013.9L530.5 1014.2L531.5 1013.5L532.5 1013.3L533.5 1012.9L534.5 1013.3L535.5 1013.8L536.5 1013.8L537.5 1013.5L538.5 1013.1L539.5 1013.1L540.5 1013.3L541.5 1013.3L542.5 1013.3L543.5 1013.7L544.5 1013.8L545.5 1014.0L546.5 1013.8L547.5 1014.2L548.5 1014.1L549.5 1014.2L550.5 1014.2L551.5 1014.5L552.5 1014.8L553.5 1014.3L554.5 1013.6L555.5 1014.0L556.5 1013.8L557.5 1014.0L558.5 1012.9L559.5 1013.4L560.5 1013.5L561.5 1013.3L562.5 1013.5L563.5 1013.4L564.5 1014.3L565.5 1014.2L566.5 1014.4L567.5 1014.3L568.5 1013.9L569.5 1013.9L570.5 1013.6L571.5 1013.8M641.9 367.6L642.3 366.5L642.8 366.0L643.2 364.7L643.7 364.2L644.2 362.8L644.6 362.8L645.1 361.6L645.6 360.9L646.1 359.6L646.6 358.6L647.1 357.4L647.6 356.3L648.1 355.7L648.6 354.8L649.1 353.7L649.6 353.0L650.1 352.1L650.6 352.0L651.2 351.0L651.7 349.9L652.2 349.0L652.8 348.4L653.3 347.2L653.9 346.5L654.5 345.5L655.0 345.1L655.6 343.8L656.1 342.7L656.7 342.3L657.3 341.8L657.9 341.2L658.5 340.0L659.1 338.8L659.7 337.6L660.3 337.4L660.9 337.2L661.5 336.8L662.1 335.6L662.7 334.5L663.3 333.5L663.9 332.5L664.6 331.8L665.2 331.0L665.8 330.3L666.4 329.6L667.1 329.0L667.7 328.3L668.4 327.5L669.0 326.6L669.7 326.1L670.3 325.5L671.0 325.0L671.7 323.8L672.3 322.8L673.0 321.8L673.7 321.6L674.4 321.2L675.0 320.5L675.7 319.8L676.4 319.0L677.1 317.9L677.8 316.8L678.5 315.8L679.2 315.3L679.9 314.7L680.6 314.1L681.3 313.1L682.0 311.8L682.7 310.9L683.4 310.8L684.2 310.4L684.9 310.0L685.6 308.9L686.3 308.4L687.1 307.4L687.8 307.0L688.5 305.9L689.3 305.2L690.0 304.4L690.8 303.5L691.5 302.9L692.3 302.2L693.0 301.5L693.8 300.8L694.5 300.0L695.3 299.4L696.0 298.3L696.8 297.9L697.6 297.4L698.3 297.9L699.1 297.5L699.9 296.5L700.6 295.4L701.4 294.1L702.2 294.0L703.0 292.9L703.7 292.6L704.5 292.6L705.3 292.0L706.1 290.8L706.9 289.2L707.7 288.9L708.5 288.7L709.3 288.1L710.0 287.5L710.8 287.1L711.6 286.7L712.4 286.4L713.2 285.4L714.0 284.6L714.8 283.7L715.7 283.1L716.5 282.2L717.3 281.8L718.1 281.2L718.9 281.0L719.7 280.6L720.5 280.6L721.3 279.9L722.1 279.3L723.0 277.9L723.8 277.8L724.6 277.0L725.4 276.4L726.3 275.3L727.1 275.0L727.9 274.6L728.7 274.3L729.6 274.2L730.4 273.7L731.2 273.3L732.1 271.4L732.9 270.6L733.8 270.0L734.6 270.3L735.4 270.7L736.3 269.9L737.1 268.8L738.0 268.1L738.8 267.3L739.7 267.3L740.5 267.0L741.4 266.8L742.2 266.4L743.1 265.1L743.9 265.2L744.8 264.9L745.6 264.4L746.5 263.5L747.4 262.6L748.2 262.7L749.1 262.6L749.9 262.3L750.8 261.9L751.7 261.3L752.5 260.8L753.4 260.1L754.3 259.4L755.2 259.0L756.0 258.4L756.9 258.2L757.8 257.5L758.7 257.2L759.5 256.9L760.4 256.9L761.3 256.5L762.2 255.8L763.1 255.2L763.9 254.9L764.8 254.3L765.7 254.5L766.6 253.9L767.5 253.7L768.4 252.9L769.3 252.6L770.2 252.2L771.1 251.5L772.0 250.7L772.9 250.1L773.8 249.7L774.7 249.5L775.6 250.0L776.5 249.1L777.4 249.4L778.3 248.4L779.2 248.5L780.1 247.6L781.0 247.1L781.9 246.7L782.8 245.9L783.7 245.4L784.6 244.9L785.5 245.0L786.4 244.6L787.4 244.4L788.3 243.9L789.2 243.6L790.1 243.5L791.0 243.1L792.0 242.6L792.9 242.2L793.8 241.6L794.7 241.2L795.6 240.4L796.6 240.6L797.5 240.4L798.4 240.1L799.4 240.2L800.3 240.1L801.2 240.1L802.1 239.1L803.1 239.2L804.0 239.1L804.9 238.9L805.9 237.9L806.8 236.8L807.8 236.7L808.7 236.4L809.6 236.2L810.6 236.0L811.5 235.9L812.5 236.1L813.4 235.4L814.3 234.8L815.3 234.4L816.2 234.9L817.2 235.0L818.1 234.6L819.1 234.2L820.0 234.0L821.0 233.5L821.9 233.6L822.9 233.4L823.8 233.4L824.8 232.7L825.7 231.8L826.7 231.9L827.7 232.1L828.6 232.2L829.6 231.8L830.5 230.9L831.5 230.6L832.5 230.0L833.4 229.8L834.4 229.8L835.3 229.8L836.3 229.7L837.3 228.9L838.2 228.6L839.2 228.0L840.2 228.0L841.1 228.2L842.1 227.8L843.1 227.9L844.0 227.2L845.0 227.2L846.0 226.1L847.0 225.6L847.9 225.5L848.9 226.1L849.9 226.6L850.9 226.3L851.8 226.1L852.8 225.9L853.8 225.9L854.8 225.1L855.7 225.3L856.7 224.8L857.7 224.6L858.7 223.8L859.7 223.9L860.6 224.0L861.6 224.0L862.6 223.9L863.6 224.0L864.6 223.9L865.6 223.2L866.6 222.9L867.5 222.5L868.5 222.6L869.5 222.2L870.5 221.7L871.5 221.3L872.5 221.1L873.5 221.0L874.5 220.6L875.5 221.0L876.4 221.2L877.4 221.8L878.4 221.4L879.4 221.1L880.4 220.3L881.4 220.4L882.4 220.1L883.4 220.3L884.4 219.6L885.4 219.5L886.4 219.1L887.4 218.9L888.4 219.4L889.4 219.2L890.4 219.0L891.4 217.9L892.4 217.8L893.4 217.3L894.4 217.5L895.4 216.8L896.4 216.9L897.4 217.2L898.4 217.8L899.4 217.6L900.4 217.1L901.4 217.3L902.4 217.5L903.4 217.1L904.4 216.7L905.4 216.3L906.4 216.4L907.4 216.3L908.5 216.5L909.5 216.3L910.5 216.6L911.5 216.9L912.5 217.2L913.5 217.0L914.5 216.5L915.5 216.3L916.5 215.7L917.5 215.3L918.5 215.3L919.6 215.3L920.6 215.0L921.6 214.6L922.6 214.5L923.6 214.1L924.6 213.9L925.6 214.1L926.6 213.9L927.7 214.1L928.7 214.2L929.7 214.6L930.7 214.6L931.7 214.3L932.7 214.2L933.7 213.6L934.8 213.3L935.8 213.4L936.8 213.7L937.8 213.7L938.8 213.9L939.8 214.0L940.9 213.9L941.9 213.6L942.9 213.2L943.9 212.6L944.9 212.3L945.9 212.6L947.0 213.2L948.0 213.3L949.0 213.2L950.0 212.9L951.0 213.1L952.1 212.8L953.1 212.8L954.1 212.5L955.1 212.2L956.1 212.5L957.2 212.7L958.2 213.0L959.2 212.5L960.2 212.5L961.2 212.2L962.3 212.3L963.3 211.9L964.3 212.3L965.3 211.9L966.3 212.2L967.4 212.0L968.4 212.4L969.4 211.6L970.4 211.7L971.4 211.0L972.5 211.0L973.5 211.1L974.5 211.8L975.5 211.9L976.5 211.3L977.6 210.7L978.6 210.9L979.6 210.8L980.6 211.1L981.6 211.0L982.7 211.1L983.7 211.1L984.7 211.2L985.7 210.8L986.7 210.9L987.8 210.9L988.8 211.2L989.8 211.0L990.8 210.7L991.8 210.3L992.9 210.3L993.9 210.3L994.9 210.6L995.9 211.0L996.9 210.4L998.0 210.6L999.0 210.2L1000.0 210.7L1001.0 210.3L1002.0 210.6L1003.1 210.5L1004.1 210.9L1005.1 210.5L1006.1 210.3L1007.1 210.1L1008.2 210.0L1009.2 210.1L1010.2 210.5L1011.2 210.7L1012.2 210.5L1013.2 210.0L1014.3 209.9L1015.3 209.9L1016.3 210.1L1017.3 210.2L1018.3 209.9L1019.3 209.7L1020.4 209.3L1021.4 209.6L1022.4 209.4L1023.4 209.6L1024.4 209.7L1025.4 209.7L1026.5 210.3L1027.5 210.2L1028.5 210.5L1029.5 209.9L1030.5 210.4L1031.5 209.9L1032.5 209.8L1033.5 208.9L1034.6 209.4L1035.6 209.9L1036.6 210.2L1037.6 209.3L1038.6 208.9L1039.6 208.9L1040.6 209.6L1041.6 210.0L1042.6 210.2L1043.7 210.0L1044.7 209.6L1045.7 208.7L1046.7 209.0L1047.7 208.9L1048.7 209.6L1049.7 209.5L1050.7 209.3L1051.7 209.2L1052.7 209.0L1053.7 209.1L1054.7 208.9L1055.7 209.1L1056.7 209.2L1057.7 209.4L1058.7 209.3L1059.8 209.4L1060.8 209.8L1061.8 209.0L1062.8 209.1L1063.8 209.3L1064.8 209.5L1065.8 208.8L1066.8 208.4L1067.8 209.0L1068.8 210.1L1069.8 209.7L1070.8 208.9L1071.8 207.8L1072.7 208.5L1073.7 209.4L1074.7 210.1L1075.7 209.8L1076.7 209.1L1077.7 209.1L1078.7 208.8L1079.7 209.0L1080.7 208.6L1081.7 208.6L1082.7 208.7L1083.7 209.1L1084.7 208.8L1085.7 209.3L1086.6 209.5L1087.6 209.9L1088.6 209.6L1089.6 208.9L1090.6 209.0L1091.6 209.2L1092.6 209.1L1093.5 208.8L1094.5 208.1L1095.5 208.6L1096.5 208.8L1097.5 208.6L1098.5 208.5L1099.4 207.7L1100.4 208.3L1101.4 208.1L1102.4 208.8L1103.4 208.5L1104.3 208.7L1105.3 208.9L1106.3 208.9L1107.3 208.5L1108.2 208.1L1109.2 208.2L1110.2 208.7L1111.2 208.5L1112.1 208.4L1113.1 208.5L1114.1 208.7L1115.0 208.7L1116.0 208.5L1117.0 208.6L1117.9 208.7L1118.9 208.7L1119.9 208.1L1120.8 207.9L1121.8 208.2L1122.8 208.4L1123.7 208.4L1124.7 207.9L1125.6 208.2L1126.6 208.4L1127.6 208.5L1128.5 208.4L1129.5 207.8L1130.4 208.1L1131.4 207.9L1132.3 208.1L1133.3 207.7L1134.3 207.6L1135.2 207.4L1136.2 207.3L1137.1 207.7L1138.1 207.7L1139.0 207.7L1139.9 207.5L1140.9 207.2L1141.8 207.1L1142.8 207.4L1143.0 207.7L1143.6 208.8L1144.1 209.5L1144.7 210.7L1145.2 211.0L1145.8 211.7L1146.3 211.9L1146.9 213.5L1147.4 213.9L1148.0 214.8L1148.5 215.0L1149.1 216.3L1149.6 217.6L1150.2 219.3L1150.7 219.8L1151.2 220.1L1151.8 220.2L1152.3 221.1L1152.9 222.1L1153.4 223.2L1153.9 224.1L1154.5 225.0L1155.0 225.2L1155.5 226.2L1156.1 227.2L1156.6 228.1L1157.1 228.7L1157.7 229.6L1158.2 230.8L1158.7 231.5L1159.2 232.1L1159.8 232.8L1160.3 233.9L1160.8 234.4L1161.3 235.8L1161.9 236.0L1162.4 236.6L1162.9 237.7L1163.4 239.7L1164.0 241.1L1164.5 241.8L1165.0 242.2L1165.5 242.7L1166.0 243.5L1166.5 244.2L1167.1 245.6L1167.6 246.2L1168.1 246.8L1168.6 247.5L1169.1 248.0L1169.6 249.6L1170.2 250.6L1170.7 251.8L1171.2 252.5L1171.7 253.4L1172.2 254.2L1172.7 254.6L1173.2 254.9L1173.7 255.6L1174.2 256.5L1174.7 257.7L1175.2 258.3L1175.8 259.5L1176.3 260.7L1176.8 261.6L1177.3 262.1L1177.8 262.8L1178.3 264.2L1178.8 265.2L1179.3 266.1L1179.8 266.5L1180.3 267.8L1180.8 268.4L1181.3 269.4L1181.8 270.0L1182.3 270.8L1182.8 271.8L1183.3 272.5L1183.8 273.7L1184.3 274.7L1184.8 275.5L1185.3 276.2L1185.8 277.4L1186.3 278.1L1186.8 278.9L1187.3 279.7L1187.8 280.9L1188.3 281.5L1188.8 282.0L1189.3 283.5L1189.8 284.8L1190.2 285.6L1190.7 285.8L1191.2 286.8L1191.7 287.8L1192.2 289.0L1192.7 289.8L1193.2 290.5L1193.7 291.3L1194.2 291.9L1194.6 293.4L1195.1 294.2L1195.6 295.2L1196.1 295.7L1196.6 296.7L1197.1 297.8L1197.5 298.6L1198.0 299.4L1198.5 300.2L1199.0 301.3L1199.5 301.8L1199.9 302.8L1200.4 302.9L1200.9 303.9L1201.4 304.7L1201.8 305.8L1202.3 307.1L1202.8 307.8L1203.2 308.7L1203.7 309.1L1204.2 310.1L1204.7 311.4L1205.1 312.6L1205.6 313.4L1206.1 314.6L1206.5 315.6L1207.0 316.7L1207.4 317.1L1207.9 317.6L1208.4 318.3L1208.8 318.7L1209.3 319.6L1209.8 320.5L1210.2 322.1L1210.7 323.0L1211.1 323.9L1211.6 324.4L1212.0 325.2L1212.5 326.4L1212.9 327.4L1213.4 328.5L1213.8 329.1M1355.9 905.4L1356.7 905.9L1357.4 905.9L1358.2 905.6L1358.9 905.9L1359.7 906.8L1360.8 907.3L1361.9 907.4L1363.0 907.3L1364.0 907.2L1365.1 907.0L1366.2 906.9L1366.7 906.4L1367.2 906.3L1367.8 905.3L1368.3 904.1L1368.8 902.5L1369.8 902.8L1370.8 902.6L1371.8 902.8L1372.9 902.8L1373.9 903.0L1374.9 903.0L1375.9 902.7L1376.9 902.5L1377.9 901.9L1378.9 901.7L1380.0 901.3L1381.0 902.1L1382.0 901.9L1383.0 901.7L1384.0 901.2L1385.0 901.4L1386.0 901.7L1387.0 901.8L1388.0 901.9L1389.0 902.0L1390.0 902.0L1391.0 902.0L1392.0 902.0L1393.0 902.2L1394.0 902.0L1395.0 901.1L1396.0 901.2L1397.0 901.0L1398.0 901.9L1399.0 901.5L1400.0 901.6L1400.9 901.1L1401.9 901.5L1402.9 901.3L1403.9 902.0L1404.9 901.8L1405.9 902.1L1406.9 901.5L1407.9 901.3L1408.9 901.3L1409.9 901.4L1410.9 901.6L1411.9 901.1L1412.9 901.1L1413.9 901.2L1414.9 901.3L1415.9 901.1L1416.9 900.7L1417.9 901.1L1418.9 901.2L1419.9 901.2L1420.9 901.0L1421.9 901.2L1422.9 901.2L1423.9 901.5L1424.9 902.0L1425.9 901.8L1426.9 901.6L1427.9 900.8L1428.9 901.4L1429.9 902.0L1430.9 902.0L1431.9 901.8L1432.9 901.1L1433.9 900.2L1434.9 900.0L1435.8 900.7L1436.8 901.2L1437.8 901.8L1438.8 901.6L1439.8 901.8L1440.8 901.2L1441.8 901.7L1442.8 902.1L1443.8 902.5L1444.8 901.5L1445.8 901.4L1446.8 900.9L1447.8 900.9L1448.8 900.9L1449.8 901.3L1450.8 901.7L1451.8 901.8L1452.8 901.7L1453.8 901.7L1454.8 901.3L1455.8 901.3L1456.8 901.4L1457.8 902.3L1458.8 901.8L1459.8 902.0L1460.8 901.3L1461.8 902.1L1462.8 901.6L1463.8 901.8L1464.8 901.5L1465.8 901.7L1466.8 901.7L1467.8 901.9L1468.8 902.2L1469.8 902.0L1470.8 902.0L1471.7 901.8L1472.7 901.7L1473.7 901.2L1474.7 901.5L1475.7 902.1L1476.7 902.1L1477.7 902.0L1478.7 901.5L1479.7 901.9L1480.7 902.2L1481.7 902.4L1482.7 902.7L1483.7 901.9L1484.7 901.9L1485.7 901.4L1486.7 902.1L1487.7 902.2L1488.7 902.2L1489.7 901.4L1490.7 901.3L1491.7 901.6L1492.7 902.2L1493.7 902.1L1494.7 902.2L1495.7 901.9L1496.7 902.0L1497.7 901.9L1498.7 902.4L1499.7 902.4L1500.7 902.3L1501.7 901.8L1502.7 901.7L1503.7 901.8L1504.7 901.7L1505.7 901.4L1506.6 901.4L1507.6 901.1L1508.6 901.6L1509.6 901.5L1510.6 902.3L1511.6 902.6L1512.6 902.7L1513.6 902.0L1514.6 901.8L1515.6 902.2L1516.6 902.6L1517.6 902.7L1518.6 902.9L1519.6 902.8L1520.6 902.2L1521.6 901.8L1522.6 901.9L1523.6 901.9L1524.6 902.1L1525.6 902.0L1526.6 902.9L1527.6 902.2L1528.6 902.6L1529.6 902.2L1530.6 902.5L1531.6 902.4L1532.6 901.8L1533.6 902.4L1534.6 902.4L1535.6 902.9L1536.6 902.9L1537.6 903.3L1538.6 902.8L1539.6 902.2L1540.6 901.1L1541.5 901.5L1542.5 901.3L1543.5 902.0L1544.5 902.0L1545.5 901.8L1546.5 901.7L1547.5 901.6L1548.5 902.2L1549.5 901.7L1550.5 901.7L1551.5 901.3L1552.5 901.5L1553.5 901.7L1554.5 902.0L1555.5 902.3L1556.5 902.4L1557.5 902.2L1558.5 902.0" stroke="#000" stroke-width="1.75" fill="none" stroke-linejoin="round"/><path d="M571.5 1013.8L571.6 1013.0L571.7 1012.1L571.8 1010.9L571.9 1010.0L572.0 1008.8L572.2 1008.2L572.3 1006.8L572.4 1005.6L572.5 1004.9L572.6 1003.8L572.7 1003.4L572.8 1002.2L572.9 1001.7L573.0 1000.6L573.1 999.2L573.2 998.0L573.3 996.7L573.4 995.9L573.5 995.1L573.6 993.9L573.7 992.3L573.8 991.9L573.9 991.2L574.0 990.5L574.1 988.4L574.2 987.7L574.3 987.3L574.4 986.3L574.5 985.0L574.6 983.8L574.7 983.0L574.8 982.1L574.9 981.1L575.0 980.4L575.0 979.6L575.1 978.5L575.2 977.2L575.3 975.6L575.4 974.6L575.5 973.5L575.6 972.7L575.7 971.7L575.8 970.9L575.9 970.2L575.9 969.4L576.0 968.4L576.1 967.6L576.2 966.5L576.3 966.0L576.4 964.6L576.5 963.7L576.6 962.0L576.6 961.0L576.7 959.7L576.8 959.3L576.9 958.3L577.0 957.9L577.0 956.7L577.1 955.4L577.2 953.5L577.3 952.3L577.4 951.4L577.5 950.9L577.5 950.0L577.6 949.2L577.7 948.2L577.8 947.2L577.8 946.0L577.9 944.9L578.0 943.7L578.1 943.1L578.2 942.5L578.2 941.5L578.3 940.4L578.4 939.4L578.5 938.2L578.5 937.6L578.6 936.4L578.7 935.3L578.8 933.9L578.8 933.0L578.9 932.6L579.0 931.9L579.0 930.8L579.1 929.3L579.2 927.9L579.3 927.0L579.3 925.9L579.4 924.9L579.5 924.3L579.5 923.8L579.6 922.7L579.7 921.1L579.7 920.1L579.8 919.4L579.9 918.4L579.9 917.4L580.0 916.5L580.1 916.1L580.1 915.2L580.2 913.7L580.3 912.3L580.3 911.2L580.4 910.5L580.5 909.9L580.5 909.0L580.6 907.7L580.7 906.4L580.7 905.6L580.8 904.6L580.9 903.9L580.9 902.5L581.0 901.2L581.0 900.0L581.1 899.2L581.2 897.7L581.2 896.4L581.3 895.4L581.3 895.1L581.4 894.0L581.5 892.9L581.5 892.1L581.6 891.8L581.6 890.3L581.7 889.2L581.8 887.7L581.8 887.7L581.9 886.8L581.9 885.7L582.0 884.3L582.1 883.4L582.1 883.0L582.2 882.1L582.2 880.7L582.3 879.2L582.3 878.0L582.4 877.1L582.4 876.3L582.5 874.8L582.6 873.9L582.6 873.2L582.7 872.9L582.7 871.9L582.8 870.7L582.8 869.2L582.9 868.0L582.9 866.8L583.0 866.0L583.0 864.9L583.1 864.4L583.2 863.4L583.2 862.7L583.3 861.4L583.3 860.4L583.4 858.8L583.4 857.7L583.5 856.6L583.5 856.4L583.6 855.2L583.6 854.5L583.7 853.4L583.7 852.7L583.8 851.5L583.8 850.5L583.9 849.6L583.9 849.2L584.0 847.4L584.0 846.1L584.1 845.0L584.1 844.7L584.2 843.5L584.2 841.4L584.3 840.0L584.3 839.1L584.4 838.2L584.4 837.3L584.5 836.7L584.5 835.9L584.6 835.0L584.6 833.9L584.7 833.4L584.7 832.1L584.8 831.2L584.8 830.0L584.9 829.6L584.9 828.3L584.9 827.3L585.0 825.7L585.0 825.2L585.1 824.3L585.1 823.9L585.2 822.7L585.2 822.0L585.3 820.6L585.3 819.2L585.4 817.6L585.4 816.7L585.5 816.4L585.5 815.5L585.6 814.4L585.6 813.2L585.6 812.0L585.7 811.4L585.7 810.4L585.8 809.5L585.8 808.2L585.9 806.9L585.9 806.0L586.0 805.0L586.0 804.1L586.1 803.6L586.1 802.5L586.1 801.2L586.2 800.0L586.2 799.2L586.3 798.7L586.3 797.3L586.4 795.9L586.4 794.5L586.5 793.8L586.5 792.8L586.5 792.3L586.6 791.5L586.6 791.3L586.7 790.2L586.7 788.8L586.8 787.1L586.8 786.4L586.9 785.7L586.9 784.8L587.0 783.5L587.0 783.0L587.0 782.2L587.1 781.0L587.1 779.3L587.2 777.9L587.2 777.1L587.3 776.0L587.3 775.2L587.4 774.4L587.4 773.5L587.4 772.6L587.5 771.1L587.5 770.2L587.6 769.1L587.6 768.4L587.7 767.6L587.7 766.6L587.8 765.6L587.8 765.1L587.8 763.8L587.9 762.3L587.9 761.3L588.0 760.8L588.0 759.8L588.1 758.6L588.1 757.8L588.2 756.8L588.2 755.8L588.3 754.6L588.3 753.5L588.3 752.2L588.4 751.2L588.4 750.3L588.5 749.6L588.5 748.2L588.6 747.4L588.6 746.6L588.7 745.8L588.7 744.7L588.8 743.2L588.8 742.0L588.9 740.7L588.9 739.9L588.9 739.1L589.0 738.3L589.0 737.0L589.1 735.9L589.1 735.2L589.2 734.8L589.2 733.5L589.3 732.3L589.3 731.3L589.4 730.6L589.4 729.4L589.5 728.3L589.5 727.6L589.6 726.4L589.6 725.0L589.7 723.8L589.7 723.0L589.8 722.3L589.8 721.6L589.9 720.4L589.9 719.5L590.0 718.4L590.0 717.5L590.1 716.6L590.1 715.5L590.2 714.7L590.2 713.4L590.3 712.2L590.3 710.9L590.4 710.5L590.4 709.8L590.5 709.0L590.5 707.4L590.6 706.3L590.6 705.0L590.7 704.3L590.7 703.2L590.8 702.4L590.8 701.4L590.9 700.1L590.9 698.9L591.0 698.0L591.0 697.0L591.1 696.0L591.1 695.1L591.2 694.5L591.3 694.0L591.3 692.7L591.4 691.3L591.4 690.3L591.5 689.3L591.5 688.4L591.6 687.3L591.6 686.4L591.7 685.6L591.7 684.7L591.8 683.8L591.9 682.5L591.9 681.4L592.0 680.2L592.0 679.8L592.1 678.0L592.1 677.0L592.2 675.8L592.3 675.8L592.3 674.6L592.4 673.5L592.4 672.3L592.5 671.4L592.6 670.6L592.6 669.3L592.7 668.3L592.7 667.4L592.8 666.4L592.9 665.5L592.9 664.7L593.0 664.2L593.0 663.2L593.1 661.8L593.2 660.3L593.2 659.1L593.3 657.9L593.4 657.3L593.4 656.7L593.5 655.6L593.6 653.9L593.6 653.0L593.7 652.1L593.7 651.8L593.8 650.7L593.9 650.2L593.9 648.8L594.0 647.4L594.1 646.0L594.1 645.2L594.2 644.5L594.3 643.4L594.3 642.4L594.4 641.1L594.5 640.4L594.6 639.2L594.6 638.6L594.7 638.2L594.8 637.1L594.8 635.6L594.9 633.7L595.0 632.9L595.0 632.3L595.1 631.7L595.2 630.5L595.3 629.1L595.3 628.0L595.4 627.6L595.5 627.1L595.6 626.4L595.6 625.2L595.7 624.2L595.8 622.8L595.9 622.0L595.9 620.9L596.0 620.2L596.1 618.9L596.2 617.6L596.2 616.2L596.3 615.7L596.4 614.4L596.5 613.5L596.6 612.2L596.6 611.2L596.7 610.4L596.8 609.6L596.9 609.1L597.0 607.7L597.0 606.5L597.1 605.1L597.2 603.7L597.3 602.9L597.4 602.3L597.5 601.7L597.5 600.7L597.6 599.8L597.7 599.7L597.8 598.5L597.9 597.7L598.0 596.1L598.1 594.9L598.2 594.0L598.2 593.3L598.3 592.8L598.4 591.2L598.5 590.0L598.6 588.8L598.7 587.7L598.8 586.9L598.9 585.3L599.0 584.0L599.1 582.8L599.1 582.2L599.2 582.3L599.3 581.3L599.4 580.2L599.5 578.7L599.6 577.8L599.7 577.1L599.8 576.3L599.9 575.3L600.0 574.1L600.1 572.9L600.2 572.0L600.3 571.4L600.4 570.2L600.5 569.5L600.6 567.5L600.7 566.3L600.8 565.0L600.9 564.4L601.0 564.4L601.1 563.4L601.2 562.1L601.3 560.6L601.4 559.5L601.5 559.2L601.6 558.1L601.7 556.6L601.8 555.0L602.0 554.4L602.1 554.1L602.2 553.0L602.3 551.8L602.4 550.4L602.5 549.8L602.6 548.9L602.7 548.0L602.8 547.0L602.9 545.3L603.1 544.4L603.2 543.8L603.3 543.1L603.4 542.3L603.5 541.0L603.6 540.8L603.7 539.5L603.9 538.6L604.0 536.9L604.1 536.1L604.2 534.9L604.3 533.5L604.5 532.7L604.6 531.6L604.7 531.0L604.8 530.1L604.9 529.2L605.1 527.8L605.2 526.3L605.3 525.6L605.4 525.3L605.6 525.0L605.7 523.5L605.8 522.3L605.9 520.8L606.1 520.0L606.2 518.9L606.3 517.6L606.5 516.8L606.6 515.8L606.7 515.0L606.9 514.3L607.0 513.2L607.1 512.3L607.3 510.8L607.4 509.9L607.5 508.9L607.7 508.1L607.8 507.2L607.9 506.0L608.1 505.2L608.2 503.9L608.4 502.8L608.5 501.4L608.6 501.0L608.8 500.6L608.9 499.7L609.1 498.9L609.2 497.7L609.4 496.5L609.5 495.1L609.6 493.8L609.8 492.9L609.9 491.2L610.1 490.5L610.2 489.9L610.4 489.2L610.5 488.3L610.7 487.3L610.8 486.8L611.0 485.8L611.1 484.5L611.3 483.5L611.4 482.4L611.6 481.5L611.8 480.3L611.9 478.9L612.1 478.1L612.2 476.9L612.4 476.3L612.5 475.3L612.7 474.6L612.9 473.6L613.0 472.5L613.2 472.0L613.4 471.0L613.5 469.8L613.7 468.2L613.9 467.2L614.0 466.9L614.2 465.9L614.4 465.2L614.5 463.9L614.7 463.3L614.9 461.8L615.0 460.6L615.2 459.2L615.4 458.4L615.5 457.3L615.7 456.1L615.9 455.3L616.1 454.8L616.3 454.1L616.4 452.8L616.6 451.9L616.8 450.5L617.0 449.8L617.2 448.6L617.3 448.2L617.5 447.1L617.7 446.3L617.9 445.3L618.1 444.2L618.3 443.2L618.5 441.8L618.7 440.9L618.9 439.8L619.1 438.7L619.3 437.8L619.5 436.8L619.7 436.5L619.9 435.3L620.1 434.6L620.3 433.6L620.5 432.8L620.7 430.7L620.9 429.5L621.1 428.4L621.3 428.2L621.6 427.0L621.8 426.2L622.0 425.1L622.2 424.3L622.5 423.2L622.7 422.6L622.9 421.6L623.2 420.3L623.4 419.2L623.6 418.3L623.9 417.1L624.1 415.9L624.4 414.9L624.6 414.0L624.9 413.5L625.1 412.2L625.4 411.9L625.7 410.4L625.9 409.6L626.2 408.3L626.5 407.5L626.7 406.2L627.0 405.2L627.3 404.5L627.6 404.2L627.9 403.9L628.2 402.3L628.4 401.6L628.7 400.1L629.0 399.3L629.3 397.7L629.6 396.6L630.0 396.0L630.3 395.3L630.6 394.9L630.9 393.9L631.2 392.9L631.6 391.4L631.9 390.2L632.2 389.4L632.6 388.6L632.9 387.8L633.2 386.9L633.6 385.9L633.9 385.0L634.3 384.3L634.7 383.8L635.0 382.9L635.4 382.2L635.8 380.9L636.1 380.4L636.5 379.1L636.9 378.2L637.3 376.9L637.7 375.9L638.1 375.2L638.5 374.3L638.9 373.4L639.3 372.2L639.7 371.4L640.2 370.8L640.6 369.9L641.0 368.9L641.5 368.0L641.9 367.6M1213.8 329.1L1214.3 330.0L1214.7 331.1L1215.2 332.2L1215.6 333.4L1216.1 334.4L1216.5 335.5L1216.9 336.4L1217.4 337.3L1217.8 337.9L1218.2 338.4L1218.7 339.2L1219.1 340.4L1219.5 340.9L1220.0 341.8L1220.4 342.1L1220.8 343.8L1221.3 344.8L1221.7 345.8L1222.1 347.0L1222.5 347.6L1222.9 348.7L1223.4 349.4L1223.8 350.5L1224.2 351.3L1224.6 352.1L1225.0 352.6L1225.4 353.5L1225.8 353.8L1226.2 355.6L1226.6 356.9L1227.0 358.5L1227.4 359.2L1227.8 359.7L1228.2 360.0L1228.6 360.6L1229.0 361.3L1229.4 362.4L1229.8 363.4L1230.2 364.7L1230.6 365.6L1230.9 366.7L1231.3 367.1L1231.7 368.2L1232.1 368.8L1232.5 370.0L1232.8 370.8L1233.2 371.8L1233.6 372.8L1233.9 374.0L1234.3 374.7L1234.7 375.0L1235.0 376.0L1235.4 377.8L1235.7 379.2L1236.1 380.1L1236.4 380.7L1236.8 381.7L1237.1 382.0L1237.5 383.3L1237.8 384.3L1238.2 385.3L1238.5 385.8L1238.8 386.8L1239.2 387.8L1239.5 389.2L1239.8 390.2L1240.1 391.3L1240.5 391.7L1240.8 393.1L1241.1 394.7L1241.4 395.5L1241.7 395.8L1242.0 396.4L1242.4 397.8L1242.7 398.8L1243.0 399.1L1243.3 399.8L1243.6 401.1L1243.9 402.4L1244.2 403.1L1244.5 403.8L1244.8 404.8L1245.1 405.9L1245.4 406.9L1245.6 408.3L1245.9 409.0L1246.2 409.9L1246.5 410.3L1246.8 411.3L1247.1 412.0L1247.3 412.9L1247.6 414.0L1247.9 414.8L1248.2 415.8L1248.4 417.1L1248.7 418.9L1249.0 419.7L1249.2 420.4L1249.5 421.0L1249.8 422.5L1250.0 423.1L1250.3 423.8L1250.6 424.7L1250.8 425.7L1251.1 426.2L1251.3 426.8L1251.6 428.0L1251.8 429.8L1252.1 430.7L1252.3 431.8L1252.6 432.9L1252.8 434.2L1253.1 435.5L1253.3 436.4L1253.6 436.7L1253.8 437.2L1254.0 437.9L1254.3 439.0L1254.5 439.9L1254.7 440.8L1255.0 442.1L1255.2 442.9L1255.5 443.8L1255.7 444.7L1255.9 445.8L1256.1 447.0L1256.4 447.8L1256.6 449.1L1256.8 450.5L1257.0 451.1L1257.3 451.8L1257.5 452.7L1257.7 454.6L1257.9 455.7L1258.2 456.5L1258.4 456.8L1258.6 457.6L1258.8 458.3L1259.0 459.1L1259.2 459.8L1259.5 460.9L1259.7 462.1L1259.9 463.0L1260.1 464.1L1260.3 465.4L1260.5 466.3L1260.7 467.6L1260.9 468.7L1261.1 469.8L1261.3 470.7L1261.5 471.3L1261.7 472.4L1261.9 473.1L1262.2 474.4L1262.4 475.0L1262.6 476.7L1262.8 477.6L1263.0 479.0L1263.1 479.5L1263.3 480.2L1263.5 480.8L1263.7 482.0L1263.9 483.1L1264.1 484.5L1264.3 485.9L1264.5 487.0L1264.7 488.1L1264.9 488.5L1265.1 489.2L1265.3 490.0L1265.5 491.6L1265.7 493.0L1265.8 494.0L1266.0 494.3L1266.2 495.1L1266.4 496.4L1266.6 497.6L1266.8 498.3L1267.0 498.8L1267.1 499.8L1267.3 501.2L1267.5 501.9L1267.7 502.8L1267.9 503.6L1268.1 504.4L1268.2 504.9L1268.4 505.9L1268.6 507.3L1268.8 508.7L1269.0 509.8L1269.1 511.1L1269.3 511.9L1269.5 513.0L1269.7 513.6L1269.9 514.2L1270.0 515.1L1270.2 516.8L1270.4 518.1L1270.6 519.3L1270.7 520.2L1270.9 521.1L1271.1 521.9L1271.3 523.1L1271.4 524.1L1271.6 525.1L1271.8 525.8L1272.0 526.8L1272.1 527.9L1272.3 528.7L1272.5 530.1L1272.6 530.9L1272.8 531.8L1273.0 532.5L1273.2 533.2L1273.3 535.0L1273.5 535.8L1273.7 536.8L1273.9 537.5L1274.0 538.9L1274.2 540.2L1274.4 540.7L1274.5 541.2L1274.7 542.0L1274.9 543.3L1275.1 544.8L1275.2 546.0L1275.4 547.0L1275.6 548.0L1275.7 548.4L1275.9 548.9L1276.1 549.5L1276.2 550.8L1276.4 552.0L1276.6 553.1L1276.8 554.1L1276.9 555.2L1277.1 556.2L1277.3 557.4L1277.4 558.7L1277.6 559.6L1277.8 560.4L1278.0 561.4L1278.1 562.5L1278.3 563.7L1278.5 564.2L1278.7 565.4L1278.8 565.9L1279.0 567.4L1279.2 567.8L1279.3 569.3L1279.5 570.3L1279.7 571.5L1279.9 572.4L1280.0 573.0L1280.2 574.5L1280.4 575.3L1280.6 576.2L1280.7 576.7L1280.9 577.7L1281.1 578.9L1281.3 580.3L1281.4 581.2L1281.6 581.9L1281.8 582.5L1282.0 583.4L1282.2 584.5L1282.3 585.8L1282.5 587.2L1282.7 588.1L1282.9 588.7L1283.0 589.8L1283.2 591.0L1283.4 592.1L1283.6 592.8L1283.8 593.7L1283.9 595.0L1284.1 596.1L1284.3 596.8L1284.5 597.5L1284.7 598.5L1284.8 599.7L1285.0 601.0L1285.2 601.5L1285.4 602.9L1285.6 603.8L1285.7 604.7L1285.9 605.6L1286.1 606.2L1286.3 607.6L1286.5 608.4L1286.6 609.7L1286.8 610.8L1287.0 611.3L1287.2 612.1L1287.4 612.7L1287.5 614.0L1287.7 615.1L1287.9 617.0L1288.1 618.1L1288.3 618.8L1288.5 619.8L1288.6 621.0L1288.8 622.2L1289.0 622.9L1289.2 624.0L1289.4 625.2L1289.6 625.4L1289.7 626.5L1289.9 627.2L1290.1 628.7L1290.3 629.4L1290.5 630.8L1290.7 632.0L1290.8 632.8L1291.0 633.3L1291.2 633.7L1291.4 634.8L1291.6 635.9L1291.8 637.2L1291.9 638.2L1292.1 638.9L1292.3 639.6L1292.5 640.7L1292.7 642.1L1292.9 643.4L1293.0 644.2L1293.2 645.1L1293.4 646.2L1293.6 647.1L1293.8 647.7L1294.0 648.6L1294.2 650.2L1294.3 651.5L1294.5 652.4L1294.7 652.9L1294.9 654.1L1295.1 654.7L1295.3 655.7L1295.4 656.3L1295.6 657.1L1295.8 657.9L1296.0 659.0L1296.2 660.5L1296.4 661.5L1296.6 662.4L1296.7 663.5L1296.9 664.2L1297.1 665.0L1297.3 666.0L1297.5 667.5L1297.7 668.9L1297.8 669.5L1298.0 670.6L1298.2 671.6L1298.4 672.9L1298.6 673.4L1298.8 674.3L1299.0 675.5L1299.1 676.7L1299.3 677.6L1299.5 678.4L1299.7 679.7L1299.9 680.7L1300.1 681.7L1300.2 682.2L1300.4 682.9L1300.6 683.3L1300.8 684.9L1301.0 686.2L1301.2 687.6L1301.3 688.8L1301.5 689.4L1301.7 690.6L1301.9 691.0L1302.1 691.7L1302.3 692.2L1302.4 693.3L1302.6 694.7L1302.8 695.7L1303.0 697.0L1303.2 698.1L1303.4 699.0L1303.5 699.6L1303.7 700.6L1303.9 702.0L1304.1 703.5L1304.3 704.5L1304.5 704.7L1304.7 705.6L1304.8 706.3L1305.0 708.0L1305.2 709.1L1305.4 710.2L1305.6 710.7L1305.8 711.3L1305.9 712.4L1306.1 713.8L1306.3 714.6L1306.5 715.6L1306.7 716.2L1306.9 717.3L1307.1 718.5L1307.3 719.6L1307.4 720.2L1307.6 720.7L1307.8 722.0L1308.0 723.1L1308.2 724.6L1308.4 725.3L1308.6 726.4L1308.8 726.9L1308.9 728.1L1309.1 729.7L1309.3 730.5L1309.5 731.3L1309.7 732.0L1309.9 733.5L1310.1 735.2L1310.3 736.5L1310.5 737.4L1310.7 737.4L1310.9 737.9L1311.0 738.5L1311.2 739.8L1311.4 740.7L1311.6 741.9L1311.8 743.0L1312.0 744.1L1312.2 745.3L1312.4 746.5L1312.6 747.2L1312.8 747.6L1313.0 748.1L1313.2 748.9L1313.4 750.2L1313.6 751.4L1313.8 753.0L1314.0 754.3L1314.2 755.5L1314.4 756.7L1314.6 757.3L1314.8 757.9L1315.0 758.1L1315.2 759.0L1315.4 760.1L1315.6 761.4L1315.8 762.2L1316.0 763.2L1316.2 764.9L1316.4 766.0L1316.6 766.8L1316.8 767.2L1317.0 768.2L1317.2 769.0L1317.5 770.3L1317.7 771.0L1317.9 772.6L1318.1 773.2L1318.3 774.1L1318.5 774.9L1318.7 776.3L1318.9 777.3L1319.1 778.2L1319.4 779.0L1319.6 780.6L1319.8 781.3L1320.0 781.8L1320.2 782.5L1320.4 783.9L1320.7 785.5L1320.9 786.4L1321.1 786.7L1321.3 787.0L1321.5 788.6L1321.8 790.0L1322.0 791.5L1322.2 792.0L1322.4 793.0L1322.7 793.9L1322.9 794.7L1323.1 795.6L1323.3 797.0L1323.6 798.6L1323.8 799.8L1324.0 800.7L1324.3 800.9L1324.5 801.4L1324.7 802.3L1325.0 803.4L1325.2 804.4L1325.4 805.9L1325.7 807.0L1325.9 808.0L1326.1 807.9L1326.4 809.1L1326.6 810.2L1326.9 811.5L1327.1 812.5L1327.3 812.8L1327.6 814.1L1327.8 815.3L1328.1 816.4L1328.3 817.1L1328.6 817.9L1328.8 819.6L1329.1 820.6L1329.3 821.6L1329.6 822.5L1329.8 823.3L1330.1 824.4L1330.3 824.9L1330.6 825.9L1330.8 826.3L1331.1 828.0L1331.3 829.0L1331.6 829.7L1331.9 830.0L1332.1 831.1L1332.4 832.5L1332.6 833.8L1332.9 834.3L1333.2 835.4L1333.4 836.5L1333.7 838.2L1334.0 839.5L1334.2 839.9L1334.5 840.5L1334.8 840.9L1335.1 842.3L1335.3 843.3L1335.6 844.5L1335.9 844.6L1336.2 845.4L1336.4 846.4L1336.7 848.0L1337.0 849.1L1337.3 849.9L1337.6 851.0L1337.9 851.9L1338.1 852.7L1338.4 854.0L1338.7 854.7L1339.0 855.8L1339.3 856.7L1339.6 858.1L1339.9 859.0L1340.2 859.9L1340.5 860.4L1340.8 861.0L1341.1 861.8L1341.4 863.5L1341.7 864.8L1342.0 866.0L1342.3 866.5L1342.6 867.8L1342.9 868.6L1343.2 869.6L1343.5 870.2L1343.8 871.7L1344.1 872.6L1344.5 873.6L1344.8 874.2L1345.1 874.9L1345.4 876.1L1345.7 877.3L1346.0 878.2L1346.4 879.0L1346.7 879.3L1347.0 880.5L1347.3 881.3L1347.7 881.8L1348.0 883.1L1348.3 884.0L1348.7 885.7L1349.0 886.2L1349.3 887.1L1349.7 887.7L1350.0 888.4L1350.3 889.9L1350.7 891.3L1351.0 892.9L1351.4 893.6L1351.7 894.1L1352.1 894.8L1352.4 896.4L1352.8 897.8L1353.1 898.7L1353.5 898.6L1353.8 899.3L1354.2 899.5L1354.5 901.0L1354.9 901.6L1355.3 903.2L1355.6 904.1L1355.9 905.4" stroke="#000" stroke-width="1.3" fill="none" stroke-linejoin="round"/><path d="M427.5 175.0V1021.5H1572" stroke="#262626" stroke-width="1" fill="none"/><path d="M427.5 1021.5v-11M569.5 1021.5v-11M710.5 1021.5v-11M852.5 1021.5v-11M993.5 1021.5v-11M1134.5 1021.5v-11M1276.5 1021.5v-11M1417.5 1021.5v-11M1559.5 1021.5v-11M427.5 1021.5h11M427.5 880.5h11M427.5 739.5h11M427.5 598.5h11M427.5 457.5h11M427.5 316.5h11M427.5 175.5h11" stroke="#262626" stroke-width="1" fill="none"/><path d="M249.5 175.0V1021.5H272M249.5 175.5h9M249.5 269.5h9M249.5 363.5h9M249.5 457.5h9M249.5 551.5h9M249.5 645.5h9M249.5 739.5h9M249.5 833.5h9M249.5 927.5h9M249.5 1021.5h9" stroke="#262626" stroke-width="1" fill="none"/><path d="M1559 1021.5H1572M1737 1021.5H1749" stroke="#262626" stroke-width="1" fill="none"/><path d="M1581.5 175.0V1021.5M1581.5 1021.5h-9M1581.5 880.5h-9M1581.5 739.5h-9M1581.5 598.5h-9M1581.5 457.5h-9M1581.5 316.5h-9M1581.5 175.5h-9M1757.5 175.0V1021.5M1757.5 1021.5h-9M1757.5 900.5h-9M1757.5 779.5h-9M1757.5 658.5h-9M1757.5 538.5h-9M1757.5 417.5h-9M1757.5 296.5h-9M1757.5 175.5h-9" stroke="#ff0000" stroke-width="1" fill="none"/><g fill="#262626"><text x="427.5" y="1038" text-anchor="middle">0.5</text><text x="569.0" y="1038" text-anchor="middle">1</text><text x="710.5" y="1038" text-anchor="middle">1.5</text><text x="852.0" y="1038" text-anchor="middle">2</text><text x="993.5" y="1038" text-anchor="middle">2.5</text><text x="1135.0" y="1038" text-anchor="middle">3</text><text x="1276.5" y="1038" text-anchor="middle">3.5</text><text x="1418.0" y="1038" text-anchor="middle">4</text><text x="1559.5" y="1038" text-anchor="middle">4.5</text><text x="423" y="1026.0" text-anchor="end">1</text><text x="423" y="885.0" text-anchor="end">1.05</text><text x="423" y="744.0" text-anchor="end">1.1</text><text x="423" y="603.0" text-anchor="end">1.15</text><text x="423" y="462.0" text-anchor="end">1.2</text><text x="423" y="321.0" text-anchor="end">1.25</text><text x="423" y="180.0" text-anchor="end">1.3</text><text x="245" y="180.0" text-anchor="end">12</text><text x="245" y="274.0" text-anchor="end">10</text><text x="245" y="368.0" text-anchor="end">8</text><text x="245" y="462.0" text-anchor="end">6</text><text x="245" y="556.0" text-anchor="end">4</text><text x="245" y="650.0" text-anchor="end">2</text><text x="245" y="744.0" text-anchor="end">0</text><text x="245" y="838.0" text-anchor="end">-2</text><text x="245" y="932.0" text-anchor="end">-4</text><text x="245" y="1026.0" text-anchor="end">-6</text><text x="250.5" y="173" font-size="13" fill-opacity="0.8">&#215;</text><text x="261.5" y="173">10</text><text x="275.5" y="167.5" font-size="11">-4</text><text x="1526.5" y="1059.5" font-size="13" fill-opacity="0.8">&#215;</text><text x="1537" y="1059.5">10</text><text x="1550.5" y="1053" font-size="11">4</text><text transform="translate(390,597) rotate(-90)" text-anchor="middle" font-size="14.67">poti f a [V]</text><text transform="translate(221.5,597) rotate(-90)" text-anchor="middle" font-size="14.67">poti g f a [V/s]</text></g><g fill="#ff0000"><text x="1586" y="1026.0">0</text><text x="1586" y="885.0">0.5</text><text x="1586" y="744.0">1</text><text x="1586" y="603.0">1.5</text><text x="1586" y="462.0">2</text><text x="1586" y="321.0">2.5</text><text x="1586" y="180.0">3</text><text x="1762" y="1026.0">-3</text><text x="1762" y="905.1">-2</text><text x="1762" y="784.3">-1</text><text x="1762" y="663.4">0</text><text x="1762" y="542.6">1</text><text x="1762" y="421.7">2</text><text x="1762" y="300.9">3</text><text x="1762" y="180.0">4</text><text x="1722" y="173" font-size="13" fill-opacity="0.8">&#215;</text><text x="1732" y="173">10</text><text x="1746" y="167.5" font-size="11">-3</text><text transform="translate(1623.5,597) rotate(-90)" text-anchor="middle" font-size="14.67">druck f a [bar]</text><text transform="translate(1794,597) rotate(-90)" text-anchor="middle" font-size="14.67">druck g f a [bar/s]</text></g><text x="994" y="167" text-anchor="middle" font-weight="bold" font-size="15" fill="#000">poti f a, druck f a, poti g f a und druck g f a</text><rect x="1396.5" y="188.5" width="150" height="65" fill="#fff" stroke="#262626" stroke-width="1"/><path d="M1405 198.5H1445" stroke="#000" stroke-width="1"/><text x="1449" y="202.5" font-size="12" fill="#000">poti f a [V]</text><path d="M1405 213.5H1445" stroke="#f00" stroke-width="1"/><text x="1449" y="217.5" font-size="12" fill="#000">druck f a [bar]</text><path d="M1405 228.5H1445" stroke="#444" stroke-width="1" stroke-dasharray="2 2"/><text x="1449" y="232.5" font-size="12" fill="#000">poti g f a [V/s]</text><path d="M1405 243.5H1445" stroke="#f66" stroke-width="1" stroke-dasharray="2 2"/><text x="1449" y="247.5" font-size="12" fill="#000">druck g f a [bar/s]</text></svg>
<div id="taskbar" class="abs">
<div class="tbtn" style="left:59px;width:59px"></div>
<div class="tbtn" style="left:121px;width:59px"></div>
<div class="tbtn" style="left:183px;width:59px"></div>
<div class="tbtn act" style="left:431px;width:54px"></div>
<div class="abs" style="left:487px;top:2px;width:3px;height:37px;border-left:1px solid #6a7a90;border-right:1px solid #e4ecf5;box-sizing:border-box"></div>
<div class="tbtn" style="left:493px;width:59px"></div>
<div class="abs" style="left:1820px;top:5px;width:94px;text-align:center;font-size:11px;line-height:16.5px;color:#fff">10:56<br>20.05.2015</div>
<div class="abs" style="left:1905px;top:0px;width:15px;height:39px;background:linear-gradient(#7d8ca2,#56657b);border-left:1px solid #3a4556;box-sizing:border-box"></div>
</div>
<svg class="abs" style="left:0;top:1160px" width="1920" height="40">
<defs>
<radialGradient id="orb" cx="0.5" cy="0.35" r="0.6"><stop offset="0" stop-color="#7ec3ea"/><stop offset="0.55" stop-color="#1f5f9c"/><stop offset="1" stop-color="#0a2f5a"/></radialGradient>
<radialGradient id="orbglow" cx="0.5" cy="1" r="0.5"><stop offset="0" stop-color="#5ff0ff"/><stop offset="1" stop-color="#5ff0ff" stop-opacity="0"/></radialGradient>
<linearGradient id="ieg" x1="0" y1="0" x2="0" y2="1"><stop offset="0" stop-color="#7fd8f8"/><stop offset="1" stop-color="#1a7fd0"/></linearGradient>
<linearGradient id="fold" x1="0" y1="0" x2="0" y2="1"><stop offset="0" stop-color="#fbecb0"/><stop offset="1" stop-color="#e8c860"/></linearGradient>
<linearGradient id="outl" x1="0" y1="0" x2="1" y2="1"><stop offset="0" stop-color="#fde7a0"/><stop offset="1" stop-color="#f2a820"/></linearGradient>
<linearGradient id="ml" x1="0" y1="0" x2="1" y2="1"><stop offset="0" stop-color="#f7c030"/><stop offset="0.5" stop-color="#e2601a"/><stop offset="1" stop-color="#9e1c10"/></linearGradient>
<linearGradient id="np" x1="0" y1="0" x2="1" y2="1"><stop offset="0" stop-color="#c8f0f4"/><stop offset="1" stop-color="#50a8c0"/></linearGradient>
</defs>
<!-- start orb -->
<radialGradient id="orb2" cx="0.5" cy="0.3" r="0.75"><stop offset="0" stop-color="#8cc8ee"/><stop offset="0.45" stop-color="#2a70b0"/><stop offset="0.8" stop-color="#0c3c74"/><stop offset="1" stop-color="#0a2a55"/></radialGradient>
<circle cx="27" cy="20" r="17.5" fill="url(#orb2)" stroke="#1d3d66" stroke-width="1"/>
<ellipse cx="27" cy="33" rx="12" ry="6" fill="url(#orbglow)" opacity="0.9"/>
<ellipse cx="27" cy="11" rx="12" ry="7" fill="#fff" opacity="0.18"/>
<path d="M16.5 10.5 q5.5 -3 10 0 l-1.5 8 q-4.5 -3 -10 0 z" fill="#f25a22"/>
<path d="M27.5 10.5 q5.5 3 11 0 l-1.5 8 q-5.5 3 -11 0 z" fill="#8dc43a"/>
<path d="M15 19.5 q5.5 -3 10 0 l-1.5 8.5 q-4.5 -3 -10 0 z" fill="#2aa8ec"/>
<path d="M26 19.5 q5.5 3 11 0 l-1.5 8.5 q-5.5 3 -11 0 z" fill="#fcc21c"/>
<!-- IE -->
<path d="M100.5 19.5 A11 11 0 1 0 97.9 26.6" fill="none" stroke="url(#ieg)" stroke-width="5"/>
<path d="M79 19.5 H101" stroke="#3a9ee0" stroke-width="4"/>
<path d="M76 33 C70 25 88 6 102 12 C106 14 105 17 102 19" stroke="#f2b61c" stroke-width="2.2" fill="none"/>
<!-- explorer -->
<rect x="135" y="9" width="31" height="20" rx="1" fill="url(#fold)" stroke="#c9a040"/>
<rect x="137" y="6" width="10" height="4" fill="#f4e2a0" stroke="#c9a040" stroke-width="0.6"/>
<rect x="140" y="6.5" width="2.5" height="2" fill="#22aa22"/>
<rect x="147" y="8" width="2.5" height="2" fill="#cc2222"/>
<rect x="155" y="10" width="2.5" height="2" fill="#2277dd"/>
<path d="M140 35 v-9 h22 v9 h-5 v-5 h-12 v5 z" fill="#8fd0f4" stroke="#3f8fcf" stroke-width="1"/>
<!-- outlook -->
<rect x="197" y="5" width="30" height="28" fill="url(#outl)" stroke="#d98a10"/>
<ellipse cx="205" cy="17" rx="5" ry="8" fill="none" stroke="#e07a10" stroke-width="4"/>
<path d="M203 26 l20 -8 v14 h-20 z" fill="#fff6e0" stroke="#d9a050" stroke-width="0.8"/>
<circle cx="221" cy="14" r="4" fill="#fff5d8" stroke="#d99a30"/>
<!-- calculator -->
<rect x="263.5" y="6.5" width="22" height="28" rx="2" fill="#cfe6f7" stroke="#4a8fc8"/>
<rect x="266" y="9" width="17" height="6" fill="#eaf5fd" stroke="#5a8ab8" stroke-width="0.6"/>
<path d="M267 18 h3 m2 0 h3 m2 0 h3 M267 22 h3 m2 0 h3 m2 0 h3 M267 26 h3 m2 0 h3 m2 0 h3 M267 30 h3 m2 0 h3" stroke="#fff" stroke-width="2.5"/>
<rect x="280" y="27" width="3" height="5" fill="#f0a020"/>
<!-- visio -->
<rect x="322.5" y="5.5" width="22" height="26" rx="5" fill="#fff" stroke="#3a4aa0" stroke-width="1.5"/>
<path d="M330 8 l20 3 l-2 24 l-20 -3 z" fill="#f4f6fb" stroke="#aab" stroke-width="0.8"/>
<rect x="333" y="11" width="5" height="5" fill="#3a4aa0"/>
<rect x="334" y="20" width="2.5" height="2.5" fill="#223090"/>
<rect x="338" y="23" width="2.5" height="2.5" fill="#223090"/>
<path d="M345 21 l4 4 l-4 4 l-4 -4 z" fill="#223090"/>
<!-- notepad -->
<path d="M384 30 l8 -22 h18 l-3 26 h-20 z" fill="url(#np)" stroke="#8ab0b8" stroke-width="0.8"/>
<path d="M407 9 l5 6 l-2 20 l-4 -1 z" fill="#e8e0c0" stroke="#9a9070" stroke-width="0.6"/>
<path d="M394 7 h14" stroke="#777" stroke-width="1.5" stroke-dasharray="1 1"/>
<!-- matlab -->
<path d="M446 23.5 L455 19 L460 23 L453 26 Z" fill="#4a92dc"/><path d="M455 19.5 L462 10 L465.5 6.5 L471 18 L475 31 L471 28.5 L467.5 34 L463 24 L459 23 Z" fill="url(#ml)"/><path d="M465.5 6.5 L471 18 L475 31 L471 28.5 Z" fill="#a01c0c"/>
<!-- word -->
<rect x="507" y="5" width="28" height="28" fill="#fff" stroke="#2a5ab0" stroke-width="1.5"/>
<path d="M510 9 l3 13 l3 -9 l3 9 l3 -13" stroke="#2050b8" stroke-width="3.2" fill="none"/>
<path d="M518 24 l16 -4 v12 h-14 z" fill="#f8f8f8" stroke="#8aa0c8" stroke-width="0.8"/>
<!-- powerpoint -->
<rect x="570" y="5" width="28" height="28" fill="#fff" stroke="#d04a18" stroke-width="1.5"/>
<path d="M576 30 v-20 h6 a5 5 0 0 1 0 10 h-6" stroke="#d84a14" stroke-width="3.2" fill="none"/>
<path d="M583 22 l15 -3 v12 h-13 z" fill="#fbf3ef" stroke="#e09070" stroke-width="0.8"/>
<circle cx="590" cy="25" r="3" fill="none" stroke="#e06a40" stroke-width="1.5"/>
<!-- excel -->
<rect x="631" y="5" width="28" height="28" fill="#fff" stroke="#1f7a2a" stroke-width="1.5"/>
<path d="M636 9 l11 20 M647 9 l-11 20" stroke="#2a8a30" stroke-width="3.4"/>
<path d="M645 21 l15 -3 v14 h-13 z" fill="#f3faf2" stroke="#70a870" stroke-width="0.8"/>
<path d="M648 24 h10 M648 27 h10 M648 30 h10" stroke="#5a9a5a" stroke-width="0.8"/>
<!-- tray -->
<path d="M1737 24 l4.5 -5 l4.5 5 z" fill="#fff" stroke="#7086a0" stroke-width="0.6"/>
<rect x="1759" y="14" width="9" height="13" rx="1" fill="none" stroke="#fff" stroke-width="1.6"/>
<path d="M1765 15 h7 v6 h-7 z M1767 13 v2 M1770 13 v2 M1768.5 21 v6" stroke="#fff" stroke-width="1.6" fill="none"/>
<path d="M1783 26 h2 v-2 h-2 z M1786.5 26 h2 v-4 h-2 z M1790 26 h2 v-6 h-2 z M1793.5 26 h2 v-8 h-2 z M1797 26 h2 v-10 h-2 z" fill="#fff" stroke="#555" stroke-width="0.6"/>
<path d="M1807 17 h3 l4 -4 v14 l-4 -4 h-3 z" fill="#eee" stroke="#777" stroke-width="0.6"/>
<circle cx="1817" cy="24" r="4" fill="#fff" stroke="#e01818" stroke-width="2"/>
<path d="M1814.5 21.5 l5 5" stroke="#e01818" stroke-width="1.8"/>
</svg>
<svg class="abs" style="left:1821px;top:964px" width="76" height="72">
<rect x="1" y="1" width="74" height="69.5" rx="6" fill="#000" stroke="#fff" stroke-width="0.8"/>
<path fill="#fff" fill-rule="evenodd" d="M38.5 16.3 L18 42.7 H26 V45.7 H21 V55.7 H55.7 V45.7 H51 V42.7 H59 Z M38.5 22.7 L25.7 38.7 H29.7 V50 H25 V51.7 H52 V50 H47.3 V38.7 H51 Z"/>
<path fill="#fff" d="M37 29 H40.7 V48.7 H37 V35.3 H33 V32.3 Q36 32 37 29 Z"/>
</svg>
</body></html>
